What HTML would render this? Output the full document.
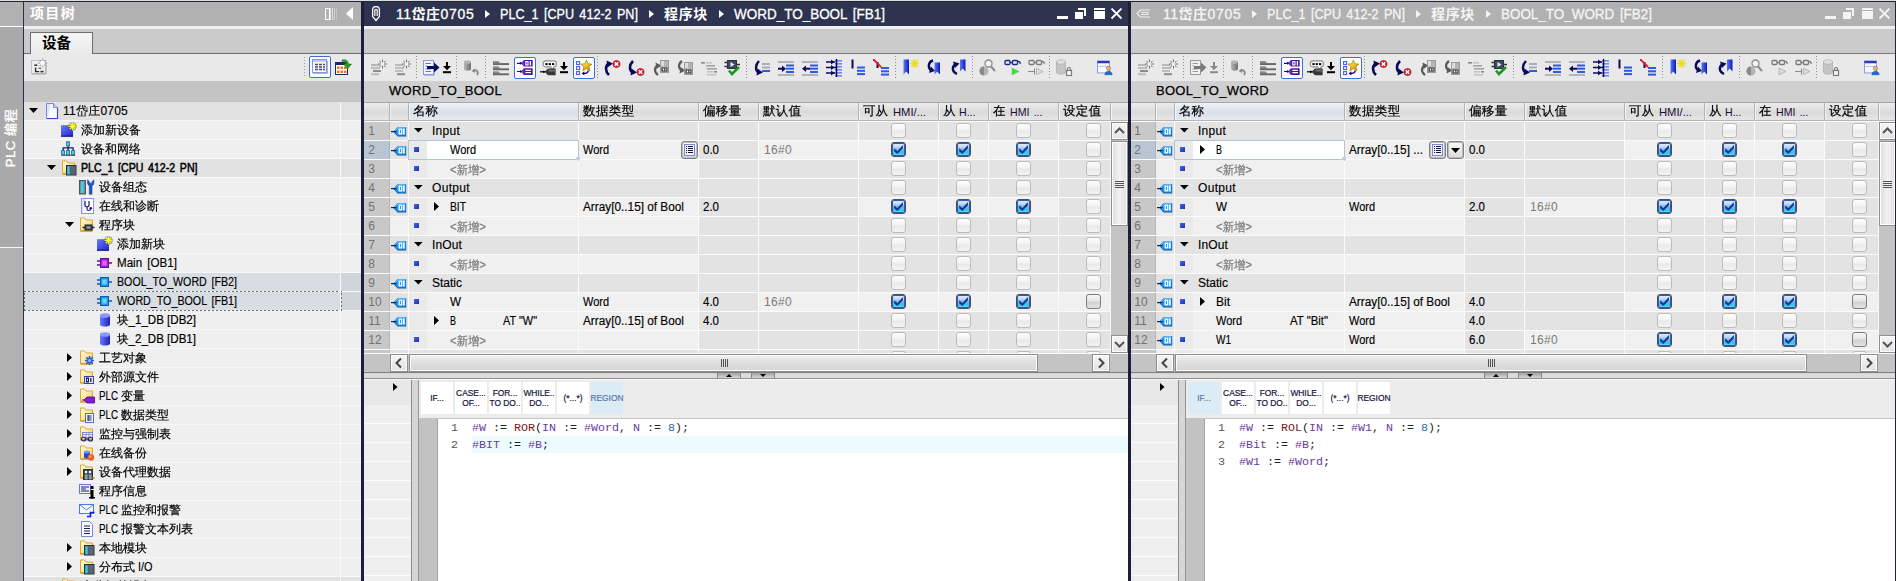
<!DOCTYPE html>
<html lang="zh"><head><meta charset="utf-8"><title>TIA Portal</title><style>
html,body{margin:0;padding:0;}
body{width:1896px;height:581px;overflow:hidden;position:relative;background:#e9e9e9;font-family:"Liberation Sans","WenQuanYi Zen Hei","Noto Sans CJK SC",sans-serif;font-size:12px}
#r{position:absolute;left:0;top:0;width:1896px;height:581px;overflow:hidden}
#r div,#r svg,#r .t{position:absolute}
.t{white-space:pre;display:block}
.m{font-family:"Liberation Mono",monospace;font-size:11.67px}
</style></head><body><div id="r">
<div style="left:0px;top:0px;width:1896px;height:1px;background:#dededc"></div>
<div style="left:0px;top:1px;width:1896px;height:1px;background:#1f243a"></div>
<div style="left:0px;top:2px;width:23px;height:579px;background:#b1b1b1"></div>
<div style="left:0px;top:26px;width:23px;height:1px;background:#fff"></div>
<div style="left:0px;top:27px;width:23px;height:220px;background:#a9a9a9"></div>
<div style="left:0px;top:247px;width:23px;height:1px;background:#f4f4f4"></div>
<div style="left:23px;top:2px;width:1px;height:579px;background:#2a2f45"></div>
<span class="t" style="left:-29.5px;top:128px;width:80px;height:20px;line-height:20px;text-align:center;font-size:13px;color:#fff;transform:rotate(-90deg);letter-spacing:0.6px;-webkit-text-stroke:0.35px #fff;font-family:&quot;Liberation Sans&quot;,&quot;Noto Sans CJK SC&quot;,sans-serif">PLC 编程</span>
<div style="left:24px;top:2px;width:337px;height:24px;background:#b1b1b1"></div>
<span class="t" style="left:30px;top:2.5px;height:20px;line-height:20px;font-size:14px;color:#fff;font-weight:bold;letter-spacing:1.333px;font-family:'Liberation Sans','Noto Sans CJK SC',sans-serif;">项目树</span>
<svg style="left:325px;top:8px;" width="14" height="12" viewBox="0 0 14 12"><rect x="0.5" y="0.5" width="4" height="11" fill="none" stroke="#fff"/><rect x="5" y="0" width="1" height="12" fill="#e4e4e4"/><rect x="7" y="0" width="1" height="12" fill="#dcdcdc"/><rect x="9" y="0" width="1" height="12" fill="#cfcfcf"/><rect x="11" y="0" width="1" height="12" fill="#c4c4c4"/></svg>
<svg style="left:346px;top:7px;" width="8" height="13" viewBox="0 0 8 13"><path d="M7,0 L7,13 L0,6.5 Z" fill="#fff"/></svg>
<div style="left:24px;top:26px;width:337px;height:3px;background:#f0f0f0"></div>
<div style="left:24px;top:29px;width:337px;height:24px;background:#cbcbcb"></div>
<div style="left:24px;top:53px;width:337px;height:1px;background:#6e6e6e"></div>
<div style="left:30px;top:32px;width:63px;height:22px;background:linear-gradient(#f6f6f6,#e9e9e9);border:1px solid #6e6e6e;border-bottom:none;box-sizing:border-box"></div>
<span class="t" style="left:42px;top:32.5px;height:20px;line-height:20px;font-size:14.5px;color:#000;font-weight:bold;letter-spacing:0.000px;font-family:'Liberation Sans','Noto Sans CJK SC',sans-serif;">设备</span>
<div style="left:24px;top:54px;width:337px;height:27px;background:#e9e9e9"></div>
<div style="left:24px;top:81px;width:337px;height:21px;background:#c4c4c4"></div>
<svg style="left:30px;top:58px;" width="18" height="18" viewBox="0 0 18 18"><rect x="1.5" y="2.5" width="14" height="13" fill="#eeeeee" stroke="#c2c2c2"/><path d="M2,16 L16,16 L16,4" fill="none" stroke="#a8a8a8"/><rect x="4.3" y="6.4" width="3" height="1.6" fill="#3c3c3c"/><path d="M5.6,9.5 L5.6,13.6 L9.2,13.6" fill="none" stroke="#2c2c2c" stroke-width="1.4"/><rect x="8.6" y="9.6" width="2.6" height="1.4" fill="#6a6a6a"/><rect x="10.4" y="12.8" width="3.2" height="1.6" fill="#3c3c3c"/><g stroke="#8c8c8c" stroke-width="0.9"><path d="M12.7,0.6 L12.7,9.4 M8.3,5 L17,5 M9.6,1.9 L15.8,8.1 M15.8,1.9 L9.6,8.1"/></g><circle cx="12.7" cy="5" r="2.2" fill="#f4f4f4"/><path d="M12.7,2.5 L12.7,7.5 M10.2,5 L15.2,5" stroke="#fff" stroke-width="1.2"/></svg>
<div style="left:304px;top:57px;width:1px;height:21px;background:repeating-linear-gradient(#9a9a9a 0 1px,transparent 1px 3px)"></div>
<div style="left:309px;top:56px;width:22px;height:22px;background:#fff;border:1px solid #3a6fd8;border-radius:2px;box-sizing:border-box"></div>
<svg style="left:312px;top:59px;" width="16" height="16" viewBox="0 0 16 16"><rect x="0.5" y="0.5" width="14" height="13" fill="#f6f7ff" stroke="#8a92e0"/><rect x="1" y="1" width="13" height="2" fill="#c4c9f4"/><path d="M3,5.5 L6,5.5 M7,5.5 L10,5.5 M11,5.5 L13,5.5 M3,8 L6,8 M7,8 L10,8 M11,8 L13,8 M3,10.5 L6,10.5 M7,10.5 L10,10.5 M11,10.5 L13,10.5" stroke="#4a4a6a" stroke-width="1.3"/><path d="M1,14.5 L15.5,14.5 L15.5,2" fill="none" stroke="#b0b4d8" stroke-width="1"/></svg>
<svg style="left:335px;top:58px;" width="18" height="18" viewBox="0 0 18 18"><rect x="0.5" y="4.5" width="12" height="12" fill="#fff" stroke="#1a2a6a"/><rect x="0.5" y="4.5" width="12" height="2.5" fill="#1a2a6a"/><g fill="#f07a10"><rect x="2" y="8.5" width="2.5" height="2.5"/><rect x="5.5" y="8.5" width="2.5" height="2.5"/><rect x="9" y="8.5" width="2.5" height="2.5"/><rect x="2" y="12.5" width="2.5" height="2.5"/><rect x="5.5" y="12.5" width="2.5" height="2.5"/><rect x="9" y="12.5" width="2.5" height="2.5"/></g><path d="M7,2 C11,1 13.5,3 13.5,6 L16.5,6 L12.5,11 L8.5,6 L11,6 C11,4 9.5,3 7,3.5 Z" fill="#2a9a2a" stroke="#1a6a1a" stroke-width="0.5"/></svg>
<div style="left:24px;top:102px;width:316px;height:18px;background:#e1e1e1"></div>
<div style="left:341px;top:102px;width:20px;height:18px;background:#e1e1e1"></div>
<div style="left:24px;top:120px;width:337px;height:1px;background:#f8f8f8"></div>
<svg style="left:29px;top:108px;" width="9" height="5" viewBox="0 0 9 5"><path d="M0,0 L9,0 L4.5,5 Z" fill="#000"/></svg>
<svg style="left:45px;top:103px;" width="16" height="16" viewBox="0 0 16 16"><path d="M1.5,0.5 L8.5,0.5 L12.5,4.5 L12.5,15.5 L1.5,15.5 Z" fill="#fbfbff" stroke="#7a86e0" stroke-width="1"/><path d="M2,1 L6,1 L3,14 L2,14Z" fill="#dfe3fb"/><path d="M8.5,0.5 L8.5,4.5 L12.5,4.5" fill="#c9d0f6" stroke="#7a86e0" stroke-width="1"/><path d="M12.5,5 L12.5,15.5 L2,15.5" fill="none" stroke="#3a48c8" stroke-width="1.2"/></svg>
<span class="t" style="left:63px;top:101.4px;height:20px;line-height:20px;font-size:12px;color:#000;font-weight:normal;letter-spacing:0.230px;word-spacing:2px;-webkit-text-stroke:0.15px #000;">11岱庄0705</span>
<div style="left:24px;top:121px;width:316px;height:18px;background:#efefef"></div>
<div style="left:341px;top:121px;width:20px;height:18px;background:#efefef"></div>
<div style="left:24px;top:139px;width:337px;height:1px;background:#f8f8f8"></div>
<svg style="left:61px;top:122px;" width="16" height="16" viewBox="0 0 16 16"><defs><linearGradient id="an" x1="0" y1="0" x2="1" y2="1"><stop offset="0" stop-color="#6a78f8"/><stop offset="1" stop-color="#2228d0"/></linearGradient></defs><rect x="0" y="3.2" width="12" height="11" fill="url(#an)"/><path d="M0,14.2 L12,14.2" stroke="#0c0c80" stroke-width="1.2"/><g stroke="#1a2a8a" stroke-width="2.2" opacity="0.55"><path d="M11.5,0 L11.5,8.8 M7.1,4.4 L15.9,4.4 M8.4,1.3 L14.6,7.5 M14.6,1.3 L8.4,7.5"/></g><g stroke="#f8f22a" stroke-width="1.4"><path d="M11.5,0.3 L11.5,8.5 M7.4,4.4 L15.6,4.4 M8.7,1.6 L14.3,7.2 M14.3,1.6 L8.7,7.2"/></g><circle cx="11.5" cy="4.4" r="1.8" fill="#fbf640"/></svg>
<span class="t" style="left:81px;top:120.4px;height:20px;line-height:20px;font-size:12px;color:#000;font-weight:normal;letter-spacing:0.000px;-webkit-text-stroke:0.2px #000;">添加新设备</span>
<div style="left:24px;top:140px;width:316px;height:18px;background:#efefef"></div>
<div style="left:341px;top:140px;width:20px;height:18px;background:#efefef"></div>
<div style="left:24px;top:158px;width:337px;height:1px;background:#f8f8f8"></div>
<svg style="left:61px;top:141px;" width="16" height="16" viewBox="0 0 16 16"><g fill="#2adcec" stroke="#3a5a90" stroke-width="0.8"><rect x="5.6" y="0.8" width="3" height="4"/><rect x="0.6" y="9.6" width="3" height="4.2"/><rect x="5.6" y="9.6" width="3" height="4.2"/><rect x="10.6" y="9.6" width="3" height="4.2"/></g><path d="M7.1,5 L7.1,9.4 M2.1,9.4 L2.1,6.9 L12.1,6.9 L12.1,9.4" fill="none" stroke="#14206a" stroke-width="1.3"/><path d="M0.3,14.3 L14.2,14.3" stroke="#3a4a6a" stroke-width="1"/></svg>
<span class="t" style="left:81px;top:139.4px;height:20px;line-height:20px;font-size:12px;color:#000;font-weight:normal;letter-spacing:0.000px;-webkit-text-stroke:0.2px #000;">设备和网络</span>
<div style="left:24px;top:159px;width:316px;height:18px;background:#e1e1e1"></div>
<div style="left:341px;top:159px;width:20px;height:18px;background:#e1e1e1"></div>
<div style="left:24px;top:177px;width:337px;height:1px;background:#f8f8f8"></div>
<svg style="left:47px;top:165px;" width="9" height="5" viewBox="0 0 9 5"><path d="M0,0 L9,0 L4.5,5 Z" fill="#000"/></svg>
<svg style="left:61px;top:160px;" width="16" height="16" viewBox="0 0 16 16"><defs><linearGradient id="fg" x1="0" y1="0" x2="0.9" y2="1"><stop offset="0" stop-color="#fffbe6"/><stop offset="0.55" stop-color="#fbe7a0"/><stop offset="1" stop-color="#efb540"/></linearGradient></defs><path d="M1.5,1 L5.5,1 L7,3 L13.5,3 L13.5,14 L1.5,14 Z" fill="url(#fg)" stroke="#e0a830" stroke-width="1"/><path d="M1.5,14 L13.5,14" stroke="#c88a18" stroke-width="1"/><rect x="5.5" y="5.5" width="9.5" height="9.5" fill="#4c5664" stroke="#2a3038" stroke-width="1"/><rect x="6.3" y="6.3" width="2.4" height="8" fill="#35d0e0"/><rect x="9.5" y="6" width="5" height="8.5" fill="#5a6472"/></svg>
<span class="t" style="left:81px;top:158.4px;height:20px;line-height:20px;font-size:12px;color:#000;font-weight:normal;transform:scaleX(0.8822);transform-origin:0 50%;word-spacing:2px;-webkit-text-stroke:0.5px #000;">PLC_1 [CPU 412-2 PN]</span>
<div style="left:24px;top:178px;width:316px;height:18px;background:#efefef"></div>
<div style="left:341px;top:178px;width:20px;height:18px;background:#efefef"></div>
<div style="left:24px;top:196px;width:337px;height:1px;background:#f8f8f8"></div>
<svg style="left:79px;top:179px;" width="16" height="16" viewBox="0 0 16 16"><rect x="0.5" y="1.5" width="6" height="13.5" fill="#7c8894" stroke="#4a5560"/><rect x="2" y="2.5" width="2.6" height="11.5" fill="#38d4e4"/><path d="M8.6,0.8 L8.6,4 C8.6,5.8 9.6,6.3 10.3,6.8 L10.3,15.2 L13,15.2 L13,6.8 C13.7,6.3 14.8,5.8 14.8,4 L14.8,0.8 L13,2.8 L13,4.2 L10.4,4.2 L10.4,2.8 Z" fill="#1f55d0" stroke="#0a2a90" stroke-width="0.5"/></svg>
<span class="t" style="left:99px;top:177.4px;height:20px;line-height:20px;font-size:12px;color:#000;font-weight:normal;letter-spacing:0.000px;-webkit-text-stroke:0.2px #000;">设备组态</span>
<div style="left:24px;top:197px;width:316px;height:18px;background:#efefef"></div>
<div style="left:341px;top:197px;width:20px;height:18px;background:#efefef"></div>
<div style="left:24px;top:215px;width:337px;height:1px;background:#f8f8f8"></div>
<svg style="left:79px;top:198px;" width="16" height="16" viewBox="0 0 16 16"><rect x="2.5" y="0.5" width="12" height="15" fill="#fff" stroke="#8a96e4"/><path d="M3,1 L7,1 L4,15 L3,15Z" fill="#dfe3fb"/><path d="M6,3 L6,7 C6,9.5 10,9.5 10,7 L10,3 M8,9 L8,11 C8,13 11.5,13 11.5,11" fill="none" stroke="#1a1a6a" stroke-width="1.2"/><circle cx="11.8" cy="10.2" r="1.3" fill="#1a1a6a"/></svg>
<span class="t" style="left:99px;top:196.4px;height:20px;line-height:20px;font-size:12px;color:#000;font-weight:normal;letter-spacing:0.000px;-webkit-text-stroke:0.2px #000;">在线和诊断</span>
<div style="left:24px;top:216px;width:316px;height:18px;background:#efefef"></div>
<div style="left:341px;top:216px;width:20px;height:18px;background:#efefef"></div>
<div style="left:24px;top:234px;width:337px;height:1px;background:#f8f8f8"></div>
<svg style="left:65px;top:222px;" width="9" height="5" viewBox="0 0 9 5"><path d="M0,0 L9,0 L4.5,5 Z" fill="#000"/></svg>
<svg style="left:79px;top:217px;" width="16" height="16" viewBox="0 0 16 16"><defs><linearGradient id="fg" x1="0" y1="0" x2="0.9" y2="1"><stop offset="0" stop-color="#fffbe6"/><stop offset="0.55" stop-color="#fbe7a0"/><stop offset="1" stop-color="#efb540"/></linearGradient></defs><path d="M1.5,1 L5.5,1 L7,3 L13.5,3 L13.5,14 L1.5,14 Z" fill="url(#fg)" stroke="#e0a830" stroke-width="1"/><path d="M1.5,14 L13.5,14" stroke="#c88a18" stroke-width="1"/><rect x="6" y="8" width="7" height="5" fill="#3a444e" stroke="#1a2028"/><path d="M3.5,10.5 L6,10.5 M13,10.5 L15.5,10.5" stroke="#1a2028" stroke-width="1.4"/><rect x="7.5" y="9.3" width="4" height="2.4" fill="#8a98a4"/></svg>
<span class="t" style="left:99px;top:215.4px;height:20px;line-height:20px;font-size:12px;color:#000;font-weight:normal;letter-spacing:0.000px;-webkit-text-stroke:0.2px #000;">程序块</span>
<div style="left:24px;top:235px;width:316px;height:18px;background:#efefef"></div>
<div style="left:341px;top:235px;width:20px;height:18px;background:#efefef"></div>
<div style="left:24px;top:253px;width:337px;height:1px;background:#f8f8f8"></div>
<svg style="left:97px;top:236px;" width="16" height="16" viewBox="0 0 16 16"><defs><linearGradient id="an" x1="0" y1="0" x2="1" y2="1"><stop offset="0" stop-color="#6a78f8"/><stop offset="1" stop-color="#2228d0"/></linearGradient></defs><rect x="0" y="3.2" width="12" height="11" fill="url(#an)"/><path d="M0,14.2 L12,14.2" stroke="#0c0c80" stroke-width="1.2"/><g stroke="#1a2a8a" stroke-width="2.2" opacity="0.55"><path d="M11.5,0 L11.5,8.8 M7.1,4.4 L15.9,4.4 M8.4,1.3 L14.6,7.5 M14.6,1.3 L8.4,7.5"/></g><g stroke="#f8f22a" stroke-width="1.4"><path d="M11.5,0.3 L11.5,8.5 M7.4,4.4 L15.6,4.4 M8.7,1.6 L14.3,7.2 M14.3,1.6 L8.7,7.2"/></g><circle cx="11.5" cy="4.4" r="1.8" fill="#fbf640"/></svg>
<span class="t" style="left:117px;top:234.4px;height:20px;line-height:20px;font-size:12px;color:#000;font-weight:normal;letter-spacing:0.000px;-webkit-text-stroke:0.2px #000;">添加新块</span>
<div style="left:24px;top:254px;width:316px;height:18px;background:#efefef"></div>
<div style="left:341px;top:254px;width:20px;height:18px;background:#efefef"></div>
<div style="left:24px;top:272px;width:337px;height:1px;background:#f8f8f8"></div>
<svg style="left:97px;top:255px;" width="16" height="16" viewBox="0 0 16 16"><path d="M0,6 L4,6 M0,10 L4,10 M11,8 L15,8" stroke="#6a0a9a" stroke-width="1.7"/><rect x="3.5" y="3.5" width="8" height="9" fill="#a020d8" stroke="#6a0a9a" stroke-width="1"/><rect x="5.3" y="5.5" width="4.4" height="5" fill="#e060f8"/></svg>
<span class="t" style="left:117px;top:253.39999999999998px;height:20px;line-height:20px;font-size:12px;color:#000;font-weight:normal;transform:scaleX(0.9673);transform-origin:0 50%;word-spacing:2px;-webkit-text-stroke:0.15px #000;">Main [OB1]</span>
<div style="left:24px;top:273px;width:316px;height:18px;background:#d8dde3"></div>
<div style="left:341px;top:273px;width:20px;height:18px;background:#d0d5db"></div>
<div style="left:24px;top:291px;width:337px;height:1px;background:#f8f8f8"></div>
<svg style="left:97px;top:274px;" width="16" height="16" viewBox="0 0 16 16"><path d="M0,6 L4,6 M0,10 L4,10 M11,8 L15,8" stroke="#0a5aa8" stroke-width="1.7"/><rect x="3.5" y="3.5" width="8" height="9" fill="#1a9ae8" stroke="#0a5aa8" stroke-width="1"/><rect x="5.3" y="5.5" width="4.4" height="5" fill="#6ad0fc"/></svg>
<span class="t" style="left:117px;top:272.4px;height:20px;line-height:20px;font-size:12px;color:#000;font-weight:normal;transform:scaleX(0.8879);transform-origin:0 50%;word-spacing:2px;-webkit-text-stroke:0.15px #000;">BOOL_TO_WORD [FB2]</span>
<div style="left:24px;top:292px;width:316px;height:18px;background:#d8dde3"></div>
<div style="left:341px;top:292px;width:20px;height:18px;background:#d0d5db"></div>
<div style="left:24px;top:310px;width:337px;height:1px;background:#f8f8f8"></div>
<div style="left:24px;top:291px;width:318px;height:1px;background:repeating-linear-gradient(90deg,#707070 0 2px,transparent 2px 4px)"></div>
<div style="left:24px;top:310px;width:318px;height:1px;background:repeating-linear-gradient(90deg,#707070 0 2px,transparent 2px 4px)"></div>
<div style="left:24px;top:291px;width:1px;height:20px;background:repeating-linear-gradient(0deg,#707070 0 2px,transparent 2px 4px)"></div>
<div style="left:341px;top:291px;width:1px;height:20px;background:repeating-linear-gradient(0deg,#707070 0 2px,transparent 2px 4px)"></div>
<svg style="left:97px;top:293px;" width="16" height="16" viewBox="0 0 16 16"><path d="M0,6 L4,6 M0,10 L4,10 M11,8 L15,8" stroke="#0a5aa8" stroke-width="1.7"/><rect x="3.5" y="3.5" width="8" height="9" fill="#1a9ae8" stroke="#0a5aa8" stroke-width="1"/><rect x="5.3" y="5.5" width="4.4" height="5" fill="#6ad0fc"/></svg>
<span class="t" style="left:117px;top:291.4px;height:20px;line-height:20px;font-size:12px;color:#000;font-weight:normal;transform:scaleX(0.8908);transform-origin:0 50%;word-spacing:2px;-webkit-text-stroke:0.15px #000;">WORD_TO_BOOL [FB1]</span>
<div style="left:24px;top:311px;width:316px;height:18px;background:#efefef"></div>
<div style="left:341px;top:311px;width:20px;height:18px;background:#efefef"></div>
<div style="left:24px;top:329px;width:337px;height:1px;background:#f8f8f8"></div>
<svg style="left:97px;top:312px;" width="16" height="16" viewBox="0 0 16 16"><defs><linearGradient id="gf" x1="0" y1="0" x2="1" y2="1"><stop offset="0" stop-color="#fff3c4"/><stop offset="1" stop-color="#f0b93a"/></linearGradient><linearGradient id="gb" x1="0" y1="0" x2="1" y2="1"><stop offset="0" stop-color="#5a6cf0"/><stop offset="1" stop-color="#1a20b8"/></linearGradient><linearGradient id="gd" x1="0" y1="0" x2="1" y2="0"><stop offset="0" stop-color="#6a7cf8"/><stop offset="1" stop-color="#1a22c0"/></linearGradient><linearGradient id="gg" x1="0" y1="0" x2="1" y2="0"><stop offset="0" stop-color="#b8b8b8"/><stop offset="1" stop-color="#6e6e6e"/></linearGradient></defs><path d="M3,3.5 L3,12.5 C3,15.3 13,15.3 13,12.5 L13,3.5 Z" fill="url(#gd)"/><ellipse cx="8" cy="3.5" rx="5" ry="2.3" fill="#8a98fa"/></svg>
<span class="t" style="left:117px;top:310.4px;height:20px;line-height:20px;font-size:12px;color:#000;font-weight:normal;transform:scaleX(0.9629);transform-origin:0 50%;-webkit-text-stroke:0.2px #000;">块_1_DB [DB2]</span>
<div style="left:24px;top:330px;width:316px;height:18px;background:#efefef"></div>
<div style="left:341px;top:330px;width:20px;height:18px;background:#efefef"></div>
<div style="left:24px;top:348px;width:337px;height:1px;background:#f8f8f8"></div>
<svg style="left:97px;top:331px;" width="16" height="16" viewBox="0 0 16 16"><defs><linearGradient id="gf" x1="0" y1="0" x2="1" y2="1"><stop offset="0" stop-color="#fff3c4"/><stop offset="1" stop-color="#f0b93a"/></linearGradient><linearGradient id="gb" x1="0" y1="0" x2="1" y2="1"><stop offset="0" stop-color="#5a6cf0"/><stop offset="1" stop-color="#1a20b8"/></linearGradient><linearGradient id="gd" x1="0" y1="0" x2="1" y2="0"><stop offset="0" stop-color="#6a7cf8"/><stop offset="1" stop-color="#1a22c0"/></linearGradient><linearGradient id="gg" x1="0" y1="0" x2="1" y2="0"><stop offset="0" stop-color="#b8b8b8"/><stop offset="1" stop-color="#6e6e6e"/></linearGradient></defs><path d="M3,3.5 L3,12.5 C3,15.3 13,15.3 13,12.5 L13,3.5 Z" fill="url(#gd)"/><ellipse cx="8" cy="3.5" rx="5" ry="2.3" fill="#8a98fa"/></svg>
<span class="t" style="left:117px;top:329.4px;height:20px;line-height:20px;font-size:12px;color:#000;font-weight:normal;transform:scaleX(0.9629);transform-origin:0 50%;-webkit-text-stroke:0.2px #000;">块_2_DB [DB1]</span>
<div style="left:24px;top:349px;width:316px;height:18px;background:#efefef"></div>
<div style="left:341px;top:349px;width:20px;height:18px;background:#efefef"></div>
<div style="left:24px;top:367px;width:337px;height:1px;background:#f8f8f8"></div>
<svg style="left:67px;top:353px;" width="5" height="9" viewBox="0 0 5 9"><path d="M0,0 L5,4.5 L0,9 Z" fill="#000"/></svg>
<svg style="left:79px;top:350px;" width="16" height="16" viewBox="0 0 16 16"><defs><linearGradient id="fg" x1="0" y1="0" x2="0.9" y2="1"><stop offset="0" stop-color="#fffbe6"/><stop offset="0.55" stop-color="#fbe7a0"/><stop offset="1" stop-color="#efb540"/></linearGradient></defs><path d="M1.5,1 L5.5,1 L7,3 L13.5,3 L13.5,14 L1.5,14 Z" fill="url(#fg)" stroke="#e0a830" stroke-width="1"/><path d="M1.5,14 L13.5,14" stroke="#c88a18" stroke-width="1"/><g stroke="#1a5ad8" stroke-width="1.6"><path d="M10.5,6 L10.5,15 M6,10.5 L15,10.5 M7.3,7.3 L13.7,13.7 M13.7,7.3 L7.3,13.7"/></g><circle cx="10.5" cy="10.5" r="1.6" fill="#8ac0ff"/></svg>
<span class="t" style="left:99px;top:348.4px;height:20px;line-height:20px;font-size:12px;color:#000;font-weight:normal;letter-spacing:0.000px;-webkit-text-stroke:0.2px #000;">工艺对象</span>
<div style="left:24px;top:368px;width:316px;height:18px;background:#efefef"></div>
<div style="left:341px;top:368px;width:20px;height:18px;background:#efefef"></div>
<div style="left:24px;top:386px;width:337px;height:1px;background:#f8f8f8"></div>
<svg style="left:67px;top:372px;" width="5" height="9" viewBox="0 0 5 9"><path d="M0,0 L5,4.5 L0,9 Z" fill="#000"/></svg>
<svg style="left:79px;top:369px;" width="16" height="16" viewBox="0 0 16 16"><defs><linearGradient id="fg" x1="0" y1="0" x2="0.9" y2="1"><stop offset="0" stop-color="#fffbe6"/><stop offset="0.55" stop-color="#fbe7a0"/><stop offset="1" stop-color="#efb540"/></linearGradient></defs><path d="M1.5,1 L5.5,1 L7,3 L13.5,3 L13.5,14 L1.5,14 Z" fill="url(#fg)" stroke="#e0a830" stroke-width="1"/><path d="M1.5,14 L13.5,14" stroke="#c88a18" stroke-width="1"/><rect x="5.5" y="7.5" width="9" height="7" fill="#e8ecff" stroke="#3a44a8"/><rect x="7.5" y="9" width="2" height="4" fill="none" stroke="#1a1a6a" stroke-width="1"/><path d="M11.8,9 L11.8,13" stroke="#1a1a6a" stroke-width="1.3"/></svg>
<span class="t" style="left:99px;top:367.4px;height:20px;line-height:20px;font-size:12px;color:#000;font-weight:normal;letter-spacing:0.000px;-webkit-text-stroke:0.2px #000;">外部源文件</span>
<div style="left:24px;top:387px;width:316px;height:18px;background:#efefef"></div>
<div style="left:341px;top:387px;width:20px;height:18px;background:#efefef"></div>
<div style="left:24px;top:405px;width:337px;height:1px;background:#f8f8f8"></div>
<svg style="left:67px;top:391px;" width="5" height="9" viewBox="0 0 5 9"><path d="M0,0 L5,4.5 L0,9 Z" fill="#000"/></svg>
<svg style="left:79px;top:388px;" width="16" height="16" viewBox="0 0 16 16"><defs><linearGradient id="fg" x1="0" y1="0" x2="0.9" y2="1"><stop offset="0" stop-color="#fffbe6"/><stop offset="0.55" stop-color="#fbe7a0"/><stop offset="1" stop-color="#efb540"/></linearGradient></defs><path d="M1.5,1 L5.5,1 L7,3 L13.5,3 L13.5,14 L1.5,14 Z" fill="url(#fg)" stroke="#e0a830" stroke-width="1"/><path d="M1.5,14 L13.5,14" stroke="#c88a18" stroke-width="1"/><path d="M5,12 L8,9 L15.5,9 L15.5,15 L8,15 Z" fill="#8a1ad8" stroke="#4a0a8a" stroke-width="0.8"/><path d="M3,12 L6,12" stroke="#4a0a8a"/></svg>
<span class="t" style="left:99px;top:386.4px;height:20px;line-height:20px;font-size:12px;color:#000;font-weight:normal;transform:scaleX(0.8139);transform-origin:0 50%;word-spacing:2px;-webkit-text-stroke:0.15px #000;">PLC</span>
<span class="t" style="left:121px;top:386.4px;height:20px;line-height:20px;font-size:12px;color:#000;font-weight:normal;letter-spacing:0.000px;-webkit-text-stroke:0.2px #000;">变量</span>
<div style="left:24px;top:406px;width:316px;height:18px;background:#efefef"></div>
<div style="left:341px;top:406px;width:20px;height:18px;background:#efefef"></div>
<div style="left:24px;top:424px;width:337px;height:1px;background:#f8f8f8"></div>
<svg style="left:67px;top:410px;" width="5" height="9" viewBox="0 0 5 9"><path d="M0,0 L5,4.5 L0,9 Z" fill="#000"/></svg>
<svg style="left:79px;top:407px;" width="16" height="16" viewBox="0 0 16 16"><defs><linearGradient id="fg" x1="0" y1="0" x2="0.9" y2="1"><stop offset="0" stop-color="#fffbe6"/><stop offset="0.55" stop-color="#fbe7a0"/><stop offset="1" stop-color="#efb540"/></linearGradient></defs><path d="M1.5,1 L5.5,1 L7,3 L13.5,3 L13.5,14 L1.5,14 Z" fill="url(#fg)" stroke="#e0a830" stroke-width="1"/><path d="M1.5,14 L13.5,14" stroke="#c88a18" stroke-width="1"/><rect x="6.5" y="6.5" width="8" height="9" fill="#f4f6ff" stroke="#5a66c8"/><path d="M9,8 L9,14 M9,9 L12.5,9 M9,11 L12.5,11 M9,13 L12.5,13" stroke="#1a1a6a" stroke-width="1"/></svg>
<span class="t" style="left:99px;top:405.4px;height:20px;line-height:20px;font-size:12px;color:#000;font-weight:normal;transform:scaleX(0.8139);transform-origin:0 50%;word-spacing:2px;-webkit-text-stroke:0.15px #000;">PLC</span>
<span class="t" style="left:121px;top:405.4px;height:20px;line-height:20px;font-size:12px;color:#000;font-weight:normal;letter-spacing:0.000px;-webkit-text-stroke:0.2px #000;">数据类型</span>
<div style="left:24px;top:425px;width:316px;height:18px;background:#efefef"></div>
<div style="left:341px;top:425px;width:20px;height:18px;background:#efefef"></div>
<div style="left:24px;top:443px;width:337px;height:1px;background:#f8f8f8"></div>
<svg style="left:67px;top:429px;" width="5" height="9" viewBox="0 0 5 9"><path d="M0,0 L5,4.5 L0,9 Z" fill="#000"/></svg>
<svg style="left:79px;top:426px;" width="16" height="16" viewBox="0 0 16 16"><defs><linearGradient id="fg" x1="0" y1="0" x2="0.9" y2="1"><stop offset="0" stop-color="#fffbe6"/><stop offset="0.55" stop-color="#fbe7a0"/><stop offset="1" stop-color="#efb540"/></linearGradient></defs><path d="M1.5,1 L5.5,1 L7,3 L13.5,3 L13.5,14 L1.5,14 Z" fill="url(#fg)" stroke="#e0a830" stroke-width="1"/><path d="M1.5,14 L13.5,14" stroke="#c88a18" stroke-width="1"/><rect x="3.5" y="6.5" width="10" height="5" fill="#f0f2ff" stroke="#6a74c8" stroke-width="0.8"/><path d="M4,8.5 L13,8.5 M7,7 L7,11 M10,7 L10,11" stroke="#6a74c8" stroke-width="0.7"/><circle cx="4.5" cy="13" r="2" fill="none" stroke="#1a2a8a" stroke-width="1.2"/><circle cx="11.5" cy="13" r="2" fill="none" stroke="#1a2a8a" stroke-width="1.2"/><path d="M6.5,13 L9.5,13" stroke="#1a2a8a" stroke-width="1.2"/></svg>
<span class="t" style="left:99px;top:424.4px;height:20px;line-height:20px;font-size:12px;color:#000;font-weight:normal;letter-spacing:0.000px;-webkit-text-stroke:0.2px #000;">监控与强制表</span>
<div style="left:24px;top:444px;width:316px;height:18px;background:#efefef"></div>
<div style="left:341px;top:444px;width:20px;height:18px;background:#efefef"></div>
<div style="left:24px;top:462px;width:337px;height:1px;background:#f8f8f8"></div>
<svg style="left:67px;top:448px;" width="5" height="9" viewBox="0 0 5 9"><path d="M0,0 L5,4.5 L0,9 Z" fill="#000"/></svg>
<svg style="left:79px;top:445px;" width="16" height="16" viewBox="0 0 16 16"><defs><linearGradient id="fg" x1="0" y1="0" x2="0.9" y2="1"><stop offset="0" stop-color="#fffbe6"/><stop offset="0.55" stop-color="#fbe7a0"/><stop offset="1" stop-color="#efb540"/></linearGradient></defs><path d="M1.5,1 L5.5,1 L7,3 L13.5,3 L13.5,14 L1.5,14 Z" fill="url(#fg)" stroke="#e0a830" stroke-width="1"/><path d="M1.5,14 L13.5,14" stroke="#c88a18" stroke-width="1"/><path d="M5,7 L5,12 C5,14 11,14 11,12 L11,7 Z" fill="#2a44d8"/><ellipse cx="8" cy="7" rx="3" ry="1.5" fill="#7a90f8"/><circle cx="12" cy="12.5" r="3.2" fill="#f0601a"/><circle cx="11.2" cy="11.5" r="1.2" fill="#f8a070"/></svg>
<span class="t" style="left:99px;top:443.4px;height:20px;line-height:20px;font-size:12px;color:#000;font-weight:normal;letter-spacing:0.000px;-webkit-text-stroke:0.2px #000;">在线备份</span>
<div style="left:24px;top:463px;width:316px;height:18px;background:#efefef"></div>
<div style="left:341px;top:463px;width:20px;height:18px;background:#efefef"></div>
<div style="left:24px;top:481px;width:337px;height:1px;background:#f8f8f8"></div>
<svg style="left:67px;top:467px;" width="5" height="9" viewBox="0 0 5 9"><path d="M0,0 L5,4.5 L0,9 Z" fill="#000"/></svg>
<svg style="left:79px;top:464px;" width="16" height="16" viewBox="0 0 16 16"><defs><linearGradient id="fg" x1="0" y1="0" x2="0.9" y2="1"><stop offset="0" stop-color="#fffbe6"/><stop offset="0.55" stop-color="#fbe7a0"/><stop offset="1" stop-color="#efb540"/></linearGradient></defs><path d="M1.5,1 L5.5,1 L7,3 L13.5,3 L13.5,14 L1.5,14 Z" fill="url(#fg)" stroke="#e0a830" stroke-width="1"/><path d="M1.5,14 L13.5,14" stroke="#c88a18" stroke-width="1"/><rect x="4.5" y="5.5" width="9" height="10" fill="#4a5560" stroke="#2a3038"/><rect x="6" y="7" width="2" height="2" fill="#fff"/><rect x="10" y="7" width="2" height="2" fill="#fff"/><rect x="6" y="10.5" width="2.5" height="5" fill="#8aa0b0"/><rect x="10" y="10.5" width="2.5" height="5" fill="#8aa0b0"/><rect x="13.5" y="13" width="2" height="2" fill="#c89a1a"/></svg>
<span class="t" style="left:99px;top:462.4px;height:20px;line-height:20px;font-size:12px;color:#000;font-weight:normal;letter-spacing:0.000px;-webkit-text-stroke:0.2px #000;">设备代理数据</span>
<div style="left:24px;top:482px;width:316px;height:18px;background:#efefef"></div>
<div style="left:341px;top:482px;width:20px;height:18px;background:#efefef"></div>
<div style="left:24px;top:500px;width:337px;height:1px;background:#f8f8f8"></div>
<svg style="left:79px;top:483px;" width="16" height="16" viewBox="0 0 16 16"><rect x="0.5" y="1.5" width="11" height="9" fill="#eef0ff" stroke="#6a78d8"/><path d="M2,4 L5,4 M2,6 L5,6 M2,8 L5,8 M7,4 L10,4 M7,8 L10,8 M6,3 L6,9" stroke="#1a1a6a" stroke-width="1"/><rect x="11.5" y="7" width="3" height="8.5" fill="#000"/><rect x="11.5" y="3" width="3" height="3" fill="#000"/><rect x="10" y="14" width="6" height="1.5" fill="#000"/></svg>
<span class="t" style="left:99px;top:481.4px;height:20px;line-height:20px;font-size:12px;color:#000;font-weight:normal;letter-spacing:0.000px;-webkit-text-stroke:0.2px #000;">程序信息</span>
<div style="left:24px;top:501px;width:316px;height:18px;background:#efefef"></div>
<div style="left:341px;top:501px;width:20px;height:18px;background:#efefef"></div>
<div style="left:24px;top:519px;width:337px;height:1px;background:#f8f8f8"></div>
<svg style="left:79px;top:502px;" width="16" height="16" viewBox="0 0 16 16"><rect x="0.5" y="2.5" width="14" height="9" fill="#f8faff" stroke="#4a78e8"/><path d="M0.5,2.5 L7.5,8 L14.5,2.5" fill="none" stroke="#4a78e8"/><path d="M8,14.5 L11.5,14.5 L11.5,10.5 L15.5,10.5" fill="none" stroke="#1a1ad8" stroke-width="1.6"/></svg>
<span class="t" style="left:99px;top:500.4px;height:20px;line-height:20px;font-size:12px;color:#000;font-weight:normal;transform:scaleX(0.8139);transform-origin:0 50%;word-spacing:2px;-webkit-text-stroke:0.15px #000;">PLC</span>
<span class="t" style="left:121px;top:500.4px;height:20px;line-height:20px;font-size:12px;color:#000;font-weight:normal;letter-spacing:0.000px;-webkit-text-stroke:0.2px #000;">监控和报警</span>
<div style="left:24px;top:520px;width:316px;height:18px;background:#efefef"></div>
<div style="left:341px;top:520px;width:20px;height:18px;background:#efefef"></div>
<div style="left:24px;top:538px;width:337px;height:1px;background:#f8f8f8"></div>
<svg style="left:79px;top:521px;" width="16" height="16" viewBox="0 0 16 16"><path d="M2.5,0.5 L10.5,0.5 L13.5,3.5 L13.5,15.5 L2.5,15.5 Z" fill="#fbfbff" stroke="#7a86e0"/><path d="M5,5 L11,5 M5,7.5 L11,7.5 M5,10 L11,10 M5,12.5 L11,12.5" stroke="#1a1a5a" stroke-width="1.2"/></svg>
<span class="t" style="left:99px;top:519.4px;height:20px;line-height:20px;font-size:12px;color:#000;font-weight:normal;transform:scaleX(0.8139);transform-origin:0 50%;word-spacing:2px;-webkit-text-stroke:0.15px #000;">PLC</span>
<span class="t" style="left:121px;top:519.4px;height:20px;line-height:20px;font-size:12px;color:#000;font-weight:normal;letter-spacing:0.000px;-webkit-text-stroke:0.2px #000;">报警文本列表</span>
<div style="left:24px;top:539px;width:316px;height:18px;background:#efefef"></div>
<div style="left:341px;top:539px;width:20px;height:18px;background:#efefef"></div>
<div style="left:24px;top:557px;width:337px;height:1px;background:#f8f8f8"></div>
<svg style="left:67px;top:543px;" width="5" height="9" viewBox="0 0 5 9"><path d="M0,0 L5,4.5 L0,9 Z" fill="#000"/></svg>
<svg style="left:79px;top:540px;" width="16" height="16" viewBox="0 0 16 16"><defs><linearGradient id="fg" x1="0" y1="0" x2="0.9" y2="1"><stop offset="0" stop-color="#fffbe6"/><stop offset="0.55" stop-color="#fbe7a0"/><stop offset="1" stop-color="#efb540"/></linearGradient></defs><path d="M1.5,1 L5.5,1 L7,3 L13.5,3 L13.5,14 L1.5,14 Z" fill="url(#fg)" stroke="#e0a830" stroke-width="1"/><path d="M1.5,14 L13.5,14" stroke="#c88a18" stroke-width="1"/><rect x="5.5" y="5.5" width="9.5" height="9.5" fill="#4c5664" stroke="#2a3038" stroke-width="1"/><rect x="6.3" y="6.3" width="2.4" height="8" fill="#35d0e0"/><rect x="9.5" y="6" width="5" height="8.5" fill="#5a6472"/></svg>
<span class="t" style="left:99px;top:538.4px;height:20px;line-height:20px;font-size:12px;color:#000;font-weight:normal;letter-spacing:0.000px;-webkit-text-stroke:0.2px #000;">本地模块</span>
<div style="left:24px;top:558px;width:316px;height:18px;background:#efefef"></div>
<div style="left:341px;top:558px;width:20px;height:18px;background:#efefef"></div>
<div style="left:24px;top:576px;width:337px;height:1px;background:#f8f8f8"></div>
<svg style="left:67px;top:562px;" width="5" height="9" viewBox="0 0 5 9"><path d="M0,0 L5,4.5 L0,9 Z" fill="#000"/></svg>
<svg style="left:79px;top:559px;" width="16" height="16" viewBox="0 0 16 16"><defs><linearGradient id="fg" x1="0" y1="0" x2="0.9" y2="1"><stop offset="0" stop-color="#fffbe6"/><stop offset="0.55" stop-color="#fbe7a0"/><stop offset="1" stop-color="#efb540"/></linearGradient></defs><path d="M1.5,1 L5.5,1 L7,3 L13.5,3 L13.5,14 L1.5,14 Z" fill="url(#fg)" stroke="#e0a830" stroke-width="1"/><path d="M1.5,14 L13.5,14" stroke="#c88a18" stroke-width="1"/><rect x="5.5" y="5.5" width="9.5" height="9.5" fill="#4c5664" stroke="#2a3038" stroke-width="1"/><rect x="6.3" y="6.3" width="2.4" height="8" fill="#35d0e0"/><rect x="9.5" y="6" width="5" height="8.5" fill="#5a6472"/></svg>
<span class="t" style="left:99px;top:557.4px;height:20px;line-height:20px;font-size:12px;color:#000;font-weight:normal;letter-spacing:0.000px;-webkit-text-stroke:0.2px #000;">分布式</span>
<span class="t" style="left:138px;top:557.4px;height:20px;line-height:20px;font-size:12px;color:#000;font-weight:normal;transform:scaleX(0.9116);transform-origin:0 50%;word-spacing:2px;-webkit-text-stroke:0.15px #000;">I/O</span>
<div style="left:24px;top:577px;width:316px;height:18px;background:#e1e1e1"></div>
<div style="left:341px;top:577px;width:20px;height:18px;background:#e1e1e1"></div>
<div style="left:24px;top:595px;width:337px;height:1px;background:#f8f8f8"></div>
<svg style="left:49px;top:581px;" width="5" height="9" viewBox="0 0 5 9"><path d="M0,0 L5,4.5 L0,9 Z" fill="#000"/></svg>
<svg style="left:61px;top:578px;" width="16" height="16" viewBox="0 0 16 16"><defs><linearGradient id="fg" x1="0" y1="0" x2="0.9" y2="1"><stop offset="0" stop-color="#fffbe6"/><stop offset="0.55" stop-color="#fbe7a0"/><stop offset="1" stop-color="#efb540"/></linearGradient></defs><path d="M1.5,1 L5.5,1 L7,3 L13.5,3 L13.5,14 L1.5,14 Z" fill="url(#fg)" stroke="#e0a830" stroke-width="1"/><path d="M1.5,14 L13.5,14" stroke="#c88a18" stroke-width="1"/></svg>
<span class="t" style="left:81px;top:576.4px;height:20px;line-height:20px;font-size:12px;color:#000;font-weight:normal;letter-spacing:0.000px;-webkit-text-stroke:0.2px #000;">未分组的设备</span>
<div style="left:340px;top:102px;width:1px;height:479px;background:#fafafa"></div>
<div style="left:361px;top:2px;width:3px;height:579px;background:#1b2036"></div>
<div style="left:1128px;top:2px;width:3px;height:579px;background:#1b2036"></div>
<div style="left:364px;top:2px;width:764px;height:24px;background:#2e3450"></div>
<svg style="left:371px;top:6px;" width="10" height="16" viewBox="0 0 10 16"><path d="M1.6,10.5 L1.6,4 A3.4,3.4 0 0 1 8.4,4 L8.4,10.5 L5,14.5 Z M3.8,10 L3.8,4.6 A1.2,1.2 0 0 1 6.2,4.6 L6.2,10" fill="none" stroke="#fff" stroke-width="1.25"/></svg>
<span class="t" style="left:396px;top:3.5px;height:20px;line-height:20px;font-size:14px;color:#fff;font-weight:normal;letter-spacing:0.477px;-webkit-text-stroke:0.3px #fff;">11</span>
<span class="t" style="left:411.5px;top:3.5px;height:20px;line-height:20px;font-size:14px;color:#fff;font-weight:bold;letter-spacing:0.500px;font-family:'Liberation Sans','Noto Sans CJK SC',sans-serif;">岱庄</span>
<span class="t" style="left:440.5px;top:3.5px;height:20px;line-height:20px;font-size:14px;color:#fff;font-weight:normal;letter-spacing:0.711px;-webkit-text-stroke:0.3px #fff;">0705</span>
<span class="t" style="left:500px;top:3.5px;height:20px;line-height:20px;font-size:14px;color:#fff;font-weight:normal;transform:scaleX(0.9015);transform-origin:0 50%;word-spacing:2px;-webkit-text-stroke:0.3px #fff;">PLC_1 [CPU 412-2 PN]</span>
<span class="t" style="left:664px;top:3.5px;height:20px;line-height:20px;font-size:14px;color:#fff;font-weight:bold;letter-spacing:0.667px;font-family:'Liberation Sans','Noto Sans CJK SC',sans-serif;">程序块</span>
<span class="t" style="left:734px;top:3.5px;height:20px;line-height:20px;font-size:14px;color:#fff;font-weight:normal;transform:scaleX(0.9628);transform-origin:0 50%;word-spacing:2px;-webkit-text-stroke:0.3px #fff;">WORD_TO_BOOL [FB1]</span>
<svg style="left:485px;top:10px;" width="5" height="8" viewBox="0 0 5 8"><path d="M0,0 L5,4 L0,8 Z" fill="#fff"/></svg>
<svg style="left:649px;top:10px;" width="5" height="8" viewBox="0 0 5 8"><path d="M0,0 L5,4 L0,8 Z" fill="#fff"/></svg>
<svg style="left:719px;top:10px;" width="5" height="8" viewBox="0 0 5 8"><path d="M0,0 L5,4 L0,8 Z" fill="#fff"/></svg>
<svg style="left:1056px;top:8px;" width="68" height="13" viewBox="0 0 68 13"><g fill="#fff"><rect x="1" y="8" width="11" height="3"/><rect x="19" y="4" width="8" height="7"/><path d="M22,0 h8 v8 h-2 v-6 h-6z"/><rect x="38" y="0" width="11" height="2"/><rect x="38" y="3" width="11" height="8"/></g><path d="M55.5,0.5 L65.5,10.5 M65.5,0.5 L55.5,10.5" stroke="#fff" stroke-width="1.8"/></svg>
<div style="left:364px;top:26px;width:764px;height:3px;background:#f0f0f0"></div>
<div style="left:364px;top:29px;width:764px;height:24px;background:#cbcbcb"></div>
<div style="left:364px;top:53px;width:764px;height:1px;background:#7a7a7a"></div>
<div style="left:364px;top:54px;width:764px;height:27px;background:#e9e9e9"></div>
<div style="left:364px;top:81px;width:764px;height:21px;background:#d0d0d0"></div>
<span class="t" style="left:389px;top:81.0px;height:20px;line-height:20px;font-size:13px;color:#000;font-weight:normal;letter-spacing:0.286px;-webkit-text-stroke:0.25px #000;">WORD_TO_BOOL</span>
<div style="left:416px;top:56px;width:1px;height:23px;background:repeating-linear-gradient(#8e8e8e 0 1px,transparent 1px 3px)"></div>
<div style="left:456px;top:56px;width:1px;height:23px;background:repeating-linear-gradient(#8e8e8e 0 1px,transparent 1px 3px)"></div>
<div style="left:485px;top:56px;width:1px;height:23px;background:repeating-linear-gradient(#8e8e8e 0 1px,transparent 1px 3px)"></div>
<div style="left:597px;top:56px;width:1px;height:23px;background:repeating-linear-gradient(#8e8e8e 0 1px,transparent 1px 3px)"></div>
<div style="left:746px;top:56px;width:1px;height:23px;background:repeating-linear-gradient(#8e8e8e 0 1px,transparent 1px 3px)"></div>
<div style="left:895px;top:56px;width:1px;height:23px;background:repeating-linear-gradient(#8e8e8e 0 1px,transparent 1px 3px)"></div>
<div style="left:972px;top:56px;width:1px;height:23px;background:repeating-linear-gradient(#8e8e8e 0 1px,transparent 1px 3px)"></div>
<div style="left:1049px;top:56px;width:1px;height:23px;background:repeating-linear-gradient(#8e8e8e 0 1px,transparent 1px 3px)"></div>
<svg style="left:371px;top:59px;" width="17" height="18" viewBox="0 0 17 18"><g><rect x="0" y="5" width="8" height="2" fill="#b8b8b8"/><rect x="0" y="8" width="9" height="2" fill="#bcbcbc"/><rect x="2" y="11" width="8" height="2" fill="#8c8c8c"/><rect x="0" y="14.2" width="8" height="2" fill="#bdbdbd"/></g><g stroke="#6e6e6e" stroke-width="1"><path d="M11.5,0.5 L11.5,9.5 M7,5 L16,5 M8.4,1.9 L14.6,8.1 M14.6,1.9 L8.4,8.1"/></g><circle cx="11.5" cy="5" r="1.9" fill="#f2f2f2"/></svg>
<svg style="left:395px;top:59px;" width="17" height="18" viewBox="0 0 17 18"><g><rect x="0" y="5" width="8" height="2" fill="#b8b8b8"/><rect x="0" y="8" width="9" height="2" fill="#bcbcbc"/><rect x="0" y="11" width="8" height="2" fill="#bdbdbd"/><rect x="2" y="14.2" width="8" height="2" fill="#8c8c8c"/></g><g stroke="#6e6e6e" stroke-width="1"><path d="M11.5,0.5 L11.5,9.5 M7,5 L16,5 M8.4,1.9 L14.6,8.1 M14.6,1.9 L8.4,8.1"/></g><circle cx="11.5" cy="5" r="1.9" fill="#f2f2f2"/></svg>
<svg style="left:423px;top:59px;" width="17" height="18" viewBox="0 0 17 18"><rect x="0.5" y="1.5" width="10" height="14" fill="#f2f4ff" stroke="#8a96e8"/><path d="M1,16.5 L11.5,16.5 L11.5,3" fill="none" stroke="#b4bcec"/><path d="M2.5,4.5 L8,4.5 M2.5,7 L4,7 M2.5,10 L8,10 M2.5,12.5 L8,12.5" stroke="#6a74b8" stroke-width="1"/><path d="M4,7 L11,7 L11,3.5 L16.5,8.5 L11,13.5 L11,10 L4,10 Z" fill="#0a0a5a"/></svg>
<svg style="left:443px;top:59px;" width="8" height="18" viewBox="0 0 8 18"><path d="M3,3 L5,3 L5,7 L8,7 L4,11.2 L0,7 L3,7 Z" fill="#000"/><rect x="0" y="12.2" width="8" height="2" fill="#000"/></svg>
<svg style="left:463px;top:59px;" width="17" height="18" viewBox="0 0 17 18"><defs><linearGradient id="gf" x1="0" y1="0" x2="1" y2="1"><stop offset="0" stop-color="#fff3c4"/><stop offset="1" stop-color="#f0b93a"/></linearGradient><linearGradient id="gb" x1="0" y1="0" x2="1" y2="1"><stop offset="0" stop-color="#5a6cf0"/><stop offset="1" stop-color="#1a20b8"/></linearGradient><linearGradient id="gd" x1="0" y1="0" x2="1" y2="0"><stop offset="0" stop-color="#6a7cf8"/><stop offset="1" stop-color="#1a22c0"/></linearGradient><linearGradient id="gg" x1="0" y1="0" x2="1" y2="0"><stop offset="0" stop-color="#b8b8b8"/><stop offset="1" stop-color="#6e6e6e"/></linearGradient></defs><path d="M1,3 L1,10 C1,12.3 8,12.3 8,10 L8,3 Z" fill="url(#gg)"/><ellipse cx="4.5" cy="3" rx="3.5" ry="1.8" fill="#b4b4b4"/><path d="M14,16 C16,13 14,10.5 10.5,11.5" fill="none" stroke="#8a8a8a" stroke-width="1.8"/><path d="M8.5,12 L12,9.5 L12,14 Z" fill="#8a8a8a"/></svg>
<svg style="left:492px;top:59px;" width="18" height="18" viewBox="0 0 18 18"><defs><linearGradient id="gl" x1="0" y1="0" x2="0" y2="1"><stop offset="0" stop-color="#9a9a9a"/><stop offset="1" stop-color="#5e5e5e"/></linearGradient></defs><g fill="url(#gl)"><path d="M1,2 L6.5,2 L8,4 L17,4 L17,6 L1,6Z"/><path d="M1,7.2 L6.5,7.2 L8,9.2 L17,9.2 L17,11.2 L1,11.2Z"/><path d="M1,12.2 L6.5,12.2 L8,14.2 L17,14.2 L17,16.2 L1,16.2Z"/></g></svg>
<div style="left:514px;top:57px;width:22px;height:22px;background:#fff;border:1px solid #3a6fd8;border-radius:2px;box-sizing:border-box"></div>
<svg style="left:517px;top:59px;" width="17" height="18" viewBox="0 0 17 18"><defs><linearGradient id="gt" x1="0" y1="0" x2="1" y2="0"><stop offset="0" stop-color="#a880ec"/><stop offset="0.3" stop-color="#5a1cb8"/><stop offset="1" stop-color="#3c0c90"/></linearGradient></defs><path d="M3.5,4.3 L7,1 L15.6,1 L15.6,7.6 L7,7.6 Z" fill="url(#gt)"/><path d="M3.5,12.5 L7,9.2 L15.6,9.2 L15.6,16 L7,16 Z" fill="url(#gt)"/><path d="M0,4.3 L4.5,4.3 M0,12.5 L4.5,12.5" stroke="#12126a" stroke-width="1.2"/><path d="M3,2.8 L5.4,4.3 L3,5.8Z M3,11 L5.4,12.5 L3,14Z" fill="#12126a"/><rect x="8.8" y="2.6" width="2.2" height="3.4" fill="none" stroke="#fff" stroke-width="1.1"/><path d="M13.4,2 L13.4,6.6" stroke="#fff" stroke-width="1.4"/><path d="M8.4,11.4 L14,11.4 M8.4,13.7 L14,13.7" stroke="#fff" stroke-width="1.3"/></svg>
<svg style="left:540px;top:59px;" width="17" height="18" viewBox="0 0 17 18"><path transform="translate(0.4,0.9)" d="M5.2,1 L13.4,1 C15.4,1 16,2.4 16,4 C16,5.6 15.4,7 13.6,7 L12.6,10 L10.2,7 L5.2,7 C3.4,7 2.8,5.6 2.8,4 C2.8,2.4 3.4,1 5.2,1Z" fill="#fbfbfb" stroke="#8e8e8e" stroke-width="1.2"/><rect x="5.4" y="4.1" width="2.2" height="2" fill="#000"/><rect x="8.7" y="4.1" width="2.2" height="2" fill="#000"/><rect x="12" y="4.1" width="2.2" height="2" fill="#000"/><path d="M0,12.8 L5,12.8" stroke="#000" stroke-width="1.2"/><path d="M3.2,11.4 L5.8,12.8 L3.2,14.2Z" fill="#000"/><path d="M4.6,12.8 L8,9.6 L15.6,9.6 L15.6,16.2 L8,16.2 Z" fill="#383838"/><path d="M8.6,10.6 L14.8,10.6 L14.8,12.6 L8.6,12.6Z" fill="#6e6e6e"/></svg>
<svg style="left:560px;top:59px;" width="8" height="18" viewBox="0 0 8 18"><path d="M3,3 L5,3 L5,7 L8,7 L4,11.2 L0,7 L3,7 Z" fill="#000"/><rect x="0" y="12.2" width="8" height="2" fill="#000"/></svg>
<div style="left:573px;top:57px;width:22px;height:22px;background:#fff;border:1px solid #3a6fd8;border-radius:2px;box-sizing:border-box"></div>
<svg style="left:575px;top:59px;" width="18" height="18" viewBox="0 0 18 18"><g fill="none" stroke="#4a5ae0" stroke-width="1.1"><rect x="1.6" y="2.6" width="3" height="3"/><rect x="1.6" y="7.6" width="3" height="3"/><rect x="1.6" y="12.6" width="3" height="3"/></g><defs><linearGradient id="gs" x1="0" y1="0" x2="0.6" y2="1"><stop offset="0" stop-color="#fff8b0"/><stop offset="0.5" stop-color="#f6d030"/><stop offset="1" stop-color="#c89010"/></linearGradient></defs><path d="M11.4,1 L13,4.8 L17,5.1 L13.9,7.8 L14.9,11.8 L11.4,9.6 L7.9,11.8 L8.9,7.8 L5.8,5.1 L9.8,4.8 Z" fill="url(#gs)" stroke="#a87808" stroke-width="0.7"/><path d="M13.2,11.4 C13.2,14 11,14.4 8.4,14.4" fill="none" stroke="#0c0c6a" stroke-width="1.4"/><path d="M9.4,12.2 L6.6,14.4 L9.4,16.6Z" fill="#0c0c6a"/></svg>
<svg style="left:604px;top:59px;" width="17" height="18" viewBox="0 0 17 18"><path d="M5,16 C1,12 1,7 5,4" fill="none" stroke="#0a0a5a" stroke-width="2.6"/><path d="M2.5,1.5 L9,4.5 L3.5,8.5Z" fill="#0a0a5a"/><circle cx="12.5" cy="5" r="3.6" fill="#e01a2a" stroke="#a00a1a" stroke-width="0.6"/><path d="M10.7,3.2 L14.3,6.8 M14.3,3.2 L10.7,6.8" stroke="#fff" stroke-width="1.5"/></svg>
<svg style="left:628px;top:59px;" width="17" height="18" viewBox="0 0 17 18"><path d="M5,2 C1,6 1,11 5,14" fill="none" stroke="#0a0a5a" stroke-width="2.6"/><path d="M2.5,16.5 L9,13.5 L3.5,9.5Z" fill="#0a0a5a"/><circle cx="12.5" cy="13" r="3.6" fill="#e01a2a" stroke="#a00a1a" stroke-width="0.6"/><path d="M10.7,11.2 L14.3,14.8 M14.3,11.2 L10.7,14.8" stroke="#fff" stroke-width="1.5"/></svg>
<svg style="left:653px;top:59px;" width="17" height="18" viewBox="0 0 17 18"><path d="M5,16 C1,13 1,9 5,6" fill="none" stroke="#5a5a5a" stroke-width="2.2"/><path d="M2.5,3.5 L8.5,6.5 L3.5,10Z" fill="#5a5a5a"/><rect x="7.5" y="1.5" width="8" height="12" fill="#b4b4b4" stroke="#9a9a9a"/><rect x="8" y="2" width="3" height="5" fill="#dcdcdc"/><rect x="8.5" y="8.5" width="6" height="4" fill="#3a3a3a"/><rect x="9.8" y="9.5" width="1.4" height="2" fill="#fff"/><rect x="12.4" y="9.5" width="1" height="2" fill="#fff"/></svg>
<svg style="left:677px;top:59px;" width="17" height="18" viewBox="0 0 17 18"><path d="M5,2 C1,5 1,9 5,12" fill="none" stroke="#5a5a5a" stroke-width="2.2"/><path d="M2.5,14.5 L8.5,11.5 L3.5,8Z" fill="#5a5a5a"/><rect x="7.5" y="3.5" width="8" height="12" fill="#b4b4b4" stroke="#9a9a9a"/><rect x="8" y="4" width="3" height="5" fill="#dcdcdc"/><rect x="8.5" y="10.5" width="6" height="4" fill="#3a3a3a"/><rect x="9.8" y="11.5" width="1.4" height="2" fill="#fff"/><rect x="12.4" y="11.5" width="1" height="2" fill="#fff"/></svg>
<svg style="left:701px;top:59px;" width="17" height="18" viewBox="0 0 17 18"><g fill="#a4a4a4"><rect x="0" y="3" width="4" height="1.6" fill="#8a8a8a"/><rect x="5" y="3" width="6" height="1.6" fill="#c4c4c4"/><rect x="5" y="6" width="9" height="1.6"/><rect x="6" y="9" width="10" height="1.6"/><rect x="6" y="12" width="6" height="1.6" fill="#c4c4c4"/><rect x="13" y="12" width="3" height="1.6" fill="#8a8a8a"/><rect x="6" y="15" width="9" height="1.6" fill="#c4c4c4"/></g></svg>
<svg style="left:724px;top:59px;" width="17" height="18" viewBox="0 0 17 18"><rect x="3.5" y="1.5" width="9" height="8" fill="#3a4a5a" stroke="#2a3240"/><path d="M0.5,3.5 L3.5,3.5 M0.5,7.5 L3.5,7.5 M12.5,5.5 L16,5.5" stroke="#2a3240" stroke-width="1.4"/><path d="M6.5,3 L10.5,5.5 L6.5,8Z" fill="#e8eef4"/><path d="M5,11.5 L8,15 L15,8" fill="none" stroke="#1a9a1a" stroke-width="2.6"/></svg>
<svg style="left:754px;top:59px;" width="17" height="18" viewBox="0 0 17 18"><path d="M5,2 C1,6 1,11 5,14" fill="none" stroke="#0a0a5a" stroke-width="2.4"/><path d="M2.5,16.5 L9,13.5 L3.5,9.5Z" fill="#0a0a5a"/><g fill="#a8acb4"><rect x="8" y="4" width="8" height="2"/><rect x="8" y="7.5" width="8" height="2"/></g><rect x="8" y="11" width="8" height="2" fill="#2a5ae8"/></svg>
<svg style="left:778px;top:59px;" width="17" height="18" viewBox="0 0 17 18"><g fill="#b0b4bc"><rect x="0" y="2" width="16" height="2"/><rect x="0" y="15" width="16" height="2"/></g><g fill="#2a5ae8"><rect x="8" y="5.5" width="8" height="2"/><rect x="8" y="8.7" width="8" height="2"/><rect x="8" y="12" width="8" height="2"/></g><path d="M0,9.7 L5,9.7" stroke="#0a0a5a" stroke-width="2"/><path d="M4,6.5 L8,9.7 L4,13Z" fill="#0a0a5a"/></svg>
<svg style="left:802px;top:59px;" width="17" height="18" viewBox="0 0 17 18"><g fill="#b0b4bc"><rect x="0" y="2" width="16" height="2"/><rect x="0" y="15" width="16" height="2"/></g><g fill="#2a5ae8"><rect x="8" y="5.5" width="8" height="2"/><rect x="8" y="8.7" width="8" height="2"/><rect x="8" y="12" width="8" height="2"/></g><path d="M3,9.7 L8,9.7" stroke="#0a0a5a" stroke-width="2"/><path d="M4,6.5 L0,9.7 L4,13Z" fill="#0a0a5a"/></svg>
<svg style="left:826px;top:59px;" width="17" height="18" viewBox="0 0 17 18"><g fill="#4a6ae8" opacity="0.75"><rect x="9" y="1" width="7" height="1.6"/><rect x="9" y="4" width="7" height="1.6"/><rect x="9" y="7" width="7" height="1.6"/><rect x="9" y="10" width="7" height="1.6"/><rect x="9" y="13" width="7" height="1.6"/><rect x="9" y="16" width="7" height="1.6"/></g><g stroke="#0a0a5a" stroke-width="1.5"><path d="M0,3 L9,3 M0,8.5 L11,8.5 M0,14 L9,14 M10.5,0 L10.5,18"/></g><g fill="#0a0a5a"><path d="M5,0.5 L8.5,3 L5,5.5Z"/><path d="M5,6 L8.5,8.5 L5,11Z"/><path d="M5,11.5 L8.5,14 L5,16.5Z"/></g></svg>
<svg style="left:850px;top:59px;" width="17" height="18" viewBox="0 0 17 18"><rect x="1.5" y="0.5" width="2" height="9" fill="#0a0a5a"/><g fill="#2a5ae8"><rect x="7" y="7.5" width="8" height="2"/><rect x="7" y="10.8" width="8" height="2"/><rect x="7" y="14.1" width="8" height="2"/></g></svg>
<svg style="left:873px;top:59px;" width="17" height="18" viewBox="0 0 17 18"><rect x="3.5" y="3" width="2" height="6" fill="#0a0a5a"/><g fill="#2a5ae8"><rect x="8" y="8" width="8" height="2"/><rect x="8" y="11.3" width="8" height="2"/><rect x="8" y="14.6" width="8" height="2"/></g><path d="M0,0 L8,8" stroke="#e01a2a" stroke-width="1.8"/></svg>
<svg style="left:903px;top:59px;" width="17" height="18" viewBox="0 0 17 18"><defs><linearGradient id="gbm" x1="0" y1="0" x2="1" y2="0"><stop offset="0" stop-color="#5a7af8"/><stop offset="1" stop-color="#0a1ab8"/></linearGradient></defs><path d="M0.5,0.5 L6.0,0.5 L6.0,15.5 L3.25,12.5 L0.5,15.5 Z" fill="url(#gbm)"/><g stroke="#e8e01a" stroke-width="1.4"><path d="M11.5,0 L11.5,9 M7,4.5 L16,4.5 M8.3,1.3 L14.7,7.7 M14.7,1.3 L8.3,7.7"/></g></svg>
<svg style="left:927px;top:59px;" width="17" height="18" viewBox="0 0 17 18"><defs><linearGradient id="gbm" x1="0" y1="0" x2="1" y2="0"><stop offset="0" stop-color="#5a7af8"/><stop offset="1" stop-color="#0a1ab8"/></linearGradient></defs><path d="M7.5,3.5 L13.0,3.5 L13.0,15.5 L10.25,12.5 L7.5,15.5 Z" fill="url(#gbm)"/><path d="M6,1.5 C1,3 0.5,9 4.5,11.5" fill="none" stroke="#0a0a5a" stroke-width="2.4"/><path d="M2,14 L8,12 L4,7.5Z" fill="#0a0a5a"/></svg>
<svg style="left:951px;top:59px;" width="17" height="18" viewBox="0 0 17 18"><defs><linearGradient id="gbm" x1="0" y1="0" x2="1" y2="0"><stop offset="0" stop-color="#5a7af8"/><stop offset="1" stop-color="#0a1ab8"/></linearGradient></defs><path d="M9,0.5 L14.5,0.5 L14.5,12.5 L11.75,9.5 L9,12.5 Z" fill="url(#gbm)"/><path d="M6,15 C1,13 0.5,8 4.5,5" fill="none" stroke="#0a0a5a" stroke-width="2.4"/><path d="M2,2.5 L8.5,4.5 L4,9Z" fill="#0a0a5a"/></svg>
<svg style="left:979px;top:59px;" width="17" height="18" viewBox="0 0 17 18"><circle cx="9.5" cy="4.5" r="3.5" fill="#f4f4f4" stroke="#8a8a8a" stroke-width="1.3"/><path d="M12,7.5 L16,12" stroke="#8a8a8a" stroke-width="2"/><circle cx="5" cy="12" r="4.5" fill="#b4b4b4"/><path d="M5,7.5 A4.5,4.5 0 0 0 5,16.5Z" fill="#8a8a8a"/></svg>
<svg style="left:1004px;top:59px;" width="17" height="18" viewBox="0 0 17 18"><g fill="none" stroke="#1a2a8a" stroke-width="1.3"><rect x="1" y="1.5" width="5" height="4" rx="1"/><rect x="8.5" y="1.5" width="5" height="4" rx="1"/><path d="M6,3.5 L8.5,3.5 M13.5,2.5 C15.5,2 16.5,3.5 16,5"/></g><path d="M8,9 L15,12.5 L8,16Z" fill="#2ae82a" stroke="#8ab88a" stroke-width="0.6"/></svg>
<svg style="left:1028px;top:59px;" width="17" height="18" viewBox="0 0 17 18"><g fill="none" stroke="#7a7a7a" stroke-width="1.3"><rect x="1" y="1.5" width="5" height="4" rx="1"/><rect x="8.5" y="1.5" width="5" height="4" rx="1"/><path d="M6,3.5 L8.5,3.5 M13.5,2.5 C15.5,2 16.5,3.5 16,5"/></g><path d="M0,12.5 L7,12.5 M6.5,9.5 L6.5,15.5" stroke="#8a8a8a" stroke-width="1"/><path d="M8.5,9.5 L15,12.5 L8.5,15.5Z" fill="#e0e0e0" stroke="#a8a8a8" stroke-width="0.8"/></svg>
<svg style="left:1056px;top:59px;" width="17" height="18" viewBox="0 0 17 18"><defs><linearGradient id="gf" x1="0" y1="0" x2="1" y2="1"><stop offset="0" stop-color="#fff3c4"/><stop offset="1" stop-color="#f0b93a"/></linearGradient><linearGradient id="gb" x1="0" y1="0" x2="1" y2="1"><stop offset="0" stop-color="#5a6cf0"/><stop offset="1" stop-color="#1a20b8"/></linearGradient><linearGradient id="gd" x1="0" y1="0" x2="1" y2="0"><stop offset="0" stop-color="#6a7cf8"/><stop offset="1" stop-color="#1a22c0"/></linearGradient><linearGradient id="gg" x1="0" y1="0" x2="1" y2="0"><stop offset="0" stop-color="#b8b8b8"/><stop offset="1" stop-color="#6e6e6e"/></linearGradient></defs><path d="M0.5,3 L0.5,13 C0.5,16 9.5,16 9.5,13 L9.5,3 Z" fill="#c4c4c4" stroke="#a4a4a4" stroke-width="0.6"/><ellipse cx="5" cy="3" rx="4.5" ry="2.2" fill="#e0e0e0" stroke="#a4a4a4" stroke-width="0.6"/><rect x="10.5" y="11.5" width="5" height="5" fill="#f4f4f4" stroke="#7a7a7a" stroke-width="1.2"/><path d="M11.5,11.5 L11.5,9.8 C11.5,8 14.5,8 14.5,9.8 L14.5,11.5" fill="none" stroke="#7a7a7a" stroke-width="1.1"/></svg>
<svg style="left:1097px;top:59px;" width="17" height="18" viewBox="0 0 17 18"><g transform="translate(0,1.5) scale(0.92)"><rect x="0.5" y="0.5" width="13" height="13" fill="#f8f9ff" stroke="#8a94e0"/><rect x="0.5" y="0.5" width="13" height="2.5" fill="#2a3ab8"/><path d="M1,6.5 L13,6.5" stroke="#b4bcec" stroke-width="1"/><circle cx="12.5" cy="8.5" r="2.3" fill="#f0b070" stroke="#8a5a2a" stroke-width="0.5"/><path d="M8.5,15.5 C8.5,10.5 16.5,10.5 16.5,15.5Z" fill="#1a6ad8" stroke="#0a3a8a" stroke-width="0.5"/></g></svg>
<div style="left:364px;top:102px;width:764px;height:1px;background:#a8a8a8"></div>
<div style="left:364px;top:103px;width:764px;height:17px;background:linear-gradient(#ececec,#dadada 55%,#e6e6e6)"></div>
<div style="left:409px;top:103px;width:169px;height:17px;background:linear-gradient(#eef2f8,#d9e0ea 55%,#e6ebf2)"></div>
<div style="left:364px;top:120px;width:764px;height:1px;background:#b4b4b4"></div>
<div style="left:364px;top:121px;width:764px;height:232px;background:#fbfbfb"></div>
<div style="left:389px;top:103px;width:1px;height:17px;background:#b4b4b4"></div>
<div style="left:390px;top:103px;width:1px;height:17px;background:#f2f2f2"></div>
<div style="left:408px;top:103px;width:1px;height:17px;background:#b4b4b4"></div>
<div style="left:409px;top:103px;width:1px;height:17px;background:#f2f2f2"></div>
<div style="left:578px;top:103px;width:1px;height:17px;background:#b4b4b4"></div>
<div style="left:579px;top:103px;width:1px;height:17px;background:#f2f2f2"></div>
<div style="left:698px;top:103px;width:1px;height:17px;background:#b4b4b4"></div>
<div style="left:699px;top:103px;width:1px;height:17px;background:#f2f2f2"></div>
<div style="left:758px;top:103px;width:1px;height:17px;background:#b4b4b4"></div>
<div style="left:759px;top:103px;width:1px;height:17px;background:#f2f2f2"></div>
<div style="left:858px;top:103px;width:1px;height:17px;background:#b4b4b4"></div>
<div style="left:859px;top:103px;width:1px;height:17px;background:#f2f2f2"></div>
<div style="left:938px;top:103px;width:1px;height:17px;background:#b4b4b4"></div>
<div style="left:939px;top:103px;width:1px;height:17px;background:#f2f2f2"></div>
<div style="left:988px;top:103px;width:1px;height:17px;background:#b4b4b4"></div>
<div style="left:989px;top:103px;width:1px;height:17px;background:#f2f2f2"></div>
<div style="left:1058px;top:103px;width:1px;height:17px;background:#b4b4b4"></div>
<div style="left:1059px;top:103px;width:1px;height:17px;background:#f2f2f2"></div>
<div style="left:1110px;top:103px;width:1px;height:17px;background:#b4b4b4"></div>
<div style="left:1111px;top:103px;width:1px;height:17px;background:#f2f2f2"></div>
<span class="t" style="left:413px;top:101.3px;height:20px;line-height:20px;font-size:12.5px;color:#000;font-weight:normal;letter-spacing:0.000px;-webkit-text-stroke:0.2px #000;">名称</span>
<span class="t" style="left:583px;top:101.3px;height:20px;line-height:20px;font-size:12.5px;color:#000;font-weight:normal;letter-spacing:0.375px;-webkit-text-stroke:0.2px #000;">数据类型</span>
<span class="t" style="left:703px;top:101.3px;height:20px;line-height:20px;font-size:12.5px;color:#000;font-weight:normal;letter-spacing:0.333px;-webkit-text-stroke:0.2px #000;">偏移量</span>
<span class="t" style="left:763px;top:101.3px;height:20px;line-height:20px;font-size:12.5px;color:#000;font-weight:normal;letter-spacing:0.333px;-webkit-text-stroke:0.2px #000;">默认值</span>
<span class="t" style="left:863px;top:101.3px;height:20px;line-height:20px;font-size:12.5px;color:#000;font-weight:normal;letter-spacing:0.000px;-webkit-text-stroke:0.2px #000;">可从</span>
<span class="t" style="left:892.5px;top:102.0px;height:20px;line-height:20px;font-size:11.5px;color:#1c0c34;font-weight:normal;transform:scaleX(0.9742);transform-origin:0 50%;">HMI/...</span>
<span class="t" style="left:943px;top:101.3px;height:20px;line-height:20px;font-size:12.5px;color:#000;font-weight:normal;letter-spacing:0.000px;-webkit-text-stroke:0.2px #000;">从</span>
<span class="t" style="left:959.3px;top:102.0px;height:20px;line-height:20px;font-size:11.5px;color:#1c0c34;font-weight:normal;transform:scaleX(0.9223);transform-origin:0 50%;">H...</span>
<span class="t" style="left:993px;top:101.3px;height:20px;line-height:20px;font-size:12.5px;color:#000;font-weight:normal;letter-spacing:0.000px;-webkit-text-stroke:0.2px #000;">在</span>
<span class="t" style="left:1009.5px;top:102.0px;height:20px;line-height:20px;font-size:11.5px;color:#1c0c34;font-weight:normal;transform:scaleX(0.9187);transform-origin:0 50%;word-spacing:1.5px;">HMI ...</span>
<span class="t" style="left:1063px;top:101.3px;height:20px;line-height:20px;font-size:12.5px;color:#000;font-weight:normal;letter-spacing:0.333px;-webkit-text-stroke:0.2px #000;">设定值</span>
<div style="left:364px;top:122px;width:25px;height:18px;background:#c8c8c8"></div>
<div style="left:389px;top:122px;width:1px;height:18px;background:#b6b6b6"></div>
<div style="left:390px;top:122px;width:18px;height:18px;background:#e3e3e3"></div>
<div style="left:409px;top:122px;width:169px;height:18px;background:#e3e3e3"></div>
<div style="left:579px;top:122px;width:119px;height:18px;background:#e3e3e3"></div>
<div style="left:699px;top:122px;width:59px;height:18px;background:#e3e3e3"></div>
<div style="left:759px;top:122px;width:99px;height:18px;background:#e3e3e3"></div>
<div style="left:859px;top:122px;width:79px;height:18px;background:#e3e3e3"></div>
<div style="left:939px;top:122px;width:49px;height:18px;background:#e3e3e3"></div>
<div style="left:989px;top:122px;width:69px;height:18px;background:#e3e3e3"></div>
<div style="left:1059px;top:122px;width:69px;height:18px;background:#e3e3e3"></div>
<span class="t" style="left:368.3px;top:121.0px;height:20px;line-height:20px;font-size:12px;color:#727272;font-weight:normal;">1</span>
<svg style="left:390.7px;top:127px;" width="16" height="10" viewBox="0 0 16 10"><path d="M2.2,4.7 L6.6,0.2 L15.2,0.2 L15.2,9.4 L6.6,9.4 Z" fill="#0c58a8"/><path d="M2.6,4.5 L6.8,0.3 L14.6,0.3 L14.6,8.6 L6.8,8.6 Z" fill="#1f97ea"/><path d="M3.4,4.2 L7,0.8 L14.2,0.8" fill="none" stroke="#74c8fa" stroke-width="0.9"/><path d="M0,4.6 L5.6,4.6" stroke="#0a2468" stroke-width="1.2"/><rect x="8.2" y="2.2" width="2.5" height="4.6" fill="none" stroke="#fff" stroke-width="1.25"/><path d="M12.9,1.6 L12.9,7.4" stroke="#fff" stroke-width="1.6"/></svg>
<svg style="left:414px;top:128px;" width="9" height="5" viewBox="0 0 9 5"><path d="M0,0 L8.6,0 L4.3,4.4 Z" fill="#000"/></svg>
<span class="t" style="left:432px;top:121.0px;height:20px;line-height:20px;font-size:12px;color:#000;font-weight:normal;letter-spacing:0.259px;-webkit-text-stroke:0.15px #000;">Input</span>
<div style="left:891.0px;top:123px;width:15px;height:15px;border:1px solid #bcbcbc;border-radius:3px;background:linear-gradient(#fdfdfd 0%,#f2f2f2 48%,#e8e8e8 52%,#f4f4f4 100%);box-sizing:border-box"></div>
<div style="left:956.0px;top:123px;width:15px;height:15px;border:1px solid #bcbcbc;border-radius:3px;background:linear-gradient(#fdfdfd 0%,#f2f2f2 48%,#e8e8e8 52%,#f4f4f4 100%);box-sizing:border-box"></div>
<div style="left:1016.0px;top:123px;width:15px;height:15px;border:1px solid #bcbcbc;border-radius:3px;background:linear-gradient(#fdfdfd 0%,#f2f2f2 48%,#e8e8e8 52%,#f4f4f4 100%);box-sizing:border-box"></div>
<div style="left:1086.0px;top:123px;width:15px;height:15px;border:1px solid #bcbcbc;border-radius:3px;background:linear-gradient(#fdfdfd 0%,#f2f2f2 48%,#e8e8e8 52%,#f4f4f4 100%);box-sizing:border-box"></div>
<div style="left:364px;top:141px;width:25px;height:18px;background:#b9c5d2"></div>
<div style="left:389px;top:141px;width:1px;height:18px;background:#aab4c0"></div>
<div style="left:390px;top:141px;width:18px;height:18px;background:#e3e3e3"></div>
<div style="left:409px;top:141px;width:169px;height:18px;background:#f0f0f0"></div>
<div style="left:409px;top:141px;width:18px;height:18px;background:#eaeaea"></div>
<div style="left:579px;top:141px;width:119px;height:18px;background:#f0f0f0"></div>
<div style="left:699px;top:141px;width:59px;height:18px;background:#e3e3e3"></div>
<div style="left:759px;top:141px;width:99px;height:18px;background:#f0f0f0"></div>
<div style="left:859px;top:141px;width:79px;height:18px;background:#f0f0f0"></div>
<div style="left:939px;top:141px;width:49px;height:18px;background:#f0f0f0"></div>
<div style="left:989px;top:141px;width:69px;height:18px;background:#f0f0f0"></div>
<div style="left:1059px;top:141px;width:69px;height:18px;background:#e3e3e3"></div>
<div style="left:427px;top:141px;width:151px;height:18px;background:#fff"></div>
<div style="left:408px;top:140px;width:171px;height:20px;border:1px solid #b4c4d8;box-sizing:border-box"></div>
<div style="left:576px;top:157px;width:4px;height:4px;background:#c4cedc"></div>
<span class="t" style="left:368.3px;top:140.0px;height:20px;line-height:20px;font-size:12px;color:#727272;font-weight:normal;">2</span>
<svg style="left:390.7px;top:146px;" width="16" height="10" viewBox="0 0 16 10"><path d="M2.2,4.7 L6.6,0.2 L15.2,0.2 L15.2,9.4 L6.6,9.4 Z" fill="#0c58a8"/><path d="M2.6,4.5 L6.8,0.3 L14.6,0.3 L14.6,8.6 L6.8,8.6 Z" fill="#1f97ea"/><path d="M3.4,4.2 L7,0.8 L14.2,0.8" fill="none" stroke="#74c8fa" stroke-width="0.9"/><path d="M0,4.6 L5.6,4.6" stroke="#0a2468" stroke-width="1.2"/><rect x="8.2" y="2.2" width="2.5" height="4.6" fill="none" stroke="#fff" stroke-width="1.25"/><path d="M12.9,1.6 L12.9,7.4" stroke="#fff" stroke-width="1.6"/></svg>
<div style="left:414px;top:147px;width:5px;height:5px;background:linear-gradient(135deg,#4a66e0,#1a2fb8)"></div>
<span class="t" style="left:450px;top:140.0px;height:20px;line-height:20px;font-size:12px;color:#000;font-weight:normal;transform:scaleX(0.9138);transform-origin:0 50%;-webkit-text-stroke:0.15px #000;">Word</span>
<span class="t" style="left:583px;top:140.0px;height:20px;line-height:20px;font-size:12px;color:#000;font-weight:normal;transform:scaleX(0.9138);transform-origin:0 50%;-webkit-text-stroke:0.15px #000;">Word</span>
<span class="t" style="left:703px;top:140.0px;height:20px;line-height:20px;font-size:12px;color:#000;font-weight:normal;transform:scaleX(0.9588);transform-origin:0 50%;-webkit-text-stroke:0.15px #000;">0.0</span>
<span class="t" style="left:764px;top:140.0px;height:20px;line-height:20px;font-size:12px;color:#7a7a7a;font-weight:normal;letter-spacing:0.324px;">16#0</span>
<div style="left:891.0px;top:142px;width:15px;height:15px;border:1px solid #4a4e58;border-radius:3px;background:linear-gradient(#e6eefc 0%,#c4d8f6 30%,#6cb0e6 55%,#36c4ea 80%,#78eef8 100%);box-sizing:border-box;box-shadow:inset 0 0 0 1px #2c5cb4"></div>
<svg style="left:891.0px;top:142px;" width="15" height="15" viewBox="0 0 15 15"><path d="M3.2,6.3 L6.3,9.2 L11.9,3 L11.9,6.2 L6.3,12 L3.2,9.2 Z" fill="#0b3790"/></svg>
<div style="left:956.0px;top:142px;width:15px;height:15px;border:1px solid #4a4e58;border-radius:3px;background:linear-gradient(#e6eefc 0%,#c4d8f6 30%,#6cb0e6 55%,#36c4ea 80%,#78eef8 100%);box-sizing:border-box;box-shadow:inset 0 0 0 1px #2c5cb4"></div>
<svg style="left:956.0px;top:142px;" width="15" height="15" viewBox="0 0 15 15"><path d="M3.2,6.3 L6.3,9.2 L11.9,3 L11.9,6.2 L6.3,12 L3.2,9.2 Z" fill="#0b3790"/></svg>
<div style="left:1016.0px;top:142px;width:15px;height:15px;border:1px solid #4a4e58;border-radius:3px;background:linear-gradient(#e6eefc 0%,#c4d8f6 30%,#6cb0e6 55%,#36c4ea 80%,#78eef8 100%);box-sizing:border-box;box-shadow:inset 0 0 0 1px #2c5cb4"></div>
<svg style="left:1016.0px;top:142px;" width="15" height="15" viewBox="0 0 15 15"><path d="M3.2,6.3 L6.3,9.2 L11.9,3 L11.9,6.2 L6.3,12 L3.2,9.2 Z" fill="#0b3790"/></svg>
<div style="left:1086.0px;top:142px;width:15px;height:15px;border:1px solid #bcbcbc;border-radius:3px;background:linear-gradient(#fdfdfd 0%,#f2f2f2 48%,#e8e8e8 52%,#f4f4f4 100%);box-sizing:border-box"></div>
<div style="left:364px;top:160px;width:25px;height:18px;background:#c8c8c8"></div>
<div style="left:389px;top:160px;width:1px;height:18px;background:#b6b6b6"></div>
<div style="left:390px;top:160px;width:18px;height:18px;background:#f0f0f0"></div>
<div style="left:409px;top:160px;width:169px;height:18px;background:#f0f0f0"></div>
<div style="left:409px;top:160px;width:18px;height:18px;background:#eaeaea"></div>
<div style="left:579px;top:160px;width:119px;height:18px;background:#f0f0f0"></div>
<div style="left:699px;top:160px;width:59px;height:18px;background:#e3e3e3"></div>
<div style="left:759px;top:160px;width:99px;height:18px;background:#e3e3e3"></div>
<div style="left:859px;top:160px;width:79px;height:18px;background:#e3e3e3"></div>
<div style="left:939px;top:160px;width:49px;height:18px;background:#e3e3e3"></div>
<div style="left:989px;top:160px;width:69px;height:18px;background:#e3e3e3"></div>
<div style="left:1059px;top:160px;width:69px;height:18px;background:#e3e3e3"></div>
<span class="t" style="left:368.3px;top:159.0px;height:20px;line-height:20px;font-size:12px;color:#727272;font-weight:normal;">3</span>
<div style="left:414px;top:166px;width:5px;height:5px;background:linear-gradient(135deg,#4a66e0,#1a2fb8)"></div>
<span class="t" style="left:450px;top:159.5px;height:20px;line-height:20px;font-size:12px;color:#7a7a7a;font-weight:normal;transform:scaleX(0.9470);transform-origin:0 50%;-webkit-text-stroke:0.2px #7a7a7a;">&lt;新增&gt;</span>
<div style="left:891.0px;top:161px;width:15px;height:15px;border:1px solid #bcbcbc;border-radius:3px;background:linear-gradient(#fdfdfd 0%,#f2f2f2 48%,#e8e8e8 52%,#f4f4f4 100%);box-sizing:border-box"></div>
<div style="left:956.0px;top:161px;width:15px;height:15px;border:1px solid #bcbcbc;border-radius:3px;background:linear-gradient(#fdfdfd 0%,#f2f2f2 48%,#e8e8e8 52%,#f4f4f4 100%);box-sizing:border-box"></div>
<div style="left:1016.0px;top:161px;width:15px;height:15px;border:1px solid #bcbcbc;border-radius:3px;background:linear-gradient(#fdfdfd 0%,#f2f2f2 48%,#e8e8e8 52%,#f4f4f4 100%);box-sizing:border-box"></div>
<div style="left:1086.0px;top:161px;width:15px;height:15px;border:1px solid #bcbcbc;border-radius:3px;background:linear-gradient(#fdfdfd 0%,#f2f2f2 48%,#e8e8e8 52%,#f4f4f4 100%);box-sizing:border-box"></div>
<div style="left:364px;top:179px;width:25px;height:18px;background:#c8c8c8"></div>
<div style="left:389px;top:179px;width:1px;height:18px;background:#b6b6b6"></div>
<div style="left:390px;top:179px;width:18px;height:18px;background:#e3e3e3"></div>
<div style="left:409px;top:179px;width:169px;height:18px;background:#e3e3e3"></div>
<div style="left:579px;top:179px;width:119px;height:18px;background:#e3e3e3"></div>
<div style="left:699px;top:179px;width:59px;height:18px;background:#e3e3e3"></div>
<div style="left:759px;top:179px;width:99px;height:18px;background:#e3e3e3"></div>
<div style="left:859px;top:179px;width:79px;height:18px;background:#e3e3e3"></div>
<div style="left:939px;top:179px;width:49px;height:18px;background:#e3e3e3"></div>
<div style="left:989px;top:179px;width:69px;height:18px;background:#e3e3e3"></div>
<div style="left:1059px;top:179px;width:69px;height:18px;background:#e3e3e3"></div>
<span class="t" style="left:368.3px;top:178.0px;height:20px;line-height:20px;font-size:12px;color:#727272;font-weight:normal;">4</span>
<svg style="left:390.7px;top:184px;" width="16" height="10" viewBox="0 0 16 10"><path d="M2.2,4.7 L6.6,0.2 L15.2,0.2 L15.2,9.4 L6.6,9.4 Z" fill="#0c58a8"/><path d="M2.6,4.5 L6.8,0.3 L14.6,0.3 L14.6,8.6 L6.8,8.6 Z" fill="#1f97ea"/><path d="M3.4,4.2 L7,0.8 L14.2,0.8" fill="none" stroke="#74c8fa" stroke-width="0.9"/><path d="M0,4.6 L5.6,4.6" stroke="#0a2468" stroke-width="1.2"/><rect x="8.2" y="2.2" width="2.5" height="4.6" fill="none" stroke="#fff" stroke-width="1.25"/><path d="M12.9,1.6 L12.9,7.4" stroke="#fff" stroke-width="1.6"/></svg>
<svg style="left:414px;top:185px;" width="9" height="5" viewBox="0 0 9 5"><path d="M0,0 L8.6,0 L4.3,4.4 Z" fill="#000"/></svg>
<span class="t" style="left:432px;top:178.0px;height:20px;line-height:20px;font-size:12px;color:#000;font-weight:normal;letter-spacing:0.328px;-webkit-text-stroke:0.15px #000;">Output</span>
<div style="left:891.0px;top:180px;width:15px;height:15px;border:1px solid #bcbcbc;border-radius:3px;background:linear-gradient(#fdfdfd 0%,#f2f2f2 48%,#e8e8e8 52%,#f4f4f4 100%);box-sizing:border-box"></div>
<div style="left:956.0px;top:180px;width:15px;height:15px;border:1px solid #bcbcbc;border-radius:3px;background:linear-gradient(#fdfdfd 0%,#f2f2f2 48%,#e8e8e8 52%,#f4f4f4 100%);box-sizing:border-box"></div>
<div style="left:1016.0px;top:180px;width:15px;height:15px;border:1px solid #bcbcbc;border-radius:3px;background:linear-gradient(#fdfdfd 0%,#f2f2f2 48%,#e8e8e8 52%,#f4f4f4 100%);box-sizing:border-box"></div>
<div style="left:1086.0px;top:180px;width:15px;height:15px;border:1px solid #bcbcbc;border-radius:3px;background:linear-gradient(#fdfdfd 0%,#f2f2f2 48%,#e8e8e8 52%,#f4f4f4 100%);box-sizing:border-box"></div>
<div style="left:364px;top:198px;width:25px;height:18px;background:#c8c8c8"></div>
<div style="left:389px;top:198px;width:1px;height:18px;background:#b6b6b6"></div>
<div style="left:390px;top:198px;width:18px;height:18px;background:#e3e3e3"></div>
<div style="left:409px;top:198px;width:169px;height:18px;background:#f0f0f0"></div>
<div style="left:409px;top:198px;width:18px;height:18px;background:#eaeaea"></div>
<div style="left:579px;top:198px;width:119px;height:18px;background:#f0f0f0"></div>
<div style="left:699px;top:198px;width:59px;height:18px;background:#e3e3e3"></div>
<div style="left:759px;top:198px;width:99px;height:18px;background:#e3e3e3"></div>
<div style="left:859px;top:198px;width:79px;height:18px;background:#f0f0f0"></div>
<div style="left:939px;top:198px;width:49px;height:18px;background:#f0f0f0"></div>
<div style="left:989px;top:198px;width:69px;height:18px;background:#f0f0f0"></div>
<div style="left:1059px;top:198px;width:69px;height:18px;background:#e3e3e3"></div>
<span class="t" style="left:368.3px;top:197.0px;height:20px;line-height:20px;font-size:12px;color:#727272;font-weight:normal;">5</span>
<svg style="left:390.7px;top:203px;" width="16" height="10" viewBox="0 0 16 10"><path d="M2.2,4.7 L6.6,0.2 L15.2,0.2 L15.2,9.4 L6.6,9.4 Z" fill="#0c58a8"/><path d="M2.6,4.5 L6.8,0.3 L14.6,0.3 L14.6,8.6 L6.8,8.6 Z" fill="#1f97ea"/><path d="M3.4,4.2 L7,0.8 L14.2,0.8" fill="none" stroke="#74c8fa" stroke-width="0.9"/><path d="M0,4.6 L5.6,4.6" stroke="#0a2468" stroke-width="1.2"/><rect x="8.2" y="2.2" width="2.5" height="4.6" fill="none" stroke="#fff" stroke-width="1.25"/><path d="M12.9,1.6 L12.9,7.4" stroke="#fff" stroke-width="1.6"/></svg>
<div style="left:414px;top:204px;width:5px;height:5px;background:linear-gradient(135deg,#4a66e0,#1a2fb8)"></div>
<svg style="left:434px;top:202px;" width="5" height="9" viewBox="0 0 5 9"><path d="M0,0 L5,4.5 L0,9 Z" fill="#000"/></svg>
<span class="t" style="left:450px;top:197.0px;height:20px;line-height:20px;font-size:12px;color:#000;font-weight:normal;transform:scaleX(0.8569);transform-origin:0 50%;-webkit-text-stroke:0.15px #000;">BIT</span>
<span class="t" style="left:583px;top:197.0px;height:20px;line-height:20px;font-size:12px;color:#000;font-weight:normal;transform:scaleX(0.9831);transform-origin:0 50%;-webkit-text-stroke:0.15px #000;">Array[0..15] of Bool</span>
<span class="t" style="left:703px;top:197.0px;height:20px;line-height:20px;font-size:12px;color:#000;font-weight:normal;transform:scaleX(0.9588);transform-origin:0 50%;-webkit-text-stroke:0.15px #000;">2.0</span>
<div style="left:891.0px;top:199px;width:15px;height:15px;border:1px solid #4a4e58;border-radius:3px;background:linear-gradient(#e6eefc 0%,#c4d8f6 30%,#6cb0e6 55%,#36c4ea 80%,#78eef8 100%);box-sizing:border-box;box-shadow:inset 0 0 0 1px #2c5cb4"></div>
<svg style="left:891.0px;top:199px;" width="15" height="15" viewBox="0 0 15 15"><path d="M3.2,6.3 L6.3,9.2 L11.9,3 L11.9,6.2 L6.3,12 L3.2,9.2 Z" fill="#0b3790"/></svg>
<div style="left:956.0px;top:199px;width:15px;height:15px;border:1px solid #4a4e58;border-radius:3px;background:linear-gradient(#e6eefc 0%,#c4d8f6 30%,#6cb0e6 55%,#36c4ea 80%,#78eef8 100%);box-sizing:border-box;box-shadow:inset 0 0 0 1px #2c5cb4"></div>
<svg style="left:956.0px;top:199px;" width="15" height="15" viewBox="0 0 15 15"><path d="M3.2,6.3 L6.3,9.2 L11.9,3 L11.9,6.2 L6.3,12 L3.2,9.2 Z" fill="#0b3790"/></svg>
<div style="left:1016.0px;top:199px;width:15px;height:15px;border:1px solid #4a4e58;border-radius:3px;background:linear-gradient(#e6eefc 0%,#c4d8f6 30%,#6cb0e6 55%,#36c4ea 80%,#78eef8 100%);box-sizing:border-box;box-shadow:inset 0 0 0 1px #2c5cb4"></div>
<svg style="left:1016.0px;top:199px;" width="15" height="15" viewBox="0 0 15 15"><path d="M3.2,6.3 L6.3,9.2 L11.9,3 L11.9,6.2 L6.3,12 L3.2,9.2 Z" fill="#0b3790"/></svg>
<div style="left:1086.0px;top:199px;width:15px;height:15px;border:1px solid #bcbcbc;border-radius:3px;background:linear-gradient(#fdfdfd 0%,#f2f2f2 48%,#e8e8e8 52%,#f4f4f4 100%);box-sizing:border-box"></div>
<div style="left:364px;top:217px;width:25px;height:18px;background:#c8c8c8"></div>
<div style="left:389px;top:217px;width:1px;height:18px;background:#b6b6b6"></div>
<div style="left:390px;top:217px;width:18px;height:18px;background:#f0f0f0"></div>
<div style="left:409px;top:217px;width:169px;height:18px;background:#f0f0f0"></div>
<div style="left:409px;top:217px;width:18px;height:18px;background:#eaeaea"></div>
<div style="left:579px;top:217px;width:119px;height:18px;background:#f0f0f0"></div>
<div style="left:699px;top:217px;width:59px;height:18px;background:#e3e3e3"></div>
<div style="left:759px;top:217px;width:99px;height:18px;background:#e3e3e3"></div>
<div style="left:859px;top:217px;width:79px;height:18px;background:#e3e3e3"></div>
<div style="left:939px;top:217px;width:49px;height:18px;background:#e3e3e3"></div>
<div style="left:989px;top:217px;width:69px;height:18px;background:#e3e3e3"></div>
<div style="left:1059px;top:217px;width:69px;height:18px;background:#e3e3e3"></div>
<span class="t" style="left:368.3px;top:216.0px;height:20px;line-height:20px;font-size:12px;color:#727272;font-weight:normal;">6</span>
<div style="left:414px;top:223px;width:5px;height:5px;background:linear-gradient(135deg,#4a66e0,#1a2fb8)"></div>
<span class="t" style="left:450px;top:216.5px;height:20px;line-height:20px;font-size:12px;color:#7a7a7a;font-weight:normal;transform:scaleX(0.9470);transform-origin:0 50%;-webkit-text-stroke:0.2px #7a7a7a;">&lt;新增&gt;</span>
<div style="left:891.0px;top:218px;width:15px;height:15px;border:1px solid #bcbcbc;border-radius:3px;background:linear-gradient(#fdfdfd 0%,#f2f2f2 48%,#e8e8e8 52%,#f4f4f4 100%);box-sizing:border-box"></div>
<div style="left:956.0px;top:218px;width:15px;height:15px;border:1px solid #bcbcbc;border-radius:3px;background:linear-gradient(#fdfdfd 0%,#f2f2f2 48%,#e8e8e8 52%,#f4f4f4 100%);box-sizing:border-box"></div>
<div style="left:1016.0px;top:218px;width:15px;height:15px;border:1px solid #bcbcbc;border-radius:3px;background:linear-gradient(#fdfdfd 0%,#f2f2f2 48%,#e8e8e8 52%,#f4f4f4 100%);box-sizing:border-box"></div>
<div style="left:1086.0px;top:218px;width:15px;height:15px;border:1px solid #bcbcbc;border-radius:3px;background:linear-gradient(#fdfdfd 0%,#f2f2f2 48%,#e8e8e8 52%,#f4f4f4 100%);box-sizing:border-box"></div>
<div style="left:364px;top:236px;width:25px;height:18px;background:#c8c8c8"></div>
<div style="left:389px;top:236px;width:1px;height:18px;background:#b6b6b6"></div>
<div style="left:390px;top:236px;width:18px;height:18px;background:#e3e3e3"></div>
<div style="left:409px;top:236px;width:169px;height:18px;background:#e3e3e3"></div>
<div style="left:579px;top:236px;width:119px;height:18px;background:#e3e3e3"></div>
<div style="left:699px;top:236px;width:59px;height:18px;background:#e3e3e3"></div>
<div style="left:759px;top:236px;width:99px;height:18px;background:#e3e3e3"></div>
<div style="left:859px;top:236px;width:79px;height:18px;background:#e3e3e3"></div>
<div style="left:939px;top:236px;width:49px;height:18px;background:#e3e3e3"></div>
<div style="left:989px;top:236px;width:69px;height:18px;background:#e3e3e3"></div>
<div style="left:1059px;top:236px;width:69px;height:18px;background:#e3e3e3"></div>
<span class="t" style="left:368.3px;top:235.0px;height:20px;line-height:20px;font-size:12px;color:#727272;font-weight:normal;">7</span>
<svg style="left:390.7px;top:241px;" width="16" height="10" viewBox="0 0 16 10"><path d="M2.2,4.7 L6.6,0.2 L15.2,0.2 L15.2,9.4 L6.6,9.4 Z" fill="#0c58a8"/><path d="M2.6,4.5 L6.8,0.3 L14.6,0.3 L14.6,8.6 L6.8,8.6 Z" fill="#1f97ea"/><path d="M3.4,4.2 L7,0.8 L14.2,0.8" fill="none" stroke="#74c8fa" stroke-width="0.9"/><path d="M0,4.6 L5.6,4.6" stroke="#0a2468" stroke-width="1.2"/><rect x="8.2" y="2.2" width="2.5" height="4.6" fill="none" stroke="#fff" stroke-width="1.25"/><path d="M12.9,1.6 L12.9,7.4" stroke="#fff" stroke-width="1.6"/></svg>
<svg style="left:414px;top:242px;" width="9" height="5" viewBox="0 0 9 5"><path d="M0,0 L8.6,0 L4.3,4.4 Z" fill="#000"/></svg>
<span class="t" style="left:432px;top:235.0px;height:20px;line-height:20px;font-size:12px;color:#000;font-weight:normal;letter-spacing:0.128px;-webkit-text-stroke:0.15px #000;">InOut</span>
<div style="left:891.0px;top:237px;width:15px;height:15px;border:1px solid #bcbcbc;border-radius:3px;background:linear-gradient(#fdfdfd 0%,#f2f2f2 48%,#e8e8e8 52%,#f4f4f4 100%);box-sizing:border-box"></div>
<div style="left:956.0px;top:237px;width:15px;height:15px;border:1px solid #bcbcbc;border-radius:3px;background:linear-gradient(#fdfdfd 0%,#f2f2f2 48%,#e8e8e8 52%,#f4f4f4 100%);box-sizing:border-box"></div>
<div style="left:1016.0px;top:237px;width:15px;height:15px;border:1px solid #bcbcbc;border-radius:3px;background:linear-gradient(#fdfdfd 0%,#f2f2f2 48%,#e8e8e8 52%,#f4f4f4 100%);box-sizing:border-box"></div>
<div style="left:1086.0px;top:237px;width:15px;height:15px;border:1px solid #bcbcbc;border-radius:3px;background:linear-gradient(#fdfdfd 0%,#f2f2f2 48%,#e8e8e8 52%,#f4f4f4 100%);box-sizing:border-box"></div>
<div style="left:364px;top:255px;width:25px;height:18px;background:#c8c8c8"></div>
<div style="left:389px;top:255px;width:1px;height:18px;background:#b6b6b6"></div>
<div style="left:390px;top:255px;width:18px;height:18px;background:#f0f0f0"></div>
<div style="left:409px;top:255px;width:169px;height:18px;background:#f0f0f0"></div>
<div style="left:409px;top:255px;width:18px;height:18px;background:#eaeaea"></div>
<div style="left:579px;top:255px;width:119px;height:18px;background:#f0f0f0"></div>
<div style="left:699px;top:255px;width:59px;height:18px;background:#e3e3e3"></div>
<div style="left:759px;top:255px;width:99px;height:18px;background:#e3e3e3"></div>
<div style="left:859px;top:255px;width:79px;height:18px;background:#e3e3e3"></div>
<div style="left:939px;top:255px;width:49px;height:18px;background:#e3e3e3"></div>
<div style="left:989px;top:255px;width:69px;height:18px;background:#e3e3e3"></div>
<div style="left:1059px;top:255px;width:69px;height:18px;background:#e3e3e3"></div>
<span class="t" style="left:368.3px;top:254.0px;height:20px;line-height:20px;font-size:12px;color:#727272;font-weight:normal;">8</span>
<div style="left:414px;top:261px;width:5px;height:5px;background:linear-gradient(135deg,#4a66e0,#1a2fb8)"></div>
<span class="t" style="left:450px;top:254.5px;height:20px;line-height:20px;font-size:12px;color:#7a7a7a;font-weight:normal;transform:scaleX(0.9470);transform-origin:0 50%;-webkit-text-stroke:0.2px #7a7a7a;">&lt;新增&gt;</span>
<div style="left:891.0px;top:256px;width:15px;height:15px;border:1px solid #bcbcbc;border-radius:3px;background:linear-gradient(#fdfdfd 0%,#f2f2f2 48%,#e8e8e8 52%,#f4f4f4 100%);box-sizing:border-box"></div>
<div style="left:956.0px;top:256px;width:15px;height:15px;border:1px solid #bcbcbc;border-radius:3px;background:linear-gradient(#fdfdfd 0%,#f2f2f2 48%,#e8e8e8 52%,#f4f4f4 100%);box-sizing:border-box"></div>
<div style="left:1016.0px;top:256px;width:15px;height:15px;border:1px solid #bcbcbc;border-radius:3px;background:linear-gradient(#fdfdfd 0%,#f2f2f2 48%,#e8e8e8 52%,#f4f4f4 100%);box-sizing:border-box"></div>
<div style="left:1086.0px;top:256px;width:15px;height:15px;border:1px solid #bcbcbc;border-radius:3px;background:linear-gradient(#fdfdfd 0%,#f2f2f2 48%,#e8e8e8 52%,#f4f4f4 100%);box-sizing:border-box"></div>
<div style="left:364px;top:274px;width:25px;height:18px;background:#c8c8c8"></div>
<div style="left:389px;top:274px;width:1px;height:18px;background:#b6b6b6"></div>
<div style="left:390px;top:274px;width:18px;height:18px;background:#e3e3e3"></div>
<div style="left:409px;top:274px;width:169px;height:18px;background:#e3e3e3"></div>
<div style="left:579px;top:274px;width:119px;height:18px;background:#e3e3e3"></div>
<div style="left:699px;top:274px;width:59px;height:18px;background:#e3e3e3"></div>
<div style="left:759px;top:274px;width:99px;height:18px;background:#e3e3e3"></div>
<div style="left:859px;top:274px;width:79px;height:18px;background:#e3e3e3"></div>
<div style="left:939px;top:274px;width:49px;height:18px;background:#e3e3e3"></div>
<div style="left:989px;top:274px;width:69px;height:18px;background:#e3e3e3"></div>
<div style="left:1059px;top:274px;width:69px;height:18px;background:#e3e3e3"></div>
<span class="t" style="left:368.3px;top:273.0px;height:20px;line-height:20px;font-size:12px;color:#727272;font-weight:normal;">9</span>
<svg style="left:390.7px;top:279px;" width="16" height="10" viewBox="0 0 16 10"><path d="M2.2,4.7 L6.6,0.2 L15.2,0.2 L15.2,9.4 L6.6,9.4 Z" fill="#0c58a8"/><path d="M2.6,4.5 L6.8,0.3 L14.6,0.3 L14.6,8.6 L6.8,8.6 Z" fill="#1f97ea"/><path d="M3.4,4.2 L7,0.8 L14.2,0.8" fill="none" stroke="#74c8fa" stroke-width="0.9"/><path d="M0,4.6 L5.6,4.6" stroke="#0a2468" stroke-width="1.2"/><rect x="8.2" y="2.2" width="2.5" height="4.6" fill="none" stroke="#fff" stroke-width="1.25"/><path d="M12.9,1.6 L12.9,7.4" stroke="#fff" stroke-width="1.6"/></svg>
<svg style="left:414px;top:280px;" width="9" height="5" viewBox="0 0 9 5"><path d="M0,0 L8.6,0 L4.3,4.4 Z" fill="#000"/></svg>
<span class="t" style="left:432px;top:273.0px;height:20px;line-height:20px;font-size:12px;color:#000;font-weight:normal;letter-spacing:-0.003px;-webkit-text-stroke:0.15px #000;">Static</span>
<div style="left:891.0px;top:275px;width:15px;height:15px;border:1px solid #bcbcbc;border-radius:3px;background:linear-gradient(#fdfdfd 0%,#f2f2f2 48%,#e8e8e8 52%,#f4f4f4 100%);box-sizing:border-box"></div>
<div style="left:956.0px;top:275px;width:15px;height:15px;border:1px solid #bcbcbc;border-radius:3px;background:linear-gradient(#fdfdfd 0%,#f2f2f2 48%,#e8e8e8 52%,#f4f4f4 100%);box-sizing:border-box"></div>
<div style="left:1016.0px;top:275px;width:15px;height:15px;border:1px solid #bcbcbc;border-radius:3px;background:linear-gradient(#fdfdfd 0%,#f2f2f2 48%,#e8e8e8 52%,#f4f4f4 100%);box-sizing:border-box"></div>
<div style="left:1086.0px;top:275px;width:15px;height:15px;border:1px solid #bcbcbc;border-radius:3px;background:linear-gradient(#fdfdfd 0%,#f2f2f2 48%,#e8e8e8 52%,#f4f4f4 100%);box-sizing:border-box"></div>
<div style="left:364px;top:293px;width:25px;height:18px;background:#c8c8c8"></div>
<div style="left:389px;top:293px;width:1px;height:18px;background:#b6b6b6"></div>
<div style="left:390px;top:293px;width:18px;height:18px;background:#e3e3e3"></div>
<div style="left:409px;top:293px;width:169px;height:18px;background:#f0f0f0"></div>
<div style="left:409px;top:293px;width:18px;height:18px;background:#eaeaea"></div>
<div style="left:579px;top:293px;width:119px;height:18px;background:#f0f0f0"></div>
<div style="left:699px;top:293px;width:59px;height:18px;background:#e3e3e3"></div>
<div style="left:759px;top:293px;width:99px;height:18px;background:#f0f0f0"></div>
<div style="left:859px;top:293px;width:79px;height:18px;background:#f0f0f0"></div>
<div style="left:939px;top:293px;width:49px;height:18px;background:#f0f0f0"></div>
<div style="left:989px;top:293px;width:69px;height:18px;background:#f0f0f0"></div>
<div style="left:1059px;top:293px;width:69px;height:18px;background:#f0f0f0"></div>
<span class="t" style="left:368.3px;top:292.0px;height:20px;line-height:20px;font-size:12px;color:#727272;font-weight:normal;">10</span>
<svg style="left:390.7px;top:298px;" width="16" height="10" viewBox="0 0 16 10"><path d="M2.2,4.7 L6.6,0.2 L15.2,0.2 L15.2,9.4 L6.6,9.4 Z" fill="#0c58a8"/><path d="M2.6,4.5 L6.8,0.3 L14.6,0.3 L14.6,8.6 L6.8,8.6 Z" fill="#1f97ea"/><path d="M3.4,4.2 L7,0.8 L14.2,0.8" fill="none" stroke="#74c8fa" stroke-width="0.9"/><path d="M0,4.6 L5.6,4.6" stroke="#0a2468" stroke-width="1.2"/><rect x="8.2" y="2.2" width="2.5" height="4.6" fill="none" stroke="#fff" stroke-width="1.25"/><path d="M12.9,1.6 L12.9,7.4" stroke="#fff" stroke-width="1.6"/></svg>
<div style="left:414px;top:299px;width:5px;height:5px;background:linear-gradient(135deg,#4a66e0,#1a2fb8)"></div>
<span class="t" style="left:450px;top:292.0px;height:20px;line-height:20px;font-size:12px;color:#000;font-weight:normal;transform:scaleX(0.9710);transform-origin:0 50%;-webkit-text-stroke:0.15px #000;">W</span>
<span class="t" style="left:583px;top:292.0px;height:20px;line-height:20px;font-size:12px;color:#000;font-weight:normal;transform:scaleX(0.9138);transform-origin:0 50%;-webkit-text-stroke:0.15px #000;">Word</span>
<span class="t" style="left:703px;top:292.0px;height:20px;line-height:20px;font-size:12px;color:#000;font-weight:normal;transform:scaleX(0.9588);transform-origin:0 50%;-webkit-text-stroke:0.15px #000;">4.0</span>
<span class="t" style="left:764px;top:292.0px;height:20px;line-height:20px;font-size:12px;color:#7a7a7a;font-weight:normal;letter-spacing:0.324px;">16#0</span>
<div style="left:891.0px;top:294px;width:15px;height:15px;border:1px solid #4a4e58;border-radius:3px;background:linear-gradient(#e6eefc 0%,#c4d8f6 30%,#6cb0e6 55%,#36c4ea 80%,#78eef8 100%);box-sizing:border-box;box-shadow:inset 0 0 0 1px #2c5cb4"></div>
<svg style="left:891.0px;top:294px;" width="15" height="15" viewBox="0 0 15 15"><path d="M3.2,6.3 L6.3,9.2 L11.9,3 L11.9,6.2 L6.3,12 L3.2,9.2 Z" fill="#0b3790"/></svg>
<div style="left:956.0px;top:294px;width:15px;height:15px;border:1px solid #4a4e58;border-radius:3px;background:linear-gradient(#e6eefc 0%,#c4d8f6 30%,#6cb0e6 55%,#36c4ea 80%,#78eef8 100%);box-sizing:border-box;box-shadow:inset 0 0 0 1px #2c5cb4"></div>
<svg style="left:956.0px;top:294px;" width="15" height="15" viewBox="0 0 15 15"><path d="M3.2,6.3 L6.3,9.2 L11.9,3 L11.9,6.2 L6.3,12 L3.2,9.2 Z" fill="#0b3790"/></svg>
<div style="left:1016.0px;top:294px;width:15px;height:15px;border:1px solid #4a4e58;border-radius:3px;background:linear-gradient(#e6eefc 0%,#c4d8f6 30%,#6cb0e6 55%,#36c4ea 80%,#78eef8 100%);box-sizing:border-box;box-shadow:inset 0 0 0 1px #2c5cb4"></div>
<svg style="left:1016.0px;top:294px;" width="15" height="15" viewBox="0 0 15 15"><path d="M3.2,6.3 L6.3,9.2 L11.9,3 L11.9,6.2 L6.3,12 L3.2,9.2 Z" fill="#0b3790"/></svg>
<div style="left:1086.0px;top:294px;width:15px;height:15px;border:1px solid #7e7e7e;border-radius:3px;background:linear-gradient(#f6f6f6 0%,#e6e6e6 48%,#d2d2d2 52%,#e2e2e2 100%);box-sizing:border-box"></div>
<div style="left:364px;top:312px;width:25px;height:18px;background:#c8c8c8"></div>
<div style="left:389px;top:312px;width:1px;height:18px;background:#b6b6b6"></div>
<div style="left:390px;top:312px;width:18px;height:18px;background:#e3e3e3"></div>
<div style="left:409px;top:312px;width:169px;height:18px;background:#f0f0f0"></div>
<div style="left:409px;top:312px;width:18px;height:18px;background:#eaeaea"></div>
<div style="left:579px;top:312px;width:119px;height:18px;background:#f0f0f0"></div>
<div style="left:699px;top:312px;width:59px;height:18px;background:#e3e3e3"></div>
<div style="left:759px;top:312px;width:99px;height:18px;background:#e3e3e3"></div>
<div style="left:859px;top:312px;width:79px;height:18px;background:#e3e3e3"></div>
<div style="left:939px;top:312px;width:49px;height:18px;background:#e3e3e3"></div>
<div style="left:989px;top:312px;width:69px;height:18px;background:#e3e3e3"></div>
<div style="left:1059px;top:312px;width:69px;height:18px;background:#e3e3e3"></div>
<span class="t" style="left:368.3px;top:311.0px;height:20px;line-height:20px;font-size:12px;color:#727272;font-weight:normal;">11</span>
<svg style="left:390.7px;top:317px;" width="16" height="10" viewBox="0 0 16 10"><path d="M2.2,4.7 L6.6,0.2 L15.2,0.2 L15.2,9.4 L6.6,9.4 Z" fill="#0c58a8"/><path d="M2.6,4.5 L6.8,0.3 L14.6,0.3 L14.6,8.6 L6.8,8.6 Z" fill="#1f97ea"/><path d="M3.4,4.2 L7,0.8 L14.2,0.8" fill="none" stroke="#74c8fa" stroke-width="0.9"/><path d="M0,4.6 L5.6,4.6" stroke="#0a2468" stroke-width="1.2"/><rect x="8.2" y="2.2" width="2.5" height="4.6" fill="none" stroke="#fff" stroke-width="1.25"/><path d="M12.9,1.6 L12.9,7.4" stroke="#fff" stroke-width="1.6"/></svg>
<svg style="left:434px;top:316px;" width="5" height="9" viewBox="0 0 5 9"><path d="M0,0 L5,4.5 L0,9 Z" fill="#000"/></svg>
<span class="t" style="left:450px;top:311.0px;height:20px;line-height:20px;font-size:12px;color:#000;font-weight:normal;transform:scaleX(0.7485);transform-origin:0 50%;-webkit-text-stroke:0.15px #000;">B</span>
<span class="t" style="left:503px;top:311.0px;height:20px;line-height:20px;font-size:12px;color:#000;font-weight:normal;transform:scaleX(0.9089);transform-origin:0 50%;-webkit-text-stroke:0.15px #000;">AT "W"</span>
<span class="t" style="left:583px;top:311.0px;height:20px;line-height:20px;font-size:12px;color:#000;font-weight:normal;transform:scaleX(0.9831);transform-origin:0 50%;-webkit-text-stroke:0.15px #000;">Array[0..15] of Bool</span>
<span class="t" style="left:703px;top:311.0px;height:20px;line-height:20px;font-size:12px;color:#000;font-weight:normal;transform:scaleX(0.9588);transform-origin:0 50%;-webkit-text-stroke:0.15px #000;">4.0</span>
<div style="left:891.0px;top:313px;width:15px;height:15px;border:1px solid #bcbcbc;border-radius:3px;background:linear-gradient(#fdfdfd 0%,#f2f2f2 48%,#e8e8e8 52%,#f4f4f4 100%);box-sizing:border-box"></div>
<div style="left:956.0px;top:313px;width:15px;height:15px;border:1px solid #bcbcbc;border-radius:3px;background:linear-gradient(#fdfdfd 0%,#f2f2f2 48%,#e8e8e8 52%,#f4f4f4 100%);box-sizing:border-box"></div>
<div style="left:1016.0px;top:313px;width:15px;height:15px;border:1px solid #bcbcbc;border-radius:3px;background:linear-gradient(#fdfdfd 0%,#f2f2f2 48%,#e8e8e8 52%,#f4f4f4 100%);box-sizing:border-box"></div>
<div style="left:1086.0px;top:313px;width:15px;height:15px;border:1px solid #bcbcbc;border-radius:3px;background:linear-gradient(#fdfdfd 0%,#f2f2f2 48%,#e8e8e8 52%,#f4f4f4 100%);box-sizing:border-box"></div>
<div style="left:364px;top:331px;width:25px;height:18px;background:#c8c8c8"></div>
<div style="left:389px;top:331px;width:1px;height:18px;background:#b6b6b6"></div>
<div style="left:390px;top:331px;width:18px;height:18px;background:#f0f0f0"></div>
<div style="left:409px;top:331px;width:169px;height:18px;background:#f0f0f0"></div>
<div style="left:409px;top:331px;width:18px;height:18px;background:#eaeaea"></div>
<div style="left:579px;top:331px;width:119px;height:18px;background:#f0f0f0"></div>
<div style="left:699px;top:331px;width:59px;height:18px;background:#e3e3e3"></div>
<div style="left:759px;top:331px;width:99px;height:18px;background:#e3e3e3"></div>
<div style="left:859px;top:331px;width:79px;height:18px;background:#e3e3e3"></div>
<div style="left:939px;top:331px;width:49px;height:18px;background:#e3e3e3"></div>
<div style="left:989px;top:331px;width:69px;height:18px;background:#e3e3e3"></div>
<div style="left:1059px;top:331px;width:69px;height:18px;background:#e3e3e3"></div>
<span class="t" style="left:368.3px;top:330.0px;height:20px;line-height:20px;font-size:12px;color:#727272;font-weight:normal;">12</span>
<div style="left:414px;top:337px;width:5px;height:5px;background:linear-gradient(135deg,#4a66e0,#1a2fb8)"></div>
<span class="t" style="left:450px;top:330.5px;height:20px;line-height:20px;font-size:12px;color:#7a7a7a;font-weight:normal;transform:scaleX(0.9470);transform-origin:0 50%;-webkit-text-stroke:0.2px #7a7a7a;">&lt;新增&gt;</span>
<div style="left:891.0px;top:332px;width:15px;height:15px;border:1px solid #bcbcbc;border-radius:3px;background:linear-gradient(#fdfdfd 0%,#f2f2f2 48%,#e8e8e8 52%,#f4f4f4 100%);box-sizing:border-box"></div>
<div style="left:956.0px;top:332px;width:15px;height:15px;border:1px solid #bcbcbc;border-radius:3px;background:linear-gradient(#fdfdfd 0%,#f2f2f2 48%,#e8e8e8 52%,#f4f4f4 100%);box-sizing:border-box"></div>
<div style="left:1016.0px;top:332px;width:15px;height:15px;border:1px solid #bcbcbc;border-radius:3px;background:linear-gradient(#fdfdfd 0%,#f2f2f2 48%,#e8e8e8 52%,#f4f4f4 100%);box-sizing:border-box"></div>
<div style="left:1086.0px;top:332px;width:15px;height:15px;border:1px solid #bcbcbc;border-radius:3px;background:linear-gradient(#fdfdfd 0%,#f2f2f2 48%,#e8e8e8 52%,#f4f4f4 100%);box-sizing:border-box"></div>
<div style="left:364px;top:350px;width:25px;height:3px;background:#c8c8c8"></div>
<div style="left:389px;top:350px;width:1px;height:3px;background:#b6b6b6"></div>
<div style="left:390px;top:350px;width:18px;height:3px;background:#e3e3e3"></div>
<div style="left:409px;top:350px;width:169px;height:3px;background:#e3e3e3"></div>
<div style="left:579px;top:350px;width:119px;height:3px;background:#e3e3e3"></div>
<div style="left:699px;top:350px;width:59px;height:3px;background:#e3e3e3"></div>
<div style="left:759px;top:350px;width:99px;height:3px;background:#e3e3e3"></div>
<div style="left:859px;top:350px;width:79px;height:3px;background:#e3e3e3"></div>
<div style="left:939px;top:350px;width:49px;height:3px;background:#e3e3e3"></div>
<div style="left:989px;top:350px;width:69px;height:3px;background:#e3e3e3"></div>
<div style="left:1059px;top:350px;width:69px;height:3px;background:#e3e3e3"></div>
<div style="left:891.0px;top:351px;width:15px;height:3px;border:1px solid #bdbdbd;border-bottom:none;border-radius:3px 3px 0 0;background:#f8f8f8;box-sizing:border-box"></div>
<div style="left:956.0px;top:351px;width:15px;height:3px;border:1px solid #bdbdbd;border-bottom:none;border-radius:3px 3px 0 0;background:#f8f8f8;box-sizing:border-box"></div>
<div style="left:1016.0px;top:351px;width:15px;height:3px;border:1px solid #bdbdbd;border-bottom:none;border-radius:3px 3px 0 0;background:#f8f8f8;box-sizing:border-box"></div>
<div style="left:1086.0px;top:351px;width:15px;height:3px;border:1px solid #bdbdbd;border-bottom:none;border-radius:3px 3px 0 0;background:#f8f8f8;box-sizing:border-box"></div>
<div style="left:681px;top:141px;width:17px;height:18px;background:linear-gradient(#f8f8f8,#dcdcdc);border:1px solid #808080;border-radius:3px;box-sizing:border-box;box-shadow:inset 0 0 0 1px #bcbcbc"></div>
<svg style="left:684px;top:144px;" width="11" height="12" viewBox="0 0 11 12"><rect x="0.5" y="0.5" width="10" height="11" fill="#f4f5ff" stroke="#7a86e0"/><g fill="#14143c"><rect x="2" y="2" width="1" height="1"/><rect x="4" y="2" width="5" height="1"/><rect x="2" y="4" width="1" height="1"/><rect x="4" y="4" width="5" height="1"/><rect x="2" y="6" width="1" height="1"/><rect x="4" y="6" width="5" height="1"/><rect x="2" y="8" width="1" height="1"/><rect x="4" y="8" width="5" height="1"/></g></svg>
<div style="left:1111px;top:122px;width:17px;height:231px;background:#c4c4c4"></div>
<div style="left:1110px;top:122px;width:1px;height:231px;background:#f4f4f4"></div>
<div style="left:1111px;top:122px;width:17px;height:18px;background:linear-gradient(#f6f6f6,#e2e2e2);border:1px solid #8e8e8e;box-shadow:inset 0 0 0 1px #fdfdfd;box-sizing:border-box"></div>
<svg style="left:1111px;top:122px;" width="17" height="18" viewBox="0 0 17 18"><path d="M4,11 L8.5,6.5 L13,11" fill="none" stroke="#555" stroke-width="2"/></svg>
<div style="left:1111px;top:335px;width:17px;height:18px;background:linear-gradient(#f6f6f6,#e2e2e2);border:1px solid #8e8e8e;box-shadow:inset 0 0 0 1px #fdfdfd;box-sizing:border-box"></div>
<svg style="left:1111px;top:335px;" width="17" height="18" viewBox="0 0 17 18"><path d="M4,7 L8.5,11.5 L13,7" fill="none" stroke="#555" stroke-width="2"/></svg>
<div style="left:1111px;top:141px;width:17px;height:85px;background:linear-gradient(90deg,#dcdcdc,#f2f2f2 50%,#e0e0e0);border:1px solid #8e8e8e;box-shadow:inset 0 0 0 1px #fdfdfd;box-sizing:border-box"></div>
<div style="left:1115px;top:180.5px;width:9px;height:1px;background:#555"></div>
<div style="left:1115px;top:182.5px;width:9px;height:1px;background:#555"></div>
<div style="left:1115px;top:184.5px;width:9px;height:1px;background:#555"></div>
<div style="left:1115px;top:186.5px;width:9px;height:1px;background:#555"></div>
<div style="left:364px;top:353px;width:764px;height:1px;background:#fafafa"></div>
<div style="left:364px;top:354px;width:764px;height:18px;background:#c4c4c4"></div>
<div style="left:390px;top:354px;width:720px;height:18px;background:#c4c4c4"></div>
<div style="left:390px;top:354px;width:18px;height:18px;background:linear-gradient(#f6f6f6,#e2e2e2);border:1px solid #8e8e8e;box-shadow:inset 0 0 0 1px #fdfdfd;box-sizing:border-box"></div>
<svg style="left:390px;top:354px;" width="18" height="18" viewBox="0 0 18 18"><path d="M11,4.5 L6.5,9 L11,13.5" fill="none" stroke="#444" stroke-width="2"/></svg>
<div style="left:1092px;top:354px;width:18px;height:18px;background:linear-gradient(#f6f6f6,#e2e2e2);border:1px solid #8e8e8e;box-shadow:inset 0 0 0 1px #fdfdfd;box-sizing:border-box"></div>
<svg style="left:1092px;top:354px;" width="18" height="18" viewBox="0 0 18 18"><path d="M7,4.5 L11.5,9 L7,13.5" fill="none" stroke="#444" stroke-width="2"/></svg>
<div style="left:409px;top:354px;width:629px;height:18px;background:linear-gradient(#f0f0f0,#dedede 50%,#d6d6d6);border:1px solid #8e8e8e;box-shadow:inset 0 0 0 1px #fdfdfd;box-sizing:border-box"></div>
<div style="left:721px;top:359px;width:1px;height:8px;background:#555"></div>
<div style="left:723px;top:359px;width:1px;height:8px;background:#555"></div>
<div style="left:725px;top:359px;width:1px;height:8px;background:#555"></div>
<div style="left:727px;top:359px;width:1px;height:8px;background:#555"></div>
<div style="left:364px;top:372px;width:764px;height:1px;background:#7e7e7e"></div>
<div style="left:364px;top:373px;width:764px;height:5px;background:linear-gradient(#cfcfcf 0,#dcdcdc 1px)"></div>
<div style="left:364px;top:378px;width:764px;height:1px;background:#909090"></div>
<div style="left:364px;top:379px;width:764px;height:1px;background:#fafafa"></div>
<div style="left:717px;top:373px;width:24px;height:5px;background:linear-gradient(#a2a2a2,#d6d6d6);border-left:1px solid #8a8a8a;border-right:1px solid #8a8a8a;box-sizing:border-box"></div>
<svg style="left:726px;top:374px;" width="6" height="3" viewBox="0 0 6 3"><path d="M0,3 L6,3 L3,0 Z" fill="#000"/></svg>
<div style="left:751px;top:373px;width:24px;height:5px;background:linear-gradient(#a2a2a2,#d6d6d6);border-left:1px solid #8a8a8a;border-right:1px solid #8a8a8a;box-sizing:border-box"></div>
<svg style="left:760px;top:374px;" width="6" height="3" viewBox="0 0 6 3"><path d="M0,0 L6,0 L3,3 Z" fill="#000"/></svg>
<div style="left:364px;top:380px;width:47px;height:25px;background:#e8e8e8"></div>
<div style="left:364px;top:405px;width:47px;height:176px;background:#efefef"></div>
<div style="left:364px;top:423px;width:47px;height:1px;background:#fbfbfb"></div>
<div style="left:364px;top:442px;width:47px;height:1px;background:#fbfbfb"></div>
<div style="left:364px;top:461px;width:47px;height:1px;background:#fbfbfb"></div>
<div style="left:364px;top:480px;width:47px;height:1px;background:#fbfbfb"></div>
<div style="left:364px;top:499px;width:47px;height:1px;background:#fbfbfb"></div>
<div style="left:364px;top:518px;width:47px;height:1px;background:#fbfbfb"></div>
<div style="left:364px;top:537px;width:47px;height:1px;background:#fbfbfb"></div>
<div style="left:364px;top:556px;width:47px;height:1px;background:#fbfbfb"></div>
<div style="left:364px;top:575px;width:47px;height:1px;background:#fbfbfb"></div>
<svg style="left:393px;top:382.5px;" width="5" height="8" viewBox="0 0 5 8"><path d="M0,0 L4.5,4 L0,8 Z" fill="#000"/></svg>
<div style="left:411px;top:380px;width:8px;height:201px;background:#d6d6d6;border-left:1px solid #8c8c8c;border-right:1px solid #949494;box-sizing:border-box"></div>
<div style="left:419px;top:380px;width:709px;height:38px;background:#ececec"></div>
<div style="left:421px;top:382px;width:32px;height:32px;background:#fff"></div>
<span class="t" style="left:417px;top:387.5px;width:40px;height:20px;line-height:20px;text-align:center;font-size:8.4px;color:#14143c;letter-spacing:0px;-webkit-text-stroke:0.2px #14143c">IF...</span>
<div style="left:455px;top:382px;width:32px;height:32px;background:#fff"></div>
<span class="t" style="left:451px;top:382.5px;width:40px;height:20px;line-height:20px;text-align:center;font-size:8.4px;color:#14143c;letter-spacing:0px;-webkit-text-stroke:0.2px #14143c">CASE...</span>
<span class="t" style="left:451px;top:392.5px;width:40px;height:20px;line-height:20px;text-align:center;font-size:8.4px;color:#14143c;letter-spacing:0px;-webkit-text-stroke:0.2px #14143c">OF...</span>
<div style="left:489px;top:382px;width:32px;height:32px;background:#fff"></div>
<span class="t" style="left:485px;top:382.5px;width:40px;height:20px;line-height:20px;text-align:center;font-size:8.4px;color:#14143c;letter-spacing:0px;-webkit-text-stroke:0.2px #14143c">FOR...</span>
<span class="t" style="left:485px;top:392.5px;width:40px;height:20px;line-height:20px;text-align:center;font-size:8.4px;color:#14143c;letter-spacing:0px;-webkit-text-stroke:0.2px #14143c">TO DO..</span>
<div style="left:523px;top:382px;width:32px;height:32px;background:#fff"></div>
<span class="t" style="left:519px;top:382.5px;width:40px;height:20px;line-height:20px;text-align:center;font-size:8.4px;color:#14143c;letter-spacing:0px;-webkit-text-stroke:0.2px #14143c">WHILE..</span>
<span class="t" style="left:519px;top:392.5px;width:40px;height:20px;line-height:20px;text-align:center;font-size:8.4px;color:#14143c;letter-spacing:0px;-webkit-text-stroke:0.2px #14143c">DO...</span>
<div style="left:557px;top:382px;width:32px;height:32px;background:#fff"></div>
<span class="t" style="left:553px;top:387.5px;width:40px;height:20px;line-height:20px;text-align:center;font-size:8.4px;color:#14143c;letter-spacing:0px;-webkit-text-stroke:0.2px #14143c">(*...*)</span>
<div style="left:591px;top:382px;width:32px;height:32px;background:#dcecf6"></div>
<span class="t" style="left:587px;top:387.5px;width:40px;height:20px;line-height:20px;text-align:center;font-size:8.4px;color:#5a7aa0;letter-spacing:0px;-webkit-text-stroke:0.2px #5a7aa0">REGION</span>
<div style="left:419px;top:418px;width:19px;height:163px;background:#c2c2c2;border-right:1px solid #a4a4a4;box-sizing:border-box"></div>
<div style="left:438px;top:418px;width:690px;height:163px;background:#fff"></div>
<div style="left:419px;top:418px;width:709px;height:1px;background:#c4c4c4"></div>
<span class="t m" style="left:451px;top:418px;height:20px;line-height:20px;color:#555">1</span>
<span class="t m" style="left:472px;top:418px;height:20px;line-height:20px"><span style="color:#6a3aa0">#W</span><span style="color:#222"> := </span><span style="color:#7a1a1a">ROR</span><span style="color:#222">(</span><span style="color:#6a3aa0">IN</span><span style="color:#222"> := </span><span style="color:#6a3aa0">#Word</span><span style="color:#222">, </span><span style="color:#6a3aa0">N</span><span style="color:#222"> := </span><span style="color:#2a6aa8">8</span><span style="color:#222">);</span></span>
<div style="left:472px;top:436px;width:656px;height:17px;background:#ecfbfe"></div>
<span class="t m" style="left:451px;top:435px;height:20px;line-height:20px;color:#555">2</span>
<span class="t m" style="left:472px;top:435px;height:20px;line-height:20px"><span style="color:#6a3aa0">#BIT</span><span style="color:#222"> := </span><span style="color:#6a3aa0">#B</span><span style="color:#222">;</span></span>
<div style="left:1131px;top:2px;width:765px;height:24px;background:#b1b1b1"></div>
<svg style="left:1136px;top:9px;" width="15" height="9" viewBox="0 0 15 9"><path d="M14,1 L4.5,1 L1,4.5 L4.5,8 L14,8 M5,3.5 L12,3.5 L12,5.5 L5,5.5" fill="none" stroke="#f0f0f0" stroke-width="1.1"/></svg>
<span class="t" style="left:1163px;top:3.5px;height:20px;line-height:20px;font-size:14px;color:#f4f4f4;font-weight:normal;letter-spacing:0.477px;-webkit-text-stroke:0.3px #f4f4f4;">11</span>
<span class="t" style="left:1178.5px;top:3.5px;height:20px;line-height:20px;font-size:14px;color:#f4f4f4;font-weight:bold;letter-spacing:0.500px;font-family:'Liberation Sans','Noto Sans CJK SC',sans-serif;">岱庄</span>
<span class="t" style="left:1207.5px;top:3.5px;height:20px;line-height:20px;font-size:14px;color:#f4f4f4;font-weight:normal;letter-spacing:0.711px;-webkit-text-stroke:0.3px #f4f4f4;">0705</span>
<span class="t" style="left:1267px;top:3.5px;height:20px;line-height:20px;font-size:14px;color:#f4f4f4;font-weight:normal;transform:scaleX(0.9015);transform-origin:0 50%;word-spacing:2px;-webkit-text-stroke:0.3px #f4f4f4;">PLC_1 [CPU 412-2 PN]</span>
<span class="t" style="left:1431px;top:3.5px;height:20px;line-height:20px;font-size:14px;color:#f4f4f4;font-weight:bold;letter-spacing:0.667px;font-family:'Liberation Sans','Noto Sans CJK SC',sans-serif;">程序块</span>
<span class="t" style="left:1501px;top:3.5px;height:20px;line-height:20px;font-size:14px;color:#f4f4f4;font-weight:normal;transform:scaleX(0.9597);transform-origin:0 50%;word-spacing:2px;-webkit-text-stroke:0.3px #f4f4f4;">BOOL_TO_WORD [FB2]</span>
<svg style="left:1252px;top:10px;" width="5" height="8" viewBox="0 0 5 8"><path d="M0,0 L5,4 L0,8 Z" fill="#f4f4f4"/></svg>
<svg style="left:1416px;top:10px;" width="5" height="8" viewBox="0 0 5 8"><path d="M0,0 L5,4 L0,8 Z" fill="#f4f4f4"/></svg>
<svg style="left:1486px;top:10px;" width="5" height="8" viewBox="0 0 5 8"><path d="M0,0 L5,4 L0,8 Z" fill="#f4f4f4"/></svg>
<svg style="left:1824px;top:8px;" width="68" height="13" viewBox="0 0 68 13"><g fill="#f4f4f4"><rect x="1" y="8" width="11" height="3"/><rect x="19" y="4" width="8" height="7"/><path d="M22,0 h8 v8 h-2 v-6 h-6z"/><rect x="38" y="0" width="11" height="2"/><rect x="38" y="3" width="11" height="8"/></g><path d="M55.5,0.5 L65.5,10.5 M65.5,0.5 L55.5,10.5" stroke="#f4f4f4" stroke-width="1.8"/></svg>
<div style="left:1131px;top:26px;width:765px;height:3px;background:#f0f0f0"></div>
<div style="left:1131px;top:29px;width:765px;height:24px;background:#cbcbcb"></div>
<div style="left:1131px;top:53px;width:765px;height:1px;background:#7a7a7a"></div>
<div style="left:1131px;top:54px;width:765px;height:27px;background:#e9e9e9"></div>
<div style="left:1131px;top:81px;width:765px;height:21px;background:#d0d0d0"></div>
<span class="t" style="left:1156px;top:81.0px;height:20px;line-height:20px;font-size:13px;color:#000;font-weight:normal;letter-spacing:0.286px;-webkit-text-stroke:0.25px #000;">BOOL_TO_WORD</span>
<div style="left:1183px;top:56px;width:1px;height:23px;background:repeating-linear-gradient(#8e8e8e 0 1px,transparent 1px 3px)"></div>
<div style="left:1223px;top:56px;width:1px;height:23px;background:repeating-linear-gradient(#8e8e8e 0 1px,transparent 1px 3px)"></div>
<div style="left:1252px;top:56px;width:1px;height:23px;background:repeating-linear-gradient(#8e8e8e 0 1px,transparent 1px 3px)"></div>
<div style="left:1364px;top:56px;width:1px;height:23px;background:repeating-linear-gradient(#8e8e8e 0 1px,transparent 1px 3px)"></div>
<div style="left:1513px;top:56px;width:1px;height:23px;background:repeating-linear-gradient(#8e8e8e 0 1px,transparent 1px 3px)"></div>
<div style="left:1662px;top:56px;width:1px;height:23px;background:repeating-linear-gradient(#8e8e8e 0 1px,transparent 1px 3px)"></div>
<div style="left:1739px;top:56px;width:1px;height:23px;background:repeating-linear-gradient(#8e8e8e 0 1px,transparent 1px 3px)"></div>
<div style="left:1816px;top:56px;width:1px;height:23px;background:repeating-linear-gradient(#8e8e8e 0 1px,transparent 1px 3px)"></div>
<svg style="left:1138px;top:59px;" width="17" height="18" viewBox="0 0 17 18"><g><rect x="0" y="5" width="8" height="2" fill="#b8b8b8"/><rect x="0" y="8" width="9" height="2" fill="#bcbcbc"/><rect x="2" y="11" width="8" height="2" fill="#8c8c8c"/><rect x="0" y="14.2" width="8" height="2" fill="#bdbdbd"/></g><g stroke="#6e6e6e" stroke-width="1"><path d="M11.5,0.5 L11.5,9.5 M7,5 L16,5 M8.4,1.9 L14.6,8.1 M14.6,1.9 L8.4,8.1"/></g><circle cx="11.5" cy="5" r="1.9" fill="#f2f2f2"/></svg>
<svg style="left:1162px;top:59px;" width="17" height="18" viewBox="0 0 17 18"><g><rect x="0" y="5" width="8" height="2" fill="#b8b8b8"/><rect x="0" y="8" width="9" height="2" fill="#bcbcbc"/><rect x="0" y="11" width="8" height="2" fill="#bdbdbd"/><rect x="2" y="14.2" width="8" height="2" fill="#8c8c8c"/></g><g stroke="#6e6e6e" stroke-width="1"><path d="M11.5,0.5 L11.5,9.5 M7,5 L16,5 M8.4,1.9 L14.6,8.1 M14.6,1.9 L8.4,8.1"/></g><circle cx="11.5" cy="5" r="1.9" fill="#f2f2f2"/></svg>
<svg style="left:1190px;top:59px;" width="17" height="18" viewBox="0 0 17 18"><rect x="0.5" y="1.5" width="10" height="14" fill="#f0f0f0" stroke="#9a9a9a"/><path d="M2.5,4.5 L8,4.5 M2.5,7 L4,7 M2.5,10 L8,10 M2.5,12.5 L8,12.5" stroke="#9a9a9a" stroke-width="1"/><path d="M4,7 L11,7 L11,3.5 L16.5,8.5 L11,13.5 L11,10 L4,10 Z" fill="#7a7a7a"/></svg>
<svg style="left:1210px;top:59px;" width="8" height="18" viewBox="0 0 8 18"><path d="M3,3 L5,3 L5,7 L8,7 L4,11.2 L0,7 L3,7 Z" fill="#8a8a8a"/><rect x="0" y="12.2" width="8" height="2" fill="#8a8a8a"/></svg>
<svg style="left:1230px;top:59px;" width="17" height="18" viewBox="0 0 17 18"><defs><linearGradient id="gf" x1="0" y1="0" x2="1" y2="1"><stop offset="0" stop-color="#fff3c4"/><stop offset="1" stop-color="#f0b93a"/></linearGradient><linearGradient id="gb" x1="0" y1="0" x2="1" y2="1"><stop offset="0" stop-color="#5a6cf0"/><stop offset="1" stop-color="#1a20b8"/></linearGradient><linearGradient id="gd" x1="0" y1="0" x2="1" y2="0"><stop offset="0" stop-color="#6a7cf8"/><stop offset="1" stop-color="#1a22c0"/></linearGradient><linearGradient id="gg" x1="0" y1="0" x2="1" y2="0"><stop offset="0" stop-color="#b8b8b8"/><stop offset="1" stop-color="#6e6e6e"/></linearGradient></defs><path d="M1,3 L1,10 C1,12.3 8,12.3 8,10 L8,3 Z" fill="url(#gg)"/><ellipse cx="4.5" cy="3" rx="3.5" ry="1.8" fill="#b4b4b4"/><path d="M14,16 C16,13 14,10.5 10.5,11.5" fill="none" stroke="#8a8a8a" stroke-width="1.8"/><path d="M8.5,12 L12,9.5 L12,14 Z" fill="#8a8a8a"/></svg>
<svg style="left:1259px;top:59px;" width="18" height="18" viewBox="0 0 18 18"><defs><linearGradient id="gl" x1="0" y1="0" x2="0" y2="1"><stop offset="0" stop-color="#9a9a9a"/><stop offset="1" stop-color="#5e5e5e"/></linearGradient></defs><g fill="url(#gl)"><path d="M1,2 L6.5,2 L8,4 L17,4 L17,6 L1,6Z"/><path d="M1,7.2 L6.5,7.2 L8,9.2 L17,9.2 L17,11.2 L1,11.2Z"/><path d="M1,12.2 L6.5,12.2 L8,14.2 L17,14.2 L17,16.2 L1,16.2Z"/></g></svg>
<div style="left:1281px;top:57px;width:22px;height:22px;background:#fff;border:1px solid #3a6fd8;border-radius:2px;box-sizing:border-box"></div>
<svg style="left:1284px;top:59px;" width="17" height="18" viewBox="0 0 17 18"><defs><linearGradient id="gt" x1="0" y1="0" x2="1" y2="0"><stop offset="0" stop-color="#a880ec"/><stop offset="0.3" stop-color="#5a1cb8"/><stop offset="1" stop-color="#3c0c90"/></linearGradient></defs><path d="M3.5,4.3 L7,1 L15.6,1 L15.6,7.6 L7,7.6 Z" fill="url(#gt)"/><path d="M3.5,12.5 L7,9.2 L15.6,9.2 L15.6,16 L7,16 Z" fill="url(#gt)"/><path d="M0,4.3 L4.5,4.3 M0,12.5 L4.5,12.5" stroke="#12126a" stroke-width="1.2"/><path d="M3,2.8 L5.4,4.3 L3,5.8Z M3,11 L5.4,12.5 L3,14Z" fill="#12126a"/><rect x="8.8" y="2.6" width="2.2" height="3.4" fill="none" stroke="#fff" stroke-width="1.1"/><path d="M13.4,2 L13.4,6.6" stroke="#fff" stroke-width="1.4"/><path d="M8.4,11.4 L14,11.4 M8.4,13.7 L14,13.7" stroke="#fff" stroke-width="1.3"/></svg>
<svg style="left:1307px;top:59px;" width="17" height="18" viewBox="0 0 17 18"><path transform="translate(0.4,0.9)" d="M5.2,1 L13.4,1 C15.4,1 16,2.4 16,4 C16,5.6 15.4,7 13.6,7 L12.6,10 L10.2,7 L5.2,7 C3.4,7 2.8,5.6 2.8,4 C2.8,2.4 3.4,1 5.2,1Z" fill="#fbfbfb" stroke="#8e8e8e" stroke-width="1.2"/><rect x="5.4" y="4.1" width="2.2" height="2" fill="#000"/><rect x="8.7" y="4.1" width="2.2" height="2" fill="#000"/><rect x="12" y="4.1" width="2.2" height="2" fill="#000"/><path d="M0,12.8 L5,12.8" stroke="#000" stroke-width="1.2"/><path d="M3.2,11.4 L5.8,12.8 L3.2,14.2Z" fill="#000"/><path d="M4.6,12.8 L8,9.6 L15.6,9.6 L15.6,16.2 L8,16.2 Z" fill="#383838"/><path d="M8.6,10.6 L14.8,10.6 L14.8,12.6 L8.6,12.6Z" fill="#6e6e6e"/></svg>
<svg style="left:1327px;top:59px;" width="8" height="18" viewBox="0 0 8 18"><path d="M3,3 L5,3 L5,7 L8,7 L4,11.2 L0,7 L3,7 Z" fill="#000"/><rect x="0" y="12.2" width="8" height="2" fill="#000"/></svg>
<div style="left:1340px;top:57px;width:22px;height:22px;background:#fff;border:1px solid #3a6fd8;border-radius:2px;box-sizing:border-box"></div>
<svg style="left:1342px;top:59px;" width="18" height="18" viewBox="0 0 18 18"><g fill="none" stroke="#4a5ae0" stroke-width="1.1"><rect x="1.6" y="2.6" width="3" height="3"/><rect x="1.6" y="7.6" width="3" height="3"/><rect x="1.6" y="12.6" width="3" height="3"/></g><defs><linearGradient id="gs" x1="0" y1="0" x2="0.6" y2="1"><stop offset="0" stop-color="#fff8b0"/><stop offset="0.5" stop-color="#f6d030"/><stop offset="1" stop-color="#c89010"/></linearGradient></defs><path d="M11.4,1 L13,4.8 L17,5.1 L13.9,7.8 L14.9,11.8 L11.4,9.6 L7.9,11.8 L8.9,7.8 L5.8,5.1 L9.8,4.8 Z" fill="url(#gs)" stroke="#a87808" stroke-width="0.7"/><path d="M13.2,11.4 C13.2,14 11,14.4 8.4,14.4" fill="none" stroke="#0c0c6a" stroke-width="1.4"/><path d="M9.4,12.2 L6.6,14.4 L9.4,16.6Z" fill="#0c0c6a"/></svg>
<svg style="left:1371px;top:59px;" width="17" height="18" viewBox="0 0 17 18"><path d="M5,16 C1,12 1,7 5,4" fill="none" stroke="#0a0a5a" stroke-width="2.6"/><path d="M2.5,1.5 L9,4.5 L3.5,8.5Z" fill="#0a0a5a"/><circle cx="12.5" cy="5" r="3.6" fill="#e01a2a" stroke="#a00a1a" stroke-width="0.6"/><path d="M10.7,3.2 L14.3,6.8 M14.3,3.2 L10.7,6.8" stroke="#fff" stroke-width="1.5"/></svg>
<svg style="left:1395px;top:59px;" width="17" height="18" viewBox="0 0 17 18"><path d="M5,2 C1,6 1,11 5,14" fill="none" stroke="#0a0a5a" stroke-width="2.6"/><path d="M2.5,16.5 L9,13.5 L3.5,9.5Z" fill="#0a0a5a"/><circle cx="12.5" cy="13" r="3.6" fill="#e01a2a" stroke="#a00a1a" stroke-width="0.6"/><path d="M10.7,11.2 L14.3,14.8 M14.3,11.2 L10.7,14.8" stroke="#fff" stroke-width="1.5"/></svg>
<svg style="left:1420px;top:59px;" width="17" height="18" viewBox="0 0 17 18"><path d="M5,16 C1,13 1,9 5,6" fill="none" stroke="#5a5a5a" stroke-width="2.2"/><path d="M2.5,3.5 L8.5,6.5 L3.5,10Z" fill="#5a5a5a"/><rect x="7.5" y="1.5" width="8" height="12" fill="#b4b4b4" stroke="#9a9a9a"/><rect x="8" y="2" width="3" height="5" fill="#dcdcdc"/><rect x="8.5" y="8.5" width="6" height="4" fill="#3a3a3a"/><rect x="9.8" y="9.5" width="1.4" height="2" fill="#fff"/><rect x="12.4" y="9.5" width="1" height="2" fill="#fff"/></svg>
<svg style="left:1444px;top:59px;" width="17" height="18" viewBox="0 0 17 18"><path d="M5,2 C1,5 1,9 5,12" fill="none" stroke="#5a5a5a" stroke-width="2.2"/><path d="M2.5,14.5 L8.5,11.5 L3.5,8Z" fill="#5a5a5a"/><rect x="7.5" y="3.5" width="8" height="12" fill="#b4b4b4" stroke="#9a9a9a"/><rect x="8" y="4" width="3" height="5" fill="#dcdcdc"/><rect x="8.5" y="10.5" width="6" height="4" fill="#3a3a3a"/><rect x="9.8" y="11.5" width="1.4" height="2" fill="#fff"/><rect x="12.4" y="11.5" width="1" height="2" fill="#fff"/></svg>
<svg style="left:1468px;top:59px;" width="17" height="18" viewBox="0 0 17 18"><g fill="#a4a4a4"><rect x="0" y="3" width="4" height="1.6" fill="#8a8a8a"/><rect x="5" y="3" width="6" height="1.6" fill="#c4c4c4"/><rect x="5" y="6" width="9" height="1.6"/><rect x="6" y="9" width="10" height="1.6"/><rect x="6" y="12" width="6" height="1.6" fill="#c4c4c4"/><rect x="13" y="12" width="3" height="1.6" fill="#8a8a8a"/><rect x="6" y="15" width="9" height="1.6" fill="#c4c4c4"/></g></svg>
<svg style="left:1491px;top:59px;" width="17" height="18" viewBox="0 0 17 18"><rect x="3.5" y="1.5" width="9" height="8" fill="#3a4a5a" stroke="#2a3240"/><path d="M0.5,3.5 L3.5,3.5 M0.5,7.5 L3.5,7.5 M12.5,5.5 L16,5.5" stroke="#2a3240" stroke-width="1.4"/><path d="M6.5,3 L10.5,5.5 L6.5,8Z" fill="#e8eef4"/><path d="M5,11.5 L8,15 L15,8" fill="none" stroke="#1a9a1a" stroke-width="2.6"/></svg>
<svg style="left:1521px;top:59px;" width="17" height="18" viewBox="0 0 17 18"><path d="M5,2 C1,6 1,11 5,14" fill="none" stroke="#0a0a5a" stroke-width="2.4"/><path d="M2.5,16.5 L9,13.5 L3.5,9.5Z" fill="#0a0a5a"/><g fill="#a8acb4"><rect x="8" y="4" width="8" height="2"/><rect x="8" y="7.5" width="8" height="2"/></g><rect x="8" y="11" width="8" height="2" fill="#2a5ae8"/></svg>
<svg style="left:1545px;top:59px;" width="17" height="18" viewBox="0 0 17 18"><g fill="#b0b4bc"><rect x="0" y="2" width="16" height="2"/><rect x="0" y="15" width="16" height="2"/></g><g fill="#2a5ae8"><rect x="8" y="5.5" width="8" height="2"/><rect x="8" y="8.7" width="8" height="2"/><rect x="8" y="12" width="8" height="2"/></g><path d="M0,9.7 L5,9.7" stroke="#0a0a5a" stroke-width="2"/><path d="M4,6.5 L8,9.7 L4,13Z" fill="#0a0a5a"/></svg>
<svg style="left:1569px;top:59px;" width="17" height="18" viewBox="0 0 17 18"><g fill="#b0b4bc"><rect x="0" y="2" width="16" height="2"/><rect x="0" y="15" width="16" height="2"/></g><g fill="#2a5ae8"><rect x="8" y="5.5" width="8" height="2"/><rect x="8" y="8.7" width="8" height="2"/><rect x="8" y="12" width="8" height="2"/></g><path d="M3,9.7 L8,9.7" stroke="#0a0a5a" stroke-width="2"/><path d="M4,6.5 L0,9.7 L4,13Z" fill="#0a0a5a"/></svg>
<svg style="left:1593px;top:59px;" width="17" height="18" viewBox="0 0 17 18"><g fill="#4a6ae8" opacity="0.75"><rect x="9" y="1" width="7" height="1.6"/><rect x="9" y="4" width="7" height="1.6"/><rect x="9" y="7" width="7" height="1.6"/><rect x="9" y="10" width="7" height="1.6"/><rect x="9" y="13" width="7" height="1.6"/><rect x="9" y="16" width="7" height="1.6"/></g><g stroke="#0a0a5a" stroke-width="1.5"><path d="M0,3 L9,3 M0,8.5 L11,8.5 M0,14 L9,14 M10.5,0 L10.5,18"/></g><g fill="#0a0a5a"><path d="M5,0.5 L8.5,3 L5,5.5Z"/><path d="M5,6 L8.5,8.5 L5,11Z"/><path d="M5,11.5 L8.5,14 L5,16.5Z"/></g></svg>
<svg style="left:1617px;top:59px;" width="17" height="18" viewBox="0 0 17 18"><rect x="1.5" y="0.5" width="2" height="9" fill="#0a0a5a"/><g fill="#2a5ae8"><rect x="7" y="7.5" width="8" height="2"/><rect x="7" y="10.8" width="8" height="2"/><rect x="7" y="14.1" width="8" height="2"/></g></svg>
<svg style="left:1640px;top:59px;" width="17" height="18" viewBox="0 0 17 18"><rect x="3.5" y="3" width="2" height="6" fill="#0a0a5a"/><g fill="#2a5ae8"><rect x="8" y="8" width="8" height="2"/><rect x="8" y="11.3" width="8" height="2"/><rect x="8" y="14.6" width="8" height="2"/></g><path d="M0,0 L8,8" stroke="#e01a2a" stroke-width="1.8"/></svg>
<svg style="left:1670px;top:59px;" width="17" height="18" viewBox="0 0 17 18"><defs><linearGradient id="gbm" x1="0" y1="0" x2="1" y2="0"><stop offset="0" stop-color="#5a7af8"/><stop offset="1" stop-color="#0a1ab8"/></linearGradient></defs><path d="M0.5,0.5 L6.0,0.5 L6.0,15.5 L3.25,12.5 L0.5,15.5 Z" fill="url(#gbm)"/><g stroke="#e8e01a" stroke-width="1.4"><path d="M11.5,0 L11.5,9 M7,4.5 L16,4.5 M8.3,1.3 L14.7,7.7 M14.7,1.3 L8.3,7.7"/></g></svg>
<svg style="left:1694px;top:59px;" width="17" height="18" viewBox="0 0 17 18"><defs><linearGradient id="gbm" x1="0" y1="0" x2="1" y2="0"><stop offset="0" stop-color="#5a7af8"/><stop offset="1" stop-color="#0a1ab8"/></linearGradient></defs><path d="M7.5,3.5 L13.0,3.5 L13.0,15.5 L10.25,12.5 L7.5,15.5 Z" fill="url(#gbm)"/><path d="M6,1.5 C1,3 0.5,9 4.5,11.5" fill="none" stroke="#0a0a5a" stroke-width="2.4"/><path d="M2,14 L8,12 L4,7.5Z" fill="#0a0a5a"/></svg>
<svg style="left:1718px;top:59px;" width="17" height="18" viewBox="0 0 17 18"><defs><linearGradient id="gbm" x1="0" y1="0" x2="1" y2="0"><stop offset="0" stop-color="#5a7af8"/><stop offset="1" stop-color="#0a1ab8"/></linearGradient></defs><path d="M9,0.5 L14.5,0.5 L14.5,12.5 L11.75,9.5 L9,12.5 Z" fill="url(#gbm)"/><path d="M6,15 C1,13 0.5,8 4.5,5" fill="none" stroke="#0a0a5a" stroke-width="2.4"/><path d="M2,2.5 L8.5,4.5 L4,9Z" fill="#0a0a5a"/></svg>
<svg style="left:1746px;top:59px;" width="17" height="18" viewBox="0 0 17 18"><circle cx="9.5" cy="4.5" r="3.5" fill="#f4f4f4" stroke="#8a8a8a" stroke-width="1.3"/><path d="M12,7.5 L16,12" stroke="#8a8a8a" stroke-width="2"/><circle cx="5" cy="12" r="4.5" fill="#b4b4b4"/><path d="M5,7.5 A4.5,4.5 0 0 0 5,16.5Z" fill="#8a8a8a"/></svg>
<svg style="left:1771px;top:59px;" width="17" height="18" viewBox="0 0 17 18"><g fill="none" stroke="#7a7a7a" stroke-width="1.3"><rect x="1" y="1.5" width="5" height="4" rx="1"/><rect x="8.5" y="1.5" width="5" height="4" rx="1"/><path d="M6,3.5 L8.5,3.5 M13.5,2.5 C15.5,2 16.5,3.5 16,5"/></g><path d="M8,9 L15,12.5 L8,16Z" fill="#dcdcdc" stroke="#a8a8a8" stroke-width="0.8"/></svg>
<svg style="left:1795px;top:59px;" width="17" height="18" viewBox="0 0 17 18"><g fill="none" stroke="#7a7a7a" stroke-width="1.3"><rect x="1" y="1.5" width="5" height="4" rx="1"/><rect x="8.5" y="1.5" width="5" height="4" rx="1"/><path d="M6,3.5 L8.5,3.5 M13.5,2.5 C15.5,2 16.5,3.5 16,5"/></g><path d="M0,12.5 L7,12.5 M6.5,9.5 L6.5,15.5" stroke="#8a8a8a" stroke-width="1"/><path d="M8.5,9.5 L15,12.5 L8.5,15.5Z" fill="#e0e0e0" stroke="#a8a8a8" stroke-width="0.8"/></svg>
<svg style="left:1823px;top:59px;" width="17" height="18" viewBox="0 0 17 18"><defs><linearGradient id="gf" x1="0" y1="0" x2="1" y2="1"><stop offset="0" stop-color="#fff3c4"/><stop offset="1" stop-color="#f0b93a"/></linearGradient><linearGradient id="gb" x1="0" y1="0" x2="1" y2="1"><stop offset="0" stop-color="#5a6cf0"/><stop offset="1" stop-color="#1a20b8"/></linearGradient><linearGradient id="gd" x1="0" y1="0" x2="1" y2="0"><stop offset="0" stop-color="#6a7cf8"/><stop offset="1" stop-color="#1a22c0"/></linearGradient><linearGradient id="gg" x1="0" y1="0" x2="1" y2="0"><stop offset="0" stop-color="#b8b8b8"/><stop offset="1" stop-color="#6e6e6e"/></linearGradient></defs><path d="M0.5,3 L0.5,13 C0.5,16 9.5,16 9.5,13 L9.5,3 Z" fill="#c4c4c4" stroke="#a4a4a4" stroke-width="0.6"/><ellipse cx="5" cy="3" rx="4.5" ry="2.2" fill="#e0e0e0" stroke="#a4a4a4" stroke-width="0.6"/><rect x="10.5" y="11.5" width="5" height="5" fill="#f4f4f4" stroke="#7a7a7a" stroke-width="1.2"/><path d="M11.5,11.5 L11.5,9.8 C11.5,8 14.5,8 14.5,9.8 L14.5,11.5" fill="none" stroke="#7a7a7a" stroke-width="1.1"/></svg>
<svg style="left:1864px;top:59px;" width="17" height="18" viewBox="0 0 17 18"><g transform="translate(0,1.5) scale(0.92)"><rect x="0.5" y="0.5" width="13" height="13" fill="#f8f9ff" stroke="#8a94e0"/><rect x="0.5" y="0.5" width="13" height="2.5" fill="#2a3ab8"/><path d="M1,6.5 L13,6.5" stroke="#b4bcec" stroke-width="1"/><circle cx="12.5" cy="8.5" r="2.3" fill="#f0b070" stroke="#8a5a2a" stroke-width="0.5"/><path d="M8.5,15.5 C8.5,10.5 16.5,10.5 16.5,15.5Z" fill="#1a6ad8" stroke="#0a3a8a" stroke-width="0.5"/></g></svg>
<div style="left:1131px;top:102px;width:765px;height:1px;background:#a8a8a8"></div>
<div style="left:1131px;top:103px;width:765px;height:17px;background:linear-gradient(#ececec,#dadada 55%,#e6e6e6)"></div>
<div style="left:1175px;top:103px;width:169px;height:17px;background:linear-gradient(#eef2f8,#d9e0ea 55%,#e6ebf2)"></div>
<div style="left:1131px;top:120px;width:765px;height:1px;background:#b4b4b4"></div>
<div style="left:1131px;top:121px;width:765px;height:232px;background:#fbfbfb"></div>
<div style="left:1155px;top:103px;width:1px;height:17px;background:#b4b4b4"></div>
<div style="left:1156px;top:103px;width:1px;height:17px;background:#f2f2f2"></div>
<div style="left:1174px;top:103px;width:1px;height:17px;background:#b4b4b4"></div>
<div style="left:1175px;top:103px;width:1px;height:17px;background:#f2f2f2"></div>
<div style="left:1344px;top:103px;width:1px;height:17px;background:#b4b4b4"></div>
<div style="left:1345px;top:103px;width:1px;height:17px;background:#f2f2f2"></div>
<div style="left:1464px;top:103px;width:1px;height:17px;background:#b4b4b4"></div>
<div style="left:1465px;top:103px;width:1px;height:17px;background:#f2f2f2"></div>
<div style="left:1524px;top:103px;width:1px;height:17px;background:#b4b4b4"></div>
<div style="left:1525px;top:103px;width:1px;height:17px;background:#f2f2f2"></div>
<div style="left:1624px;top:103px;width:1px;height:17px;background:#b4b4b4"></div>
<div style="left:1625px;top:103px;width:1px;height:17px;background:#f2f2f2"></div>
<div style="left:1704px;top:103px;width:1px;height:17px;background:#b4b4b4"></div>
<div style="left:1705px;top:103px;width:1px;height:17px;background:#f2f2f2"></div>
<div style="left:1754px;top:103px;width:1px;height:17px;background:#b4b4b4"></div>
<div style="left:1755px;top:103px;width:1px;height:17px;background:#f2f2f2"></div>
<div style="left:1824px;top:103px;width:1px;height:17px;background:#b4b4b4"></div>
<div style="left:1825px;top:103px;width:1px;height:17px;background:#f2f2f2"></div>
<div style="left:1878px;top:103px;width:1px;height:17px;background:#b4b4b4"></div>
<div style="left:1879px;top:103px;width:1px;height:17px;background:#f2f2f2"></div>
<span class="t" style="left:1179px;top:101.3px;height:20px;line-height:20px;font-size:12.5px;color:#000;font-weight:normal;letter-spacing:0.000px;-webkit-text-stroke:0.2px #000;">名称</span>
<span class="t" style="left:1349px;top:101.3px;height:20px;line-height:20px;font-size:12.5px;color:#000;font-weight:normal;letter-spacing:0.375px;-webkit-text-stroke:0.2px #000;">数据类型</span>
<span class="t" style="left:1469px;top:101.3px;height:20px;line-height:20px;font-size:12.5px;color:#000;font-weight:normal;letter-spacing:0.333px;-webkit-text-stroke:0.2px #000;">偏移量</span>
<span class="t" style="left:1529px;top:101.3px;height:20px;line-height:20px;font-size:12.5px;color:#000;font-weight:normal;letter-spacing:0.333px;-webkit-text-stroke:0.2px #000;">默认值</span>
<span class="t" style="left:1629px;top:101.3px;height:20px;line-height:20px;font-size:12.5px;color:#000;font-weight:normal;letter-spacing:0.000px;-webkit-text-stroke:0.2px #000;">可从</span>
<span class="t" style="left:1658.5px;top:102.0px;height:20px;line-height:20px;font-size:11.5px;color:#1c0c34;font-weight:normal;transform:scaleX(0.9742);transform-origin:0 50%;">HMI/...</span>
<span class="t" style="left:1709px;top:101.3px;height:20px;line-height:20px;font-size:12.5px;color:#000;font-weight:normal;letter-spacing:0.000px;-webkit-text-stroke:0.2px #000;">从</span>
<span class="t" style="left:1725.3px;top:102.0px;height:20px;line-height:20px;font-size:11.5px;color:#1c0c34;font-weight:normal;transform:scaleX(0.9223);transform-origin:0 50%;">H...</span>
<span class="t" style="left:1759px;top:101.3px;height:20px;line-height:20px;font-size:12.5px;color:#000;font-weight:normal;letter-spacing:0.000px;-webkit-text-stroke:0.2px #000;">在</span>
<span class="t" style="left:1775.5px;top:102.0px;height:20px;line-height:20px;font-size:11.5px;color:#1c0c34;font-weight:normal;transform:scaleX(0.9187);transform-origin:0 50%;word-spacing:1.5px;">HMI ...</span>
<span class="t" style="left:1829px;top:101.3px;height:20px;line-height:20px;font-size:12.5px;color:#000;font-weight:normal;letter-spacing:0.333px;-webkit-text-stroke:0.2px #000;">设定值</span>
<div style="left:1131px;top:122px;width:24px;height:18px;background:#c8c8c8"></div>
<div style="left:1155px;top:122px;width:1px;height:18px;background:#b6b6b6"></div>
<div style="left:1156px;top:122px;width:18px;height:18px;background:#e3e3e3"></div>
<div style="left:1175px;top:122px;width:169px;height:18px;background:#e3e3e3"></div>
<div style="left:1345px;top:122px;width:119px;height:18px;background:#e3e3e3"></div>
<div style="left:1465px;top:122px;width:59px;height:18px;background:#e3e3e3"></div>
<div style="left:1525px;top:122px;width:99px;height:18px;background:#e3e3e3"></div>
<div style="left:1625px;top:122px;width:79px;height:18px;background:#e3e3e3"></div>
<div style="left:1705px;top:122px;width:49px;height:18px;background:#e3e3e3"></div>
<div style="left:1755px;top:122px;width:69px;height:18px;background:#e3e3e3"></div>
<div style="left:1825px;top:122px;width:71px;height:18px;background:#e3e3e3"></div>
<span class="t" style="left:1134.3px;top:121.0px;height:20px;line-height:20px;font-size:12px;color:#727272;font-weight:normal;">1</span>
<svg style="left:1156.7px;top:127px;" width="16" height="10" viewBox="0 0 16 10"><path d="M2.2,4.7 L6.6,0.2 L15.2,0.2 L15.2,9.4 L6.6,9.4 Z" fill="#0c58a8"/><path d="M2.6,4.5 L6.8,0.3 L14.6,0.3 L14.6,8.6 L6.8,8.6 Z" fill="#1f97ea"/><path d="M3.4,4.2 L7,0.8 L14.2,0.8" fill="none" stroke="#74c8fa" stroke-width="0.9"/><path d="M0,4.6 L5.6,4.6" stroke="#0a2468" stroke-width="1.2"/><rect x="8.2" y="2.2" width="2.5" height="4.6" fill="none" stroke="#fff" stroke-width="1.25"/><path d="M12.9,1.6 L12.9,7.4" stroke="#fff" stroke-width="1.6"/></svg>
<svg style="left:1180px;top:128px;" width="9" height="5" viewBox="0 0 9 5"><path d="M0,0 L8.6,0 L4.3,4.4 Z" fill="#000"/></svg>
<span class="t" style="left:1198px;top:121.0px;height:20px;line-height:20px;font-size:12px;color:#000;font-weight:normal;letter-spacing:0.259px;-webkit-text-stroke:0.15px #000;">Input</span>
<div style="left:1657.0px;top:123px;width:15px;height:15px;border:1px solid #bcbcbc;border-radius:3px;background:linear-gradient(#fdfdfd 0%,#f2f2f2 48%,#e8e8e8 52%,#f4f4f4 100%);box-sizing:border-box"></div>
<div style="left:1722.0px;top:123px;width:15px;height:15px;border:1px solid #bcbcbc;border-radius:3px;background:linear-gradient(#fdfdfd 0%,#f2f2f2 48%,#e8e8e8 52%,#f4f4f4 100%);box-sizing:border-box"></div>
<div style="left:1782.0px;top:123px;width:15px;height:15px;border:1px solid #bcbcbc;border-radius:3px;background:linear-gradient(#fdfdfd 0%,#f2f2f2 48%,#e8e8e8 52%,#f4f4f4 100%);box-sizing:border-box"></div>
<div style="left:1852.0px;top:123px;width:15px;height:15px;border:1px solid #bcbcbc;border-radius:3px;background:linear-gradient(#fdfdfd 0%,#f2f2f2 48%,#e8e8e8 52%,#f4f4f4 100%);box-sizing:border-box"></div>
<div style="left:1131px;top:141px;width:24px;height:18px;background:#b9c5d2"></div>
<div style="left:1155px;top:141px;width:1px;height:18px;background:#aab4c0"></div>
<div style="left:1156px;top:141px;width:18px;height:18px;background:#e3e3e3"></div>
<div style="left:1175px;top:141px;width:169px;height:18px;background:#f0f0f0"></div>
<div style="left:1175px;top:141px;width:18px;height:18px;background:#eaeaea"></div>
<div style="left:1345px;top:141px;width:119px;height:18px;background:#f0f0f0"></div>
<div style="left:1465px;top:141px;width:59px;height:18px;background:#e3e3e3"></div>
<div style="left:1525px;top:141px;width:99px;height:18px;background:#e3e3e3"></div>
<div style="left:1625px;top:141px;width:79px;height:18px;background:#f0f0f0"></div>
<div style="left:1705px;top:141px;width:49px;height:18px;background:#f0f0f0"></div>
<div style="left:1755px;top:141px;width:69px;height:18px;background:#f0f0f0"></div>
<div style="left:1825px;top:141px;width:71px;height:18px;background:#e3e3e3"></div>
<div style="left:1193px;top:141px;width:151px;height:18px;background:#fff"></div>
<div style="left:1174px;top:140px;width:171px;height:20px;border:1px solid #b4c4d8;box-sizing:border-box"></div>
<div style="left:1342px;top:157px;width:4px;height:4px;background:#c4cedc"></div>
<span class="t" style="left:1134.3px;top:140.0px;height:20px;line-height:20px;font-size:12px;color:#727272;font-weight:normal;">2</span>
<svg style="left:1156.7px;top:146px;" width="16" height="10" viewBox="0 0 16 10"><path d="M2.2,4.7 L6.6,0.2 L15.2,0.2 L15.2,9.4 L6.6,9.4 Z" fill="#0c58a8"/><path d="M2.6,4.5 L6.8,0.3 L14.6,0.3 L14.6,8.6 L6.8,8.6 Z" fill="#1f97ea"/><path d="M3.4,4.2 L7,0.8 L14.2,0.8" fill="none" stroke="#74c8fa" stroke-width="0.9"/><path d="M0,4.6 L5.6,4.6" stroke="#0a2468" stroke-width="1.2"/><rect x="8.2" y="2.2" width="2.5" height="4.6" fill="none" stroke="#fff" stroke-width="1.25"/><path d="M12.9,1.6 L12.9,7.4" stroke="#fff" stroke-width="1.6"/></svg>
<div style="left:1180px;top:147px;width:5px;height:5px;background:linear-gradient(135deg,#4a66e0,#1a2fb8)"></div>
<svg style="left:1200px;top:145px;" width="5" height="9" viewBox="0 0 5 9"><path d="M0,0 L5,4.5 L0,9 Z" fill="#000"/></svg>
<span class="t" style="left:1216px;top:140.0px;height:20px;line-height:20px;font-size:12px;color:#000;font-weight:normal;transform:scaleX(0.7485);transform-origin:0 50%;-webkit-text-stroke:0.15px #000;">B</span>
<span class="t" style="left:1349px;top:140.0px;height:20px;line-height:20px;font-size:12px;color:#000;font-weight:normal;transform:scaleX(0.9818);transform-origin:0 50%;-webkit-text-stroke:0.15px #000;">Array[0..15] ...</span>
<span class="t" style="left:1469px;top:140.0px;height:20px;line-height:20px;font-size:12px;color:#000;font-weight:normal;transform:scaleX(0.9588);transform-origin:0 50%;-webkit-text-stroke:0.15px #000;">0.0</span>
<div style="left:1657.0px;top:142px;width:15px;height:15px;border:1px solid #4a4e58;border-radius:3px;background:linear-gradient(#e6eefc 0%,#c4d8f6 30%,#6cb0e6 55%,#36c4ea 80%,#78eef8 100%);box-sizing:border-box;box-shadow:inset 0 0 0 1px #2c5cb4"></div>
<svg style="left:1657.0px;top:142px;" width="15" height="15" viewBox="0 0 15 15"><path d="M3.2,6.3 L6.3,9.2 L11.9,3 L11.9,6.2 L6.3,12 L3.2,9.2 Z" fill="#0b3790"/></svg>
<div style="left:1722.0px;top:142px;width:15px;height:15px;border:1px solid #4a4e58;border-radius:3px;background:linear-gradient(#e6eefc 0%,#c4d8f6 30%,#6cb0e6 55%,#36c4ea 80%,#78eef8 100%);box-sizing:border-box;box-shadow:inset 0 0 0 1px #2c5cb4"></div>
<svg style="left:1722.0px;top:142px;" width="15" height="15" viewBox="0 0 15 15"><path d="M3.2,6.3 L6.3,9.2 L11.9,3 L11.9,6.2 L6.3,12 L3.2,9.2 Z" fill="#0b3790"/></svg>
<div style="left:1782.0px;top:142px;width:15px;height:15px;border:1px solid #4a4e58;border-radius:3px;background:linear-gradient(#e6eefc 0%,#c4d8f6 30%,#6cb0e6 55%,#36c4ea 80%,#78eef8 100%);box-sizing:border-box;box-shadow:inset 0 0 0 1px #2c5cb4"></div>
<svg style="left:1782.0px;top:142px;" width="15" height="15" viewBox="0 0 15 15"><path d="M3.2,6.3 L6.3,9.2 L11.9,3 L11.9,6.2 L6.3,12 L3.2,9.2 Z" fill="#0b3790"/></svg>
<div style="left:1852.0px;top:142px;width:15px;height:15px;border:1px solid #bcbcbc;border-radius:3px;background:linear-gradient(#fdfdfd 0%,#f2f2f2 48%,#e8e8e8 52%,#f4f4f4 100%);box-sizing:border-box"></div>
<div style="left:1131px;top:160px;width:24px;height:18px;background:#c8c8c8"></div>
<div style="left:1155px;top:160px;width:1px;height:18px;background:#b6b6b6"></div>
<div style="left:1156px;top:160px;width:18px;height:18px;background:#f0f0f0"></div>
<div style="left:1175px;top:160px;width:169px;height:18px;background:#f0f0f0"></div>
<div style="left:1175px;top:160px;width:18px;height:18px;background:#eaeaea"></div>
<div style="left:1345px;top:160px;width:119px;height:18px;background:#f0f0f0"></div>
<div style="left:1465px;top:160px;width:59px;height:18px;background:#e3e3e3"></div>
<div style="left:1525px;top:160px;width:99px;height:18px;background:#e3e3e3"></div>
<div style="left:1625px;top:160px;width:79px;height:18px;background:#e3e3e3"></div>
<div style="left:1705px;top:160px;width:49px;height:18px;background:#e3e3e3"></div>
<div style="left:1755px;top:160px;width:69px;height:18px;background:#e3e3e3"></div>
<div style="left:1825px;top:160px;width:71px;height:18px;background:#e3e3e3"></div>
<span class="t" style="left:1134.3px;top:159.0px;height:20px;line-height:20px;font-size:12px;color:#727272;font-weight:normal;">3</span>
<div style="left:1180px;top:166px;width:5px;height:5px;background:linear-gradient(135deg,#4a66e0,#1a2fb8)"></div>
<span class="t" style="left:1216px;top:159.5px;height:20px;line-height:20px;font-size:12px;color:#7a7a7a;font-weight:normal;transform:scaleX(0.9470);transform-origin:0 50%;-webkit-text-stroke:0.2px #7a7a7a;">&lt;新增&gt;</span>
<div style="left:1657.0px;top:161px;width:15px;height:15px;border:1px solid #bcbcbc;border-radius:3px;background:linear-gradient(#fdfdfd 0%,#f2f2f2 48%,#e8e8e8 52%,#f4f4f4 100%);box-sizing:border-box"></div>
<div style="left:1722.0px;top:161px;width:15px;height:15px;border:1px solid #bcbcbc;border-radius:3px;background:linear-gradient(#fdfdfd 0%,#f2f2f2 48%,#e8e8e8 52%,#f4f4f4 100%);box-sizing:border-box"></div>
<div style="left:1782.0px;top:161px;width:15px;height:15px;border:1px solid #bcbcbc;border-radius:3px;background:linear-gradient(#fdfdfd 0%,#f2f2f2 48%,#e8e8e8 52%,#f4f4f4 100%);box-sizing:border-box"></div>
<div style="left:1852.0px;top:161px;width:15px;height:15px;border:1px solid #bcbcbc;border-radius:3px;background:linear-gradient(#fdfdfd 0%,#f2f2f2 48%,#e8e8e8 52%,#f4f4f4 100%);box-sizing:border-box"></div>
<div style="left:1131px;top:179px;width:24px;height:18px;background:#c8c8c8"></div>
<div style="left:1155px;top:179px;width:1px;height:18px;background:#b6b6b6"></div>
<div style="left:1156px;top:179px;width:18px;height:18px;background:#e3e3e3"></div>
<div style="left:1175px;top:179px;width:169px;height:18px;background:#e3e3e3"></div>
<div style="left:1345px;top:179px;width:119px;height:18px;background:#e3e3e3"></div>
<div style="left:1465px;top:179px;width:59px;height:18px;background:#e3e3e3"></div>
<div style="left:1525px;top:179px;width:99px;height:18px;background:#e3e3e3"></div>
<div style="left:1625px;top:179px;width:79px;height:18px;background:#e3e3e3"></div>
<div style="left:1705px;top:179px;width:49px;height:18px;background:#e3e3e3"></div>
<div style="left:1755px;top:179px;width:69px;height:18px;background:#e3e3e3"></div>
<div style="left:1825px;top:179px;width:71px;height:18px;background:#e3e3e3"></div>
<span class="t" style="left:1134.3px;top:178.0px;height:20px;line-height:20px;font-size:12px;color:#727272;font-weight:normal;">4</span>
<svg style="left:1156.7px;top:184px;" width="16" height="10" viewBox="0 0 16 10"><path d="M2.2,4.7 L6.6,0.2 L15.2,0.2 L15.2,9.4 L6.6,9.4 Z" fill="#0c58a8"/><path d="M2.6,4.5 L6.8,0.3 L14.6,0.3 L14.6,8.6 L6.8,8.6 Z" fill="#1f97ea"/><path d="M3.4,4.2 L7,0.8 L14.2,0.8" fill="none" stroke="#74c8fa" stroke-width="0.9"/><path d="M0,4.6 L5.6,4.6" stroke="#0a2468" stroke-width="1.2"/><rect x="8.2" y="2.2" width="2.5" height="4.6" fill="none" stroke="#fff" stroke-width="1.25"/><path d="M12.9,1.6 L12.9,7.4" stroke="#fff" stroke-width="1.6"/></svg>
<svg style="left:1180px;top:185px;" width="9" height="5" viewBox="0 0 9 5"><path d="M0,0 L8.6,0 L4.3,4.4 Z" fill="#000"/></svg>
<span class="t" style="left:1198px;top:178.0px;height:20px;line-height:20px;font-size:12px;color:#000;font-weight:normal;letter-spacing:0.328px;-webkit-text-stroke:0.15px #000;">Output</span>
<div style="left:1657.0px;top:180px;width:15px;height:15px;border:1px solid #bcbcbc;border-radius:3px;background:linear-gradient(#fdfdfd 0%,#f2f2f2 48%,#e8e8e8 52%,#f4f4f4 100%);box-sizing:border-box"></div>
<div style="left:1722.0px;top:180px;width:15px;height:15px;border:1px solid #bcbcbc;border-radius:3px;background:linear-gradient(#fdfdfd 0%,#f2f2f2 48%,#e8e8e8 52%,#f4f4f4 100%);box-sizing:border-box"></div>
<div style="left:1782.0px;top:180px;width:15px;height:15px;border:1px solid #bcbcbc;border-radius:3px;background:linear-gradient(#fdfdfd 0%,#f2f2f2 48%,#e8e8e8 52%,#f4f4f4 100%);box-sizing:border-box"></div>
<div style="left:1852.0px;top:180px;width:15px;height:15px;border:1px solid #bcbcbc;border-radius:3px;background:linear-gradient(#fdfdfd 0%,#f2f2f2 48%,#e8e8e8 52%,#f4f4f4 100%);box-sizing:border-box"></div>
<div style="left:1131px;top:198px;width:24px;height:18px;background:#c8c8c8"></div>
<div style="left:1155px;top:198px;width:1px;height:18px;background:#b6b6b6"></div>
<div style="left:1156px;top:198px;width:18px;height:18px;background:#e3e3e3"></div>
<div style="left:1175px;top:198px;width:169px;height:18px;background:#f0f0f0"></div>
<div style="left:1175px;top:198px;width:18px;height:18px;background:#eaeaea"></div>
<div style="left:1345px;top:198px;width:119px;height:18px;background:#f0f0f0"></div>
<div style="left:1465px;top:198px;width:59px;height:18px;background:#e3e3e3"></div>
<div style="left:1525px;top:198px;width:99px;height:18px;background:#f0f0f0"></div>
<div style="left:1625px;top:198px;width:79px;height:18px;background:#f0f0f0"></div>
<div style="left:1705px;top:198px;width:49px;height:18px;background:#f0f0f0"></div>
<div style="left:1755px;top:198px;width:69px;height:18px;background:#f0f0f0"></div>
<div style="left:1825px;top:198px;width:71px;height:18px;background:#e3e3e3"></div>
<span class="t" style="left:1134.3px;top:197.0px;height:20px;line-height:20px;font-size:12px;color:#727272;font-weight:normal;">5</span>
<svg style="left:1156.7px;top:203px;" width="16" height="10" viewBox="0 0 16 10"><path d="M2.2,4.7 L6.6,0.2 L15.2,0.2 L15.2,9.4 L6.6,9.4 Z" fill="#0c58a8"/><path d="M2.6,4.5 L6.8,0.3 L14.6,0.3 L14.6,8.6 L6.8,8.6 Z" fill="#1f97ea"/><path d="M3.4,4.2 L7,0.8 L14.2,0.8" fill="none" stroke="#74c8fa" stroke-width="0.9"/><path d="M0,4.6 L5.6,4.6" stroke="#0a2468" stroke-width="1.2"/><rect x="8.2" y="2.2" width="2.5" height="4.6" fill="none" stroke="#fff" stroke-width="1.25"/><path d="M12.9,1.6 L12.9,7.4" stroke="#fff" stroke-width="1.6"/></svg>
<div style="left:1180px;top:204px;width:5px;height:5px;background:linear-gradient(135deg,#4a66e0,#1a2fb8)"></div>
<span class="t" style="left:1216px;top:197.0px;height:20px;line-height:20px;font-size:12px;color:#000;font-weight:normal;transform:scaleX(0.9710);transform-origin:0 50%;-webkit-text-stroke:0.15px #000;">W</span>
<span class="t" style="left:1349px;top:197.0px;height:20px;line-height:20px;font-size:12px;color:#000;font-weight:normal;transform:scaleX(0.9138);transform-origin:0 50%;-webkit-text-stroke:0.15px #000;">Word</span>
<span class="t" style="left:1469px;top:197.0px;height:20px;line-height:20px;font-size:12px;color:#000;font-weight:normal;transform:scaleX(0.9588);transform-origin:0 50%;-webkit-text-stroke:0.15px #000;">2.0</span>
<span class="t" style="left:1530px;top:197.0px;height:20px;line-height:20px;font-size:12px;color:#7a7a7a;font-weight:normal;letter-spacing:0.324px;">16#0</span>
<div style="left:1657.0px;top:199px;width:15px;height:15px;border:1px solid #4a4e58;border-radius:3px;background:linear-gradient(#e6eefc 0%,#c4d8f6 30%,#6cb0e6 55%,#36c4ea 80%,#78eef8 100%);box-sizing:border-box;box-shadow:inset 0 0 0 1px #2c5cb4"></div>
<svg style="left:1657.0px;top:199px;" width="15" height="15" viewBox="0 0 15 15"><path d="M3.2,6.3 L6.3,9.2 L11.9,3 L11.9,6.2 L6.3,12 L3.2,9.2 Z" fill="#0b3790"/></svg>
<div style="left:1722.0px;top:199px;width:15px;height:15px;border:1px solid #4a4e58;border-radius:3px;background:linear-gradient(#e6eefc 0%,#c4d8f6 30%,#6cb0e6 55%,#36c4ea 80%,#78eef8 100%);box-sizing:border-box;box-shadow:inset 0 0 0 1px #2c5cb4"></div>
<svg style="left:1722.0px;top:199px;" width="15" height="15" viewBox="0 0 15 15"><path d="M3.2,6.3 L6.3,9.2 L11.9,3 L11.9,6.2 L6.3,12 L3.2,9.2 Z" fill="#0b3790"/></svg>
<div style="left:1782.0px;top:199px;width:15px;height:15px;border:1px solid #4a4e58;border-radius:3px;background:linear-gradient(#e6eefc 0%,#c4d8f6 30%,#6cb0e6 55%,#36c4ea 80%,#78eef8 100%);box-sizing:border-box;box-shadow:inset 0 0 0 1px #2c5cb4"></div>
<svg style="left:1782.0px;top:199px;" width="15" height="15" viewBox="0 0 15 15"><path d="M3.2,6.3 L6.3,9.2 L11.9,3 L11.9,6.2 L6.3,12 L3.2,9.2 Z" fill="#0b3790"/></svg>
<div style="left:1852.0px;top:199px;width:15px;height:15px;border:1px solid #bcbcbc;border-radius:3px;background:linear-gradient(#fdfdfd 0%,#f2f2f2 48%,#e8e8e8 52%,#f4f4f4 100%);box-sizing:border-box"></div>
<div style="left:1131px;top:217px;width:24px;height:18px;background:#c8c8c8"></div>
<div style="left:1155px;top:217px;width:1px;height:18px;background:#b6b6b6"></div>
<div style="left:1156px;top:217px;width:18px;height:18px;background:#f0f0f0"></div>
<div style="left:1175px;top:217px;width:169px;height:18px;background:#f0f0f0"></div>
<div style="left:1175px;top:217px;width:18px;height:18px;background:#eaeaea"></div>
<div style="left:1345px;top:217px;width:119px;height:18px;background:#f0f0f0"></div>
<div style="left:1465px;top:217px;width:59px;height:18px;background:#e3e3e3"></div>
<div style="left:1525px;top:217px;width:99px;height:18px;background:#e3e3e3"></div>
<div style="left:1625px;top:217px;width:79px;height:18px;background:#e3e3e3"></div>
<div style="left:1705px;top:217px;width:49px;height:18px;background:#e3e3e3"></div>
<div style="left:1755px;top:217px;width:69px;height:18px;background:#e3e3e3"></div>
<div style="left:1825px;top:217px;width:71px;height:18px;background:#e3e3e3"></div>
<span class="t" style="left:1134.3px;top:216.0px;height:20px;line-height:20px;font-size:12px;color:#727272;font-weight:normal;">6</span>
<div style="left:1180px;top:223px;width:5px;height:5px;background:linear-gradient(135deg,#4a66e0,#1a2fb8)"></div>
<span class="t" style="left:1216px;top:216.5px;height:20px;line-height:20px;font-size:12px;color:#7a7a7a;font-weight:normal;transform:scaleX(0.9470);transform-origin:0 50%;-webkit-text-stroke:0.2px #7a7a7a;">&lt;新增&gt;</span>
<div style="left:1657.0px;top:218px;width:15px;height:15px;border:1px solid #bcbcbc;border-radius:3px;background:linear-gradient(#fdfdfd 0%,#f2f2f2 48%,#e8e8e8 52%,#f4f4f4 100%);box-sizing:border-box"></div>
<div style="left:1722.0px;top:218px;width:15px;height:15px;border:1px solid #bcbcbc;border-radius:3px;background:linear-gradient(#fdfdfd 0%,#f2f2f2 48%,#e8e8e8 52%,#f4f4f4 100%);box-sizing:border-box"></div>
<div style="left:1782.0px;top:218px;width:15px;height:15px;border:1px solid #bcbcbc;border-radius:3px;background:linear-gradient(#fdfdfd 0%,#f2f2f2 48%,#e8e8e8 52%,#f4f4f4 100%);box-sizing:border-box"></div>
<div style="left:1852.0px;top:218px;width:15px;height:15px;border:1px solid #bcbcbc;border-radius:3px;background:linear-gradient(#fdfdfd 0%,#f2f2f2 48%,#e8e8e8 52%,#f4f4f4 100%);box-sizing:border-box"></div>
<div style="left:1131px;top:236px;width:24px;height:18px;background:#c8c8c8"></div>
<div style="left:1155px;top:236px;width:1px;height:18px;background:#b6b6b6"></div>
<div style="left:1156px;top:236px;width:18px;height:18px;background:#e3e3e3"></div>
<div style="left:1175px;top:236px;width:169px;height:18px;background:#e3e3e3"></div>
<div style="left:1345px;top:236px;width:119px;height:18px;background:#e3e3e3"></div>
<div style="left:1465px;top:236px;width:59px;height:18px;background:#e3e3e3"></div>
<div style="left:1525px;top:236px;width:99px;height:18px;background:#e3e3e3"></div>
<div style="left:1625px;top:236px;width:79px;height:18px;background:#e3e3e3"></div>
<div style="left:1705px;top:236px;width:49px;height:18px;background:#e3e3e3"></div>
<div style="left:1755px;top:236px;width:69px;height:18px;background:#e3e3e3"></div>
<div style="left:1825px;top:236px;width:71px;height:18px;background:#e3e3e3"></div>
<span class="t" style="left:1134.3px;top:235.0px;height:20px;line-height:20px;font-size:12px;color:#727272;font-weight:normal;">7</span>
<svg style="left:1156.7px;top:241px;" width="16" height="10" viewBox="0 0 16 10"><path d="M2.2,4.7 L6.6,0.2 L15.2,0.2 L15.2,9.4 L6.6,9.4 Z" fill="#0c58a8"/><path d="M2.6,4.5 L6.8,0.3 L14.6,0.3 L14.6,8.6 L6.8,8.6 Z" fill="#1f97ea"/><path d="M3.4,4.2 L7,0.8 L14.2,0.8" fill="none" stroke="#74c8fa" stroke-width="0.9"/><path d="M0,4.6 L5.6,4.6" stroke="#0a2468" stroke-width="1.2"/><rect x="8.2" y="2.2" width="2.5" height="4.6" fill="none" stroke="#fff" stroke-width="1.25"/><path d="M12.9,1.6 L12.9,7.4" stroke="#fff" stroke-width="1.6"/></svg>
<svg style="left:1180px;top:242px;" width="9" height="5" viewBox="0 0 9 5"><path d="M0,0 L8.6,0 L4.3,4.4 Z" fill="#000"/></svg>
<span class="t" style="left:1198px;top:235.0px;height:20px;line-height:20px;font-size:12px;color:#000;font-weight:normal;letter-spacing:0.128px;-webkit-text-stroke:0.15px #000;">InOut</span>
<div style="left:1657.0px;top:237px;width:15px;height:15px;border:1px solid #bcbcbc;border-radius:3px;background:linear-gradient(#fdfdfd 0%,#f2f2f2 48%,#e8e8e8 52%,#f4f4f4 100%);box-sizing:border-box"></div>
<div style="left:1722.0px;top:237px;width:15px;height:15px;border:1px solid #bcbcbc;border-radius:3px;background:linear-gradient(#fdfdfd 0%,#f2f2f2 48%,#e8e8e8 52%,#f4f4f4 100%);box-sizing:border-box"></div>
<div style="left:1782.0px;top:237px;width:15px;height:15px;border:1px solid #bcbcbc;border-radius:3px;background:linear-gradient(#fdfdfd 0%,#f2f2f2 48%,#e8e8e8 52%,#f4f4f4 100%);box-sizing:border-box"></div>
<div style="left:1852.0px;top:237px;width:15px;height:15px;border:1px solid #bcbcbc;border-radius:3px;background:linear-gradient(#fdfdfd 0%,#f2f2f2 48%,#e8e8e8 52%,#f4f4f4 100%);box-sizing:border-box"></div>
<div style="left:1131px;top:255px;width:24px;height:18px;background:#c8c8c8"></div>
<div style="left:1155px;top:255px;width:1px;height:18px;background:#b6b6b6"></div>
<div style="left:1156px;top:255px;width:18px;height:18px;background:#f0f0f0"></div>
<div style="left:1175px;top:255px;width:169px;height:18px;background:#f0f0f0"></div>
<div style="left:1175px;top:255px;width:18px;height:18px;background:#eaeaea"></div>
<div style="left:1345px;top:255px;width:119px;height:18px;background:#f0f0f0"></div>
<div style="left:1465px;top:255px;width:59px;height:18px;background:#e3e3e3"></div>
<div style="left:1525px;top:255px;width:99px;height:18px;background:#e3e3e3"></div>
<div style="left:1625px;top:255px;width:79px;height:18px;background:#e3e3e3"></div>
<div style="left:1705px;top:255px;width:49px;height:18px;background:#e3e3e3"></div>
<div style="left:1755px;top:255px;width:69px;height:18px;background:#e3e3e3"></div>
<div style="left:1825px;top:255px;width:71px;height:18px;background:#e3e3e3"></div>
<span class="t" style="left:1134.3px;top:254.0px;height:20px;line-height:20px;font-size:12px;color:#727272;font-weight:normal;">8</span>
<div style="left:1180px;top:261px;width:5px;height:5px;background:linear-gradient(135deg,#4a66e0,#1a2fb8)"></div>
<span class="t" style="left:1216px;top:254.5px;height:20px;line-height:20px;font-size:12px;color:#7a7a7a;font-weight:normal;transform:scaleX(0.9470);transform-origin:0 50%;-webkit-text-stroke:0.2px #7a7a7a;">&lt;新增&gt;</span>
<div style="left:1657.0px;top:256px;width:15px;height:15px;border:1px solid #bcbcbc;border-radius:3px;background:linear-gradient(#fdfdfd 0%,#f2f2f2 48%,#e8e8e8 52%,#f4f4f4 100%);box-sizing:border-box"></div>
<div style="left:1722.0px;top:256px;width:15px;height:15px;border:1px solid #bcbcbc;border-radius:3px;background:linear-gradient(#fdfdfd 0%,#f2f2f2 48%,#e8e8e8 52%,#f4f4f4 100%);box-sizing:border-box"></div>
<div style="left:1782.0px;top:256px;width:15px;height:15px;border:1px solid #bcbcbc;border-radius:3px;background:linear-gradient(#fdfdfd 0%,#f2f2f2 48%,#e8e8e8 52%,#f4f4f4 100%);box-sizing:border-box"></div>
<div style="left:1852.0px;top:256px;width:15px;height:15px;border:1px solid #bcbcbc;border-radius:3px;background:linear-gradient(#fdfdfd 0%,#f2f2f2 48%,#e8e8e8 52%,#f4f4f4 100%);box-sizing:border-box"></div>
<div style="left:1131px;top:274px;width:24px;height:18px;background:#c8c8c8"></div>
<div style="left:1155px;top:274px;width:1px;height:18px;background:#b6b6b6"></div>
<div style="left:1156px;top:274px;width:18px;height:18px;background:#e3e3e3"></div>
<div style="left:1175px;top:274px;width:169px;height:18px;background:#e3e3e3"></div>
<div style="left:1345px;top:274px;width:119px;height:18px;background:#e3e3e3"></div>
<div style="left:1465px;top:274px;width:59px;height:18px;background:#e3e3e3"></div>
<div style="left:1525px;top:274px;width:99px;height:18px;background:#e3e3e3"></div>
<div style="left:1625px;top:274px;width:79px;height:18px;background:#e3e3e3"></div>
<div style="left:1705px;top:274px;width:49px;height:18px;background:#e3e3e3"></div>
<div style="left:1755px;top:274px;width:69px;height:18px;background:#e3e3e3"></div>
<div style="left:1825px;top:274px;width:71px;height:18px;background:#e3e3e3"></div>
<span class="t" style="left:1134.3px;top:273.0px;height:20px;line-height:20px;font-size:12px;color:#727272;font-weight:normal;">9</span>
<svg style="left:1156.7px;top:279px;" width="16" height="10" viewBox="0 0 16 10"><path d="M2.2,4.7 L6.6,0.2 L15.2,0.2 L15.2,9.4 L6.6,9.4 Z" fill="#0c58a8"/><path d="M2.6,4.5 L6.8,0.3 L14.6,0.3 L14.6,8.6 L6.8,8.6 Z" fill="#1f97ea"/><path d="M3.4,4.2 L7,0.8 L14.2,0.8" fill="none" stroke="#74c8fa" stroke-width="0.9"/><path d="M0,4.6 L5.6,4.6" stroke="#0a2468" stroke-width="1.2"/><rect x="8.2" y="2.2" width="2.5" height="4.6" fill="none" stroke="#fff" stroke-width="1.25"/><path d="M12.9,1.6 L12.9,7.4" stroke="#fff" stroke-width="1.6"/></svg>
<svg style="left:1180px;top:280px;" width="9" height="5" viewBox="0 0 9 5"><path d="M0,0 L8.6,0 L4.3,4.4 Z" fill="#000"/></svg>
<span class="t" style="left:1198px;top:273.0px;height:20px;line-height:20px;font-size:12px;color:#000;font-weight:normal;letter-spacing:-0.003px;-webkit-text-stroke:0.15px #000;">Static</span>
<div style="left:1657.0px;top:275px;width:15px;height:15px;border:1px solid #bcbcbc;border-radius:3px;background:linear-gradient(#fdfdfd 0%,#f2f2f2 48%,#e8e8e8 52%,#f4f4f4 100%);box-sizing:border-box"></div>
<div style="left:1722.0px;top:275px;width:15px;height:15px;border:1px solid #bcbcbc;border-radius:3px;background:linear-gradient(#fdfdfd 0%,#f2f2f2 48%,#e8e8e8 52%,#f4f4f4 100%);box-sizing:border-box"></div>
<div style="left:1782.0px;top:275px;width:15px;height:15px;border:1px solid #bcbcbc;border-radius:3px;background:linear-gradient(#fdfdfd 0%,#f2f2f2 48%,#e8e8e8 52%,#f4f4f4 100%);box-sizing:border-box"></div>
<div style="left:1852.0px;top:275px;width:15px;height:15px;border:1px solid #bcbcbc;border-radius:3px;background:linear-gradient(#fdfdfd 0%,#f2f2f2 48%,#e8e8e8 52%,#f4f4f4 100%);box-sizing:border-box"></div>
<div style="left:1131px;top:293px;width:24px;height:18px;background:#c8c8c8"></div>
<div style="left:1155px;top:293px;width:1px;height:18px;background:#b6b6b6"></div>
<div style="left:1156px;top:293px;width:18px;height:18px;background:#e3e3e3"></div>
<div style="left:1175px;top:293px;width:169px;height:18px;background:#f0f0f0"></div>
<div style="left:1175px;top:293px;width:18px;height:18px;background:#eaeaea"></div>
<div style="left:1345px;top:293px;width:119px;height:18px;background:#f0f0f0"></div>
<div style="left:1465px;top:293px;width:59px;height:18px;background:#e3e3e3"></div>
<div style="left:1525px;top:293px;width:99px;height:18px;background:#e3e3e3"></div>
<div style="left:1625px;top:293px;width:79px;height:18px;background:#f0f0f0"></div>
<div style="left:1705px;top:293px;width:49px;height:18px;background:#f0f0f0"></div>
<div style="left:1755px;top:293px;width:69px;height:18px;background:#f0f0f0"></div>
<div style="left:1825px;top:293px;width:71px;height:18px;background:#f0f0f0"></div>
<span class="t" style="left:1134.3px;top:292.0px;height:20px;line-height:20px;font-size:12px;color:#727272;font-weight:normal;">10</span>
<svg style="left:1156.7px;top:298px;" width="16" height="10" viewBox="0 0 16 10"><path d="M2.2,4.7 L6.6,0.2 L15.2,0.2 L15.2,9.4 L6.6,9.4 Z" fill="#0c58a8"/><path d="M2.6,4.5 L6.8,0.3 L14.6,0.3 L14.6,8.6 L6.8,8.6 Z" fill="#1f97ea"/><path d="M3.4,4.2 L7,0.8 L14.2,0.8" fill="none" stroke="#74c8fa" stroke-width="0.9"/><path d="M0,4.6 L5.6,4.6" stroke="#0a2468" stroke-width="1.2"/><rect x="8.2" y="2.2" width="2.5" height="4.6" fill="none" stroke="#fff" stroke-width="1.25"/><path d="M12.9,1.6 L12.9,7.4" stroke="#fff" stroke-width="1.6"/></svg>
<div style="left:1180px;top:299px;width:5px;height:5px;background:linear-gradient(135deg,#4a66e0,#1a2fb8)"></div>
<svg style="left:1200px;top:297px;" width="5" height="9" viewBox="0 0 5 9"><path d="M0,0 L5,4.5 L0,9 Z" fill="#000"/></svg>
<span class="t" style="left:1216px;top:292.0px;height:20px;line-height:20px;font-size:12px;color:#000;font-weight:normal;letter-spacing:-0.005px;-webkit-text-stroke:0.15px #000;">Bit</span>
<span class="t" style="left:1349px;top:292.0px;height:20px;line-height:20px;font-size:12px;color:#000;font-weight:normal;transform:scaleX(0.9831);transform-origin:0 50%;-webkit-text-stroke:0.15px #000;">Array[0..15] of Bool</span>
<span class="t" style="left:1469px;top:292.0px;height:20px;line-height:20px;font-size:12px;color:#000;font-weight:normal;transform:scaleX(0.9588);transform-origin:0 50%;-webkit-text-stroke:0.15px #000;">4.0</span>
<div style="left:1657.0px;top:294px;width:15px;height:15px;border:1px solid #4a4e58;border-radius:3px;background:linear-gradient(#e6eefc 0%,#c4d8f6 30%,#6cb0e6 55%,#36c4ea 80%,#78eef8 100%);box-sizing:border-box;box-shadow:inset 0 0 0 1px #2c5cb4"></div>
<svg style="left:1657.0px;top:294px;" width="15" height="15" viewBox="0 0 15 15"><path d="M3.2,6.3 L6.3,9.2 L11.9,3 L11.9,6.2 L6.3,12 L3.2,9.2 Z" fill="#0b3790"/></svg>
<div style="left:1722.0px;top:294px;width:15px;height:15px;border:1px solid #4a4e58;border-radius:3px;background:linear-gradient(#e6eefc 0%,#c4d8f6 30%,#6cb0e6 55%,#36c4ea 80%,#78eef8 100%);box-sizing:border-box;box-shadow:inset 0 0 0 1px #2c5cb4"></div>
<svg style="left:1722.0px;top:294px;" width="15" height="15" viewBox="0 0 15 15"><path d="M3.2,6.3 L6.3,9.2 L11.9,3 L11.9,6.2 L6.3,12 L3.2,9.2 Z" fill="#0b3790"/></svg>
<div style="left:1782.0px;top:294px;width:15px;height:15px;border:1px solid #4a4e58;border-radius:3px;background:linear-gradient(#e6eefc 0%,#c4d8f6 30%,#6cb0e6 55%,#36c4ea 80%,#78eef8 100%);box-sizing:border-box;box-shadow:inset 0 0 0 1px #2c5cb4"></div>
<svg style="left:1782.0px;top:294px;" width="15" height="15" viewBox="0 0 15 15"><path d="M3.2,6.3 L6.3,9.2 L11.9,3 L11.9,6.2 L6.3,12 L3.2,9.2 Z" fill="#0b3790"/></svg>
<div style="left:1852.0px;top:294px;width:15px;height:15px;border:1px solid #7e7e7e;border-radius:3px;background:linear-gradient(#f6f6f6 0%,#e6e6e6 48%,#d2d2d2 52%,#e2e2e2 100%);box-sizing:border-box"></div>
<div style="left:1131px;top:312px;width:24px;height:18px;background:#c8c8c8"></div>
<div style="left:1155px;top:312px;width:1px;height:18px;background:#b6b6b6"></div>
<div style="left:1156px;top:312px;width:18px;height:18px;background:#e3e3e3"></div>
<div style="left:1175px;top:312px;width:169px;height:18px;background:#f0f0f0"></div>
<div style="left:1175px;top:312px;width:18px;height:18px;background:#eaeaea"></div>
<div style="left:1345px;top:312px;width:119px;height:18px;background:#f0f0f0"></div>
<div style="left:1465px;top:312px;width:59px;height:18px;background:#e3e3e3"></div>
<div style="left:1525px;top:312px;width:99px;height:18px;background:#e3e3e3"></div>
<div style="left:1625px;top:312px;width:79px;height:18px;background:#e3e3e3"></div>
<div style="left:1705px;top:312px;width:49px;height:18px;background:#e3e3e3"></div>
<div style="left:1755px;top:312px;width:69px;height:18px;background:#e3e3e3"></div>
<div style="left:1825px;top:312px;width:71px;height:18px;background:#e3e3e3"></div>
<span class="t" style="left:1134.3px;top:311.0px;height:20px;line-height:20px;font-size:12px;color:#727272;font-weight:normal;">11</span>
<svg style="left:1156.7px;top:317px;" width="16" height="10" viewBox="0 0 16 10"><path d="M2.2,4.7 L6.6,0.2 L15.2,0.2 L15.2,9.4 L6.6,9.4 Z" fill="#0c58a8"/><path d="M2.6,4.5 L6.8,0.3 L14.6,0.3 L14.6,8.6 L6.8,8.6 Z" fill="#1f97ea"/><path d="M3.4,4.2 L7,0.8 L14.2,0.8" fill="none" stroke="#74c8fa" stroke-width="0.9"/><path d="M0,4.6 L5.6,4.6" stroke="#0a2468" stroke-width="1.2"/><rect x="8.2" y="2.2" width="2.5" height="4.6" fill="none" stroke="#fff" stroke-width="1.25"/><path d="M12.9,1.6 L12.9,7.4" stroke="#fff" stroke-width="1.6"/></svg>
<span class="t" style="left:1216px;top:311.0px;height:20px;line-height:20px;font-size:12px;color:#000;font-weight:normal;transform:scaleX(0.9138);transform-origin:0 50%;-webkit-text-stroke:0.15px #000;">Word</span>
<span class="t" style="left:1290px;top:311.0px;height:20px;line-height:20px;font-size:12px;color:#000;font-weight:normal;transform:scaleX(0.9478);transform-origin:0 50%;-webkit-text-stroke:0.15px #000;">AT "Bit"</span>
<span class="t" style="left:1349px;top:311.0px;height:20px;line-height:20px;font-size:12px;color:#000;font-weight:normal;transform:scaleX(0.9138);transform-origin:0 50%;-webkit-text-stroke:0.15px #000;">Word</span>
<span class="t" style="left:1469px;top:311.0px;height:20px;line-height:20px;font-size:12px;color:#000;font-weight:normal;transform:scaleX(0.9588);transform-origin:0 50%;-webkit-text-stroke:0.15px #000;">4.0</span>
<div style="left:1657.0px;top:313px;width:15px;height:15px;border:1px solid #bcbcbc;border-radius:3px;background:linear-gradient(#fdfdfd 0%,#f2f2f2 48%,#e8e8e8 52%,#f4f4f4 100%);box-sizing:border-box"></div>
<div style="left:1722.0px;top:313px;width:15px;height:15px;border:1px solid #bcbcbc;border-radius:3px;background:linear-gradient(#fdfdfd 0%,#f2f2f2 48%,#e8e8e8 52%,#f4f4f4 100%);box-sizing:border-box"></div>
<div style="left:1782.0px;top:313px;width:15px;height:15px;border:1px solid #bcbcbc;border-radius:3px;background:linear-gradient(#fdfdfd 0%,#f2f2f2 48%,#e8e8e8 52%,#f4f4f4 100%);box-sizing:border-box"></div>
<div style="left:1852.0px;top:313px;width:15px;height:15px;border:1px solid #bcbcbc;border-radius:3px;background:linear-gradient(#fdfdfd 0%,#f2f2f2 48%,#e8e8e8 52%,#f4f4f4 100%);box-sizing:border-box"></div>
<div style="left:1131px;top:331px;width:24px;height:18px;background:#c8c8c8"></div>
<div style="left:1155px;top:331px;width:1px;height:18px;background:#b6b6b6"></div>
<div style="left:1156px;top:331px;width:18px;height:18px;background:#e3e3e3"></div>
<div style="left:1175px;top:331px;width:169px;height:18px;background:#f0f0f0"></div>
<div style="left:1175px;top:331px;width:18px;height:18px;background:#eaeaea"></div>
<div style="left:1345px;top:331px;width:119px;height:18px;background:#f0f0f0"></div>
<div style="left:1465px;top:331px;width:59px;height:18px;background:#e3e3e3"></div>
<div style="left:1525px;top:331px;width:99px;height:18px;background:#f0f0f0"></div>
<div style="left:1625px;top:331px;width:79px;height:18px;background:#f0f0f0"></div>
<div style="left:1705px;top:331px;width:49px;height:18px;background:#f0f0f0"></div>
<div style="left:1755px;top:331px;width:69px;height:18px;background:#f0f0f0"></div>
<div style="left:1825px;top:331px;width:71px;height:18px;background:#f0f0f0"></div>
<span class="t" style="left:1134.3px;top:330.0px;height:20px;line-height:20px;font-size:12px;color:#727272;font-weight:normal;">12</span>
<svg style="left:1156.7px;top:336px;" width="16" height="10" viewBox="0 0 16 10"><path d="M2.2,4.7 L6.6,0.2 L15.2,0.2 L15.2,9.4 L6.6,9.4 Z" fill="#0c58a8"/><path d="M2.6,4.5 L6.8,0.3 L14.6,0.3 L14.6,8.6 L6.8,8.6 Z" fill="#1f97ea"/><path d="M3.4,4.2 L7,0.8 L14.2,0.8" fill="none" stroke="#74c8fa" stroke-width="0.9"/><path d="M0,4.6 L5.6,4.6" stroke="#0a2468" stroke-width="1.2"/><rect x="8.2" y="2.2" width="2.5" height="4.6" fill="none" stroke="#fff" stroke-width="1.25"/><path d="M12.9,1.6 L12.9,7.4" stroke="#fff" stroke-width="1.6"/></svg>
<div style="left:1180px;top:337px;width:5px;height:5px;background:linear-gradient(135deg,#4a66e0,#1a2fb8)"></div>
<span class="t" style="left:1216px;top:330.0px;height:20px;line-height:20px;font-size:12px;color:#000;font-weight:normal;transform:scaleX(0.8333);transform-origin:0 50%;-webkit-text-stroke:0.15px #000;">W1</span>
<span class="t" style="left:1349px;top:330.0px;height:20px;line-height:20px;font-size:12px;color:#000;font-weight:normal;transform:scaleX(0.9138);transform-origin:0 50%;-webkit-text-stroke:0.15px #000;">Word</span>
<span class="t" style="left:1469px;top:330.0px;height:20px;line-height:20px;font-size:12px;color:#000;font-weight:normal;transform:scaleX(0.9588);transform-origin:0 50%;-webkit-text-stroke:0.15px #000;">6.0</span>
<span class="t" style="left:1530px;top:330.0px;height:20px;line-height:20px;font-size:12px;color:#7a7a7a;font-weight:normal;letter-spacing:0.324px;">16#0</span>
<div style="left:1657.0px;top:332px;width:15px;height:15px;border:1px solid #4a4e58;border-radius:3px;background:linear-gradient(#e6eefc 0%,#c4d8f6 30%,#6cb0e6 55%,#36c4ea 80%,#78eef8 100%);box-sizing:border-box;box-shadow:inset 0 0 0 1px #2c5cb4"></div>
<svg style="left:1657.0px;top:332px;" width="15" height="15" viewBox="0 0 15 15"><path d="M3.2,6.3 L6.3,9.2 L11.9,3 L11.9,6.2 L6.3,12 L3.2,9.2 Z" fill="#0b3790"/></svg>
<div style="left:1722.0px;top:332px;width:15px;height:15px;border:1px solid #4a4e58;border-radius:3px;background:linear-gradient(#e6eefc 0%,#c4d8f6 30%,#6cb0e6 55%,#36c4ea 80%,#78eef8 100%);box-sizing:border-box;box-shadow:inset 0 0 0 1px #2c5cb4"></div>
<svg style="left:1722.0px;top:332px;" width="15" height="15" viewBox="0 0 15 15"><path d="M3.2,6.3 L6.3,9.2 L11.9,3 L11.9,6.2 L6.3,12 L3.2,9.2 Z" fill="#0b3790"/></svg>
<div style="left:1782.0px;top:332px;width:15px;height:15px;border:1px solid #4a4e58;border-radius:3px;background:linear-gradient(#e6eefc 0%,#c4d8f6 30%,#6cb0e6 55%,#36c4ea 80%,#78eef8 100%);box-sizing:border-box;box-shadow:inset 0 0 0 1px #2c5cb4"></div>
<svg style="left:1782.0px;top:332px;" width="15" height="15" viewBox="0 0 15 15"><path d="M3.2,6.3 L6.3,9.2 L11.9,3 L11.9,6.2 L6.3,12 L3.2,9.2 Z" fill="#0b3790"/></svg>
<div style="left:1852.0px;top:332px;width:15px;height:15px;border:1px solid #7e7e7e;border-radius:3px;background:linear-gradient(#f6f6f6 0%,#e6e6e6 48%,#d2d2d2 52%,#e2e2e2 100%);box-sizing:border-box"></div>
<div style="left:1131px;top:350px;width:24px;height:3px;background:#c8c8c8"></div>
<div style="left:1155px;top:350px;width:1px;height:3px;background:#b6b6b6"></div>
<div style="left:1156px;top:350px;width:18px;height:3px;background:#f0f0f0"></div>
<div style="left:1175px;top:350px;width:169px;height:3px;background:#f0f0f0"></div>
<div style="left:1175px;top:350px;width:18px;height:3px;background:#eaeaea"></div>
<div style="left:1345px;top:350px;width:119px;height:3px;background:#f0f0f0"></div>
<div style="left:1465px;top:350px;width:59px;height:3px;background:#e3e3e3"></div>
<div style="left:1525px;top:350px;width:99px;height:3px;background:#e3e3e3"></div>
<div style="left:1625px;top:350px;width:79px;height:3px;background:#e3e3e3"></div>
<div style="left:1705px;top:350px;width:49px;height:3px;background:#e3e3e3"></div>
<div style="left:1755px;top:350px;width:69px;height:3px;background:#e3e3e3"></div>
<div style="left:1825px;top:350px;width:71px;height:3px;background:#e3e3e3"></div>
<div style="left:1657.0px;top:351px;width:15px;height:3px;border:1px solid #bdbdbd;border-bottom:none;border-radius:3px 3px 0 0;background:#f8f8f8;box-sizing:border-box"></div>
<div style="left:1722.0px;top:351px;width:15px;height:3px;border:1px solid #bdbdbd;border-bottom:none;border-radius:3px 3px 0 0;background:#f8f8f8;box-sizing:border-box"></div>
<div style="left:1782.0px;top:351px;width:15px;height:3px;border:1px solid #bdbdbd;border-bottom:none;border-radius:3px 3px 0 0;background:#f8f8f8;box-sizing:border-box"></div>
<div style="left:1852.0px;top:351px;width:15px;height:3px;border:1px solid #bdbdbd;border-bottom:none;border-radius:3px 3px 0 0;background:#f8f8f8;box-sizing:border-box"></div>
<span class="t" style="left:1216px;top:349.0px;height:20px;line-height:20px;font-size:12px;color:#7a7a7a;font-weight:normal;transform:scaleX(0.9470);transform-origin:0 50%;clip-path:inset(0 0 12px 0);-webkit-text-stroke:0.2px #7a7a7a;">&lt;新增&gt;</span>
<div style="left:1429px;top:141px;width:17px;height:18px;background:linear-gradient(#f8f8f8,#dcdcdc);border:1px solid #808080;border-radius:3px;box-sizing:border-box;box-shadow:inset 0 0 0 1px #bcbcbc"></div>
<svg style="left:1432px;top:144px;" width="11" height="12" viewBox="0 0 11 12"><rect x="0.5" y="0.5" width="10" height="11" fill="#f4f5ff" stroke="#7a86e0"/><g fill="#14143c"><rect x="2" y="2" width="1" height="1"/><rect x="4" y="2" width="5" height="1"/><rect x="2" y="4" width="1" height="1"/><rect x="4" y="4" width="5" height="1"/><rect x="2" y="6" width="1" height="1"/><rect x="4" y="6" width="5" height="1"/><rect x="2" y="8" width="1" height="1"/><rect x="4" y="8" width="5" height="1"/></g></svg>
<div style="left:1447px;top:141px;width:17px;height:18px;background:linear-gradient(#f8f8f8,#dcdcdc);border:1px solid #808080;border-radius:3px;box-sizing:border-box;box-shadow:inset 0 0 0 1px #bcbcbc"></div>
<svg style="left:1451px;top:148px;" width="9" height="5" viewBox="0 0 9 5"><path d="M0,0 L9,0 L4.5,5 Z" fill="#000"/></svg>
<div style="left:1879px;top:122px;width:17px;height:231px;background:#c4c4c4"></div>
<div style="left:1878px;top:122px;width:1px;height:231px;background:#f4f4f4"></div>
<div style="left:1879px;top:122px;width:17px;height:18px;background:linear-gradient(#f6f6f6,#e2e2e2);border:1px solid #8e8e8e;box-shadow:inset 0 0 0 1px #fdfdfd;box-sizing:border-box"></div>
<svg style="left:1879px;top:122px;" width="17" height="18" viewBox="0 0 17 18"><path d="M4,11 L8.5,6.5 L13,11" fill="none" stroke="#555" stroke-width="2"/></svg>
<div style="left:1879px;top:335px;width:17px;height:18px;background:linear-gradient(#f6f6f6,#e2e2e2);border:1px solid #8e8e8e;box-shadow:inset 0 0 0 1px #fdfdfd;box-sizing:border-box"></div>
<svg style="left:1879px;top:335px;" width="17" height="18" viewBox="0 0 17 18"><path d="M4,7 L8.5,11.5 L13,7" fill="none" stroke="#555" stroke-width="2"/></svg>
<div style="left:1879px;top:141px;width:17px;height:85px;background:linear-gradient(90deg,#dcdcdc,#f2f2f2 50%,#e0e0e0);border:1px solid #8e8e8e;box-shadow:inset 0 0 0 1px #fdfdfd;box-sizing:border-box"></div>
<div style="left:1883px;top:180.5px;width:9px;height:1px;background:#555"></div>
<div style="left:1883px;top:182.5px;width:9px;height:1px;background:#555"></div>
<div style="left:1883px;top:184.5px;width:9px;height:1px;background:#555"></div>
<div style="left:1883px;top:186.5px;width:9px;height:1px;background:#555"></div>
<div style="left:1131px;top:353px;width:765px;height:1px;background:#fafafa"></div>
<div style="left:1131px;top:354px;width:765px;height:18px;background:#c4c4c4"></div>
<div style="left:1156px;top:354px;width:722px;height:18px;background:#c4c4c4"></div>
<div style="left:1156px;top:354px;width:18px;height:18px;background:linear-gradient(#f6f6f6,#e2e2e2);border:1px solid #8e8e8e;box-shadow:inset 0 0 0 1px #fdfdfd;box-sizing:border-box"></div>
<svg style="left:1156px;top:354px;" width="18" height="18" viewBox="0 0 18 18"><path d="M11,4.5 L6.5,9 L11,13.5" fill="none" stroke="#444" stroke-width="2"/></svg>
<div style="left:1860px;top:354px;width:18px;height:18px;background:linear-gradient(#f6f6f6,#e2e2e2);border:1px solid #8e8e8e;box-shadow:inset 0 0 0 1px #fdfdfd;box-sizing:border-box"></div>
<svg style="left:1860px;top:354px;" width="18" height="18" viewBox="0 0 18 18"><path d="M7,4.5 L11.5,9 L7,13.5" fill="none" stroke="#444" stroke-width="2"/></svg>
<div style="left:1175px;top:354px;width:632px;height:18px;background:linear-gradient(#f0f0f0,#dedede 50%,#d6d6d6);border:1px solid #8e8e8e;box-shadow:inset 0 0 0 1px #fdfdfd;box-sizing:border-box"></div>
<div style="left:1488px;top:359px;width:1px;height:8px;background:#555"></div>
<div style="left:1490px;top:359px;width:1px;height:8px;background:#555"></div>
<div style="left:1492px;top:359px;width:1px;height:8px;background:#555"></div>
<div style="left:1494px;top:359px;width:1px;height:8px;background:#555"></div>
<div style="left:1131px;top:372px;width:765px;height:1px;background:#7e7e7e"></div>
<div style="left:1131px;top:373px;width:765px;height:5px;background:linear-gradient(#cfcfcf 0,#dcdcdc 1px)"></div>
<div style="left:1131px;top:378px;width:765px;height:1px;background:#909090"></div>
<div style="left:1131px;top:379px;width:765px;height:1px;background:#fafafa"></div>
<div style="left:1484px;top:373px;width:24px;height:5px;background:linear-gradient(#a2a2a2,#d6d6d6);border-left:1px solid #8a8a8a;border-right:1px solid #8a8a8a;box-sizing:border-box"></div>
<svg style="left:1493px;top:374px;" width="6" height="3" viewBox="0 0 6 3"><path d="M0,3 L6,3 L3,0 Z" fill="#000"/></svg>
<div style="left:1518px;top:373px;width:24px;height:5px;background:linear-gradient(#a2a2a2,#d6d6d6);border-left:1px solid #8a8a8a;border-right:1px solid #8a8a8a;box-sizing:border-box"></div>
<svg style="left:1527px;top:374px;" width="6" height="3" viewBox="0 0 6 3"><path d="M0,0 L6,0 L3,3 Z" fill="#000"/></svg>
<div style="left:1131px;top:380px;width:47px;height:25px;background:#e8e8e8"></div>
<div style="left:1131px;top:405px;width:47px;height:176px;background:#efefef"></div>
<div style="left:1131px;top:423px;width:47px;height:1px;background:#fbfbfb"></div>
<div style="left:1131px;top:442px;width:47px;height:1px;background:#fbfbfb"></div>
<div style="left:1131px;top:461px;width:47px;height:1px;background:#fbfbfb"></div>
<div style="left:1131px;top:480px;width:47px;height:1px;background:#fbfbfb"></div>
<div style="left:1131px;top:499px;width:47px;height:1px;background:#fbfbfb"></div>
<div style="left:1131px;top:518px;width:47px;height:1px;background:#fbfbfb"></div>
<div style="left:1131px;top:537px;width:47px;height:1px;background:#fbfbfb"></div>
<div style="left:1131px;top:556px;width:47px;height:1px;background:#fbfbfb"></div>
<div style="left:1131px;top:575px;width:47px;height:1px;background:#fbfbfb"></div>
<svg style="left:1160px;top:382.5px;" width="5" height="8" viewBox="0 0 5 8"><path d="M0,0 L4.5,4 L0,8 Z" fill="#000"/></svg>
<div style="left:1178px;top:380px;width:8px;height:201px;background:#d6d6d6;border-left:1px solid #8c8c8c;border-right:1px solid #949494;box-sizing:border-box"></div>
<div style="left:1186px;top:380px;width:710px;height:38px;background:#ececec"></div>
<div style="left:1188px;top:382px;width:32px;height:32px;background:#dcecf6"></div>
<span class="t" style="left:1184px;top:387.5px;width:40px;height:20px;line-height:20px;text-align:center;font-size:8.4px;color:#5a7aa0;letter-spacing:0px;-webkit-text-stroke:0.2px #5a7aa0">IF...</span>
<div style="left:1222px;top:382px;width:32px;height:32px;background:#fff"></div>
<span class="t" style="left:1218px;top:382.5px;width:40px;height:20px;line-height:20px;text-align:center;font-size:8.4px;color:#14143c;letter-spacing:0px;-webkit-text-stroke:0.2px #14143c">CASE...</span>
<span class="t" style="left:1218px;top:392.5px;width:40px;height:20px;line-height:20px;text-align:center;font-size:8.4px;color:#14143c;letter-spacing:0px;-webkit-text-stroke:0.2px #14143c">OF...</span>
<div style="left:1256px;top:382px;width:32px;height:32px;background:#fff"></div>
<span class="t" style="left:1252px;top:382.5px;width:40px;height:20px;line-height:20px;text-align:center;font-size:8.4px;color:#14143c;letter-spacing:0px;-webkit-text-stroke:0.2px #14143c">FOR...</span>
<span class="t" style="left:1252px;top:392.5px;width:40px;height:20px;line-height:20px;text-align:center;font-size:8.4px;color:#14143c;letter-spacing:0px;-webkit-text-stroke:0.2px #14143c">TO DO..</span>
<div style="left:1290px;top:382px;width:32px;height:32px;background:#fff"></div>
<span class="t" style="left:1286px;top:382.5px;width:40px;height:20px;line-height:20px;text-align:center;font-size:8.4px;color:#14143c;letter-spacing:0px;-webkit-text-stroke:0.2px #14143c">WHILE..</span>
<span class="t" style="left:1286px;top:392.5px;width:40px;height:20px;line-height:20px;text-align:center;font-size:8.4px;color:#14143c;letter-spacing:0px;-webkit-text-stroke:0.2px #14143c">DO...</span>
<div style="left:1324px;top:382px;width:32px;height:32px;background:#fff"></div>
<span class="t" style="left:1320px;top:387.5px;width:40px;height:20px;line-height:20px;text-align:center;font-size:8.4px;color:#14143c;letter-spacing:0px;-webkit-text-stroke:0.2px #14143c">(*...*)</span>
<div style="left:1358px;top:382px;width:32px;height:32px;background:#fff"></div>
<span class="t" style="left:1354px;top:387.5px;width:40px;height:20px;line-height:20px;text-align:center;font-size:8.4px;color:#14143c;letter-spacing:0px;-webkit-text-stroke:0.2px #14143c">REGION</span>
<div style="left:1186px;top:418px;width:19px;height:163px;background:#c2c2c2;border-right:1px solid #a4a4a4;box-sizing:border-box"></div>
<div style="left:1205px;top:418px;width:691px;height:163px;background:#fff"></div>
<div style="left:1186px;top:418px;width:710px;height:1px;background:#c4c4c4"></div>
<span class="t m" style="left:1218px;top:418px;height:20px;line-height:20px;color:#555">1</span>
<span class="t m" style="left:1239px;top:418px;height:20px;line-height:20px"><span style="color:#6a3aa0">#W</span><span style="color:#222"> := </span><span style="color:#7a1a1a">ROL</span><span style="color:#222">(</span><span style="color:#6a3aa0">IN</span><span style="color:#222"> := </span><span style="color:#6a3aa0">#W1</span><span style="color:#222">, </span><span style="color:#6a3aa0">N</span><span style="color:#222"> := </span><span style="color:#2a6aa8">8</span><span style="color:#222">);</span></span>
<span class="t m" style="left:1218px;top:435px;height:20px;line-height:20px;color:#555">2</span>
<span class="t m" style="left:1239px;top:435px;height:20px;line-height:20px"><span style="color:#6a3aa0">#Bit</span><span style="color:#222"> := </span><span style="color:#6a3aa0">#B</span><span style="color:#222">;</span></span>
<span class="t m" style="left:1218px;top:452px;height:20px;line-height:20px;color:#555">3</span>
<span class="t m" style="left:1239px;top:452px;height:20px;line-height:20px"><span style="color:#6a3aa0">#W1</span><span style="color:#222"> := </span><span style="color:#6a3aa0">#Word</span><span style="color:#222">;</span></span>
<div style="left:1895px;top:1px;width:1px;height:580px;background:#1f243a"></div>
</div></body></html>
